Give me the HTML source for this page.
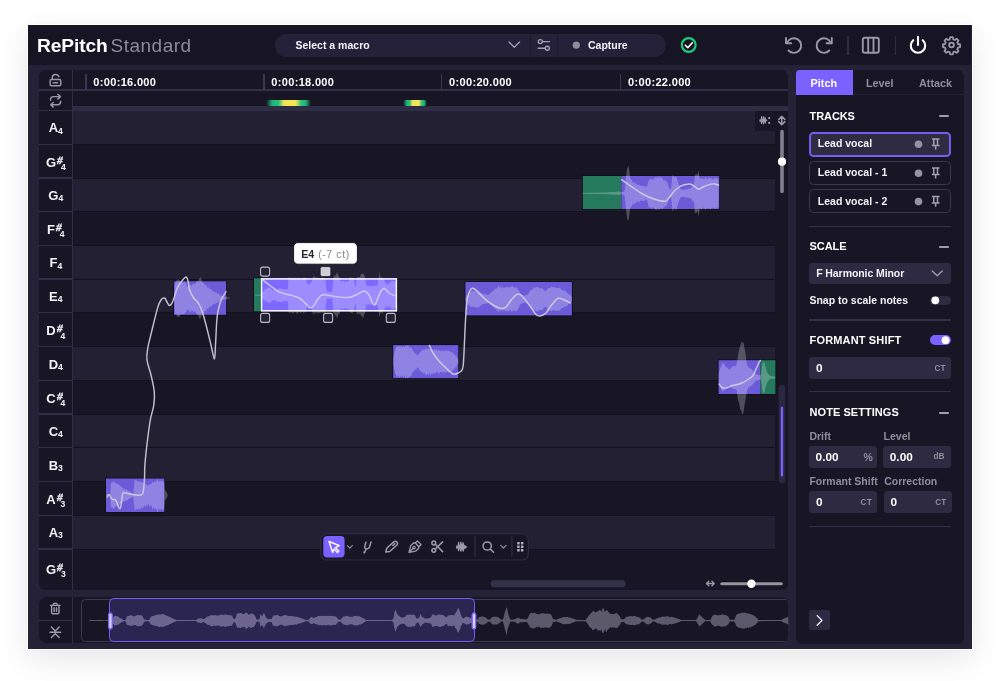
<!DOCTYPE html>
<html><head><meta charset="utf-8"><title>RePitch Standard</title>
<style>
*{box-sizing:border-box;margin:0;padding:0}
html,body{width:1000px;height:681px;background:#fff;overflow:hidden}
body{font-family:"Liberation Sans",sans-serif;color:#fff;position:relative}
#win{position:absolute;left:28.3px;top:25px;width:943.4px;height:623.8px;background:#252238;outline:1.3px solid #fff;box-shadow:0 10px 30px rgba(0,0,0,.10),0 0 6px rgba(0,0,0,.05)}
#hdr{position:absolute;left:28.3px;top:25px;width:943.1px;height:40px;background:#171524}
.panel{position:absolute;background:#181625;border-radius:8px;overflow:hidden}
.t{position:absolute;white-space:nowrap;font-weight:700;line-height:1;font-size:10.5px;color:#f3f2f7}
.g{color:#908e9c}
.ln{position:absolute;background:#312e47}
.box{position:absolute;background:#2d2a41;border-radius:3px}
svg{position:absolute;left:0;top:0;overflow:visible}
.kl{position:absolute;left:39px;width:33.6px;text-align:center;font-weight:700;font-size:13px;color:#f3f2f7;line-height:13px;height:13px;white-space:nowrap}
.kl span{display:inline-block;line-height:1}
.o1{font-size:8.6px;position:relative;top:1.2px;margin-left:0px}
.sh{font-size:10.5px;position:relative;top:-3.0px;margin-left:1.0px;width:3.9px;-webkit-text-stroke:0.35px #f3f2f7;transform:skewX(-8deg)}
.o2{font-size:8.6px;position:relative;top:3.1px}
</style></head>
<body>
<div id="root" style="position:absolute;left:0;top:0;width:1000px;height:681px;will-change:transform">
<div id="win"></div>
<div id="hdr"></div>

<div class="t" style="left:37px;top:36.1px;font-size:19.2px;letter-spacing:-0.1px;color:#fff">RePitch</div>
<div class="t" style="left:110.5px;top:36.1px;font-size:19px;font-weight:400;letter-spacing:0.5px;color:#8d8b99">Standard</div>
<div style="position:absolute;left:275px;top:33.5px;width:390.5px;height:23.5px;border-radius:12px;background:#242138"></div>
<div class="ln" style="left:530px;top:33.5px;width:1px;height:23.5px;background:#1b192b"></div>
<div class="ln" style="left:557px;top:33.5px;width:1px;height:23.5px;background:#1b192b"></div>
<div class="t" style="left:295.5px;top:40px">Select a macro</div>
<div class="t" style="left:588px;top:40px">Capture</div>
<div class="ln" style="left:847px;top:35.5px;width:1.5px;height:19.5px;background:#2f2c44"></div>
<div class="ln" style="left:894.5px;top:35.5px;width:1.5px;height:19.5px;background:#2f2c44"></div>
<svg width="1000" height="681" viewBox="0 0 1000 681" fill="none" stroke-linecap="round" stroke-linejoin="round">
 <!-- chevron -->
 <path d="M509 42 L514.3 47.3 L519.6 42" stroke="#a3a1b0" stroke-width="1.3"/>
 <!-- sliders icon -->
 <g stroke="#a3a1b0" stroke-width="1.4">
  <circle cx="540.3" cy="41.6" r="2"/><path d="M542.6 41.6 H549.5"/>
  <circle cx="547.3" cy="48.2" r="2"/><path d="M538.3 48.2 H545"/>
 </g>
 <circle cx="576.3" cy="45.2" r="3.6" fill="#8f8d9b"/>
 <!-- check circle -->
 <circle cx="688.7" cy="45" r="6.9" stroke="#1fc97c" stroke-width="2.2"/>
 <path d="M685.3 45.2 L687.8 47.7 L692.3 42.8" stroke="#fff" stroke-width="1.6"/>
 <!-- undo -->
 <g stroke="#9a98a6" stroke-width="1.9">
  <path d="M786 38 V43.2 H791.2"/>
  <path d="M787 43 A7.3 7.3 0 1 1 788.5 50.5"/>
  <path d="M831.8 38 V43.2 H826.6"/>
  <path d="M830.8 43 A7.3 7.3 0 1 0 829.3 50.5"/>
 </g>
 <!-- columns -->
 <g stroke="#9a98a6" stroke-width="1.9">
  <rect x="862.8" y="37.8" width="16" height="15" rx="2"/>
  <path d="M868.2 38 V52.6 M873.5 38 V52.6"/>
 </g>
 <!-- power -->
 <g stroke="#fff" stroke-width="2.1">
  <path d="M918 37 V45"/>
  <path d="M913.2 40.2 A7.2 7.2 0 1 0 922.8 40.2"/>
 </g>
 <!-- gear -->
 <g stroke="#9a98a6" stroke-width="1.8">
  <circle cx="951.5" cy="45" r="2.4"/>
  <path id="gear" d="M950.2 37.2 h2.6 l0.5 2.2 l1.5 0.6 l1.9 -1.2 l1.8 1.8 l-1.2 1.9 l0.6 1.5 l2.2 0.5 v2.6 l-2.2 0.5 l-0.6 1.5 l1.2 1.9 l-1.8 1.8 l-1.9 -1.2 l-1.5 0.6 l-0.5 2.2 h-2.6 l-0.5 -2.2 l-1.5 -0.6 l-1.9 1.2 l-1.8 -1.8 l1.2 -1.9 l-0.6 -1.5 l-2.2 -0.5 v-2.6 l2.2 -0.5 l0.6 -1.5 l-1.2 -1.9 l1.8 -1.8 l1.9 1.2 l1.5 -0.6 z"/>
 </g>
</svg>
<div class="panel" style="left:39px;top:70px;width:749.3px;height:519.8px;border-radius:6px"></div>
<div style="position:absolute;left:73px;top:111.05px;width:702.3px;height:32.73px;background:#222032"></div>
<div style="position:absolute;left:73px;top:178.51px;width:702.3px;height:32.73px;background:#222032"></div>
<div style="position:absolute;left:73px;top:245.97px;width:702.3px;height:32.73px;background:#222032"></div>
<div style="position:absolute;left:73px;top:279.70px;width:702.3px;height:32.73px;background:#222032"></div>
<div style="position:absolute;left:73px;top:347.16px;width:702.3px;height:32.73px;background:#222032"></div>
<div style="position:absolute;left:73px;top:414.62px;width:702.3px;height:32.73px;background:#222032"></div>
<div style="position:absolute;left:73px;top:448.35px;width:702.3px;height:32.73px;background:#222032"></div>
<div style="position:absolute;left:73px;top:515.81px;width:702.3px;height:32.73px;background:#222032"></div>
<div style="position:absolute;left:73px;top:143.78px;width:702.3px;height:1px;background:#13111e"></div>
<div style="position:absolute;left:73px;top:177.51px;width:702.3px;height:1px;background:#13111e"></div>
<div style="position:absolute;left:73px;top:211.24px;width:702.3px;height:1px;background:#13111e"></div>
<div style="position:absolute;left:73px;top:244.97px;width:702.3px;height:1px;background:#13111e"></div>
<div style="position:absolute;left:73px;top:278.70px;width:702.3px;height:1px;background:#13111e"></div>
<div style="position:absolute;left:73px;top:312.43px;width:702.3px;height:1px;background:#13111e"></div>
<div style="position:absolute;left:73px;top:346.16px;width:702.3px;height:1px;background:#13111e"></div>
<div style="position:absolute;left:73px;top:379.89px;width:702.3px;height:1px;background:#13111e"></div>
<div style="position:absolute;left:73px;top:413.62px;width:702.3px;height:1px;background:#13111e"></div>
<div style="position:absolute;left:73px;top:447.35px;width:702.3px;height:1px;background:#13111e"></div>
<div style="position:absolute;left:73px;top:481.08px;width:702.3px;height:1px;background:#13111e"></div>
<div style="position:absolute;left:73px;top:514.81px;width:702.3px;height:1px;background:#13111e"></div>
<div style="position:absolute;left:73px;top:548.54px;width:702.3px;height:1px;background:#13111e"></div>
<div style="position:absolute;left:755.4px;top:110.5px;width:20px;height:20px;background:#181625"></div>
<div style="position:absolute;left:73px;top:105.9px;width:715.3px;height:4.8px;background:#2f2c45"></div>
<div class="ln" style="left:39px;top:89.4px;width:749.3px;height:1.25px;background:#322f46"></div>
<div class="ln" style="left:72px;top:70px;width:1.3px;height:520px"></div>
<div class="ln" style="left:39px;top:109.6px;width:33px;height:1.2px"></div>
<div class="ln" style="left:39px;top:143.53px;width:33px;height:1.3px"></div>
<div class="ln" style="left:39px;top:177.26px;width:33px;height:1.3px"></div>
<div class="ln" style="left:39px;top:210.99px;width:33px;height:1.3px"></div>
<div class="ln" style="left:39px;top:244.72px;width:33px;height:1.3px"></div>
<div class="ln" style="left:39px;top:278.45px;width:33px;height:1.3px"></div>
<div class="ln" style="left:39px;top:312.18px;width:33px;height:1.3px"></div>
<div class="ln" style="left:39px;top:345.91px;width:33px;height:1.3px"></div>
<div class="ln" style="left:39px;top:379.64px;width:33px;height:1.3px"></div>
<div class="ln" style="left:39px;top:413.37px;width:33px;height:1.3px"></div>
<div class="ln" style="left:39px;top:447.10px;width:33px;height:1.3px"></div>
<div class="ln" style="left:39px;top:480.83px;width:33px;height:1.3px"></div>
<div class="ln" style="left:39px;top:514.56px;width:33px;height:1.3px"></div>
<div class="ln" style="left:39px;top:548.29px;width:33px;height:1.3px"></div>
<div class="kl" style="top:121.47px">A<span class="o1">4</span></div>
<div class="kl" style="top:155.80px">G<span class="sh">#</span><span class="o2">4</span></div>
<div class="kl" style="top:188.92px">G<span class="o1">4</span></div>
<div class="kl" style="top:223.25px">F<span class="sh">#</span><span class="o2">4</span></div>
<div class="kl" style="top:256.38px">F<span class="o1">4</span></div>
<div class="kl" style="top:290.11px">E<span class="o1">4</span></div>
<div class="kl" style="top:324.44px">D<span class="sh">#</span><span class="o2">4</span></div>
<div class="kl" style="top:357.57px">D<span class="o1">4</span></div>
<div class="kl" style="top:391.90px">C<span class="sh">#</span><span class="o2">4</span></div>
<div class="kl" style="top:425.03px">C<span class="o1">4</span></div>
<div class="kl" style="top:458.76px">B<span class="o1">3</span></div>
<div class="kl" style="top:493.10px">A<span class="sh">#</span><span class="o2">3</span></div>
<div class="kl" style="top:526.23px">A<span class="o1">3</span></div>
<div class="kl" style="top:563.22px">G<span class="sh">#</span><span class="o2">3</span></div>
<div class="ln" style="left:85.3px;top:74px;width:1.3px;height:15.5px;background:#3a3750"></div>
<div class="t" style="left:93.3px;top:76.5px;font-size:11px;letter-spacing:0.33px;color:#fff">0:00:16.000</div>
<div class="ln" style="left:263.4px;top:74px;width:1.3px;height:15.5px;background:#3a3750"></div>
<div class="t" style="left:271.3px;top:76.5px;font-size:11px;letter-spacing:0.33px;color:#fff">0:00:18.000</div>
<div class="ln" style="left:441.1px;top:74px;width:1.3px;height:15.5px;background:#3a3750"></div>
<div class="t" style="left:449.1px;top:76.5px;font-size:11px;letter-spacing:0.33px;color:#fff">0:00:20.000</div>
<div class="ln" style="left:620.1px;top:74px;width:1.3px;height:15.5px;background:#3a3750"></div>
<div class="t" style="left:628.1px;top:76.5px;font-size:11px;letter-spacing:0.33px;color:#fff">0:00:22.000</div>
<div style="position:absolute;left:266px;top:100px;width:45px;height:6px;border-radius:3px;filter:blur(0.7px);background:linear-gradient(90deg,rgba(31,201,124,0) 0%,#1fb577 14%,#24c27b 28%,#f3e255 40%,#f6e552 66%,#2cc47c 78%,#1fb577 88%,rgba(31,201,124,0) 100%)"></div>
<div style="position:absolute;left:402.5px;top:100px;width:24.5px;height:6px;border-radius:3px;filter:blur(0.7px);background:linear-gradient(90deg,rgba(31,201,124,0) 0%,#1fb577 16%,#2cc47c 28%,#f3e255 40%,#f6e552 66%,#2cc47c 78%,#1fb577 88%,rgba(31,201,124,0) 100%)"></div>
<svg width="1000" height="681" viewBox="0 0 1000 681" fill="none">
<rect x="105.3" y="477.8" width="59.7" height="34.9" fill="#0d0c16"/>
<rect x="173.3" y="280.6" width="53.5" height="34.9" fill="#0d0c16"/>
<rect x="253.3" y="277.5" width="8.9" height="34.6" fill="#0d0c16"/>
<rect x="392.5" y="344.4" width="66.5" height="34.4" fill="#0d0c16"/>
<rect x="464.7" y="281.3" width="107.9" height="34.8" fill="#0d0c16"/>
<rect x="582.1" y="175.3" width="39.9" height="34.4" fill="#0d0c16"/>
<rect x="620.6" y="175.3" width="99.3" height="34.4" fill="#0d0c16"/>
<rect x="717.9" y="359.5" width="43.4" height="35.2" fill="#0d0c16"/>
<rect x="759.9" y="359.5" width="16.2" height="35.2" fill="#0d0c16"/>
<rect x="106.0" y="478.5" width="58.3" height="33.5" fill="#6b5bd9"/>
<rect x="174.0" y="281.3" width="52.1" height="33.5" fill="#6b5bd9"/>
<rect x="254.0" y="278.2" width="7.5" height="33.2" fill="#257a5d"/>
<rect x="261.0" y="278.2" width="136.0" height="33.2" fill="#7d69ff"/>
<rect x="393.2" y="345.1" width="65.1" height="33.0" fill="#6b5bd9"/>
<rect x="465.4" y="282.0" width="106.5" height="33.4" fill="#6b5bd9"/>
<rect x="582.8" y="176.0" width="38.5" height="33.0" fill="#257a5d"/>
<rect x="621.3" y="176.0" width="97.9" height="33.0" fill="#6b5bd9"/>
<rect x="718.6" y="360.2" width="42.0" height="33.8" fill="#6b5bd9"/>
<rect x="760.6" y="360.2" width="14.8" height="33.8" fill="#257a5d"/>
<polygon points="106.0,494.7 106.7,494.6 107.4,494.6 108.1,494.5 108.8,494.4 109.5,494.4 110.2,494.3 110.9,483.5 111.6,482.5 112.3,482.8 113.0,481.0 113.7,482.6 114.4,481.9 115.1,483.0 115.8,482.8 116.5,484.4 117.2,483.7 117.9,483.7 118.6,484.9 119.3,485.0 120.0,485.6 120.7,487.2 121.4,486.5 122.1,487.3 122.8,488.2 123.5,489.0 124.2,488.4 124.9,489.3 125.6,489.4 126.3,489.6 127.0,490.1 127.7,490.3 128.4,491.1 129.1,491.1 129.8,491.8 130.5,491.8 131.2,492.2 131.9,493.0 132.6,493.3 133.3,493.3 134.0,485.4 134.7,479.7 135.4,479.4 136.1,480.8 136.8,480.5 137.5,481.2 138.2,481.7 138.9,481.4 139.6,481.8 140.3,481.3 141.0,482.2 141.7,482.0 142.4,482.5 143.1,482.6 143.8,483.7 144.5,485.1 145.2,484.0 145.9,484.1 146.6,484.6 147.3,485.5 148.0,484.9 148.7,485.5 149.4,483.8 150.1,484.0 150.8,484.3 151.5,484.5 152.2,482.2 152.9,481.4 153.6,483.3 154.3,481.0 155.0,481.7 155.7,482.0 156.4,481.2 157.1,479.4 157.8,479.3 158.5,481.9 159.2,480.4 159.9,482.2 160.6,480.5 161.3,481.8 162.0,480.5 162.7,480.4 163.4,481.9 164.1,480.8 164.8,489.2 165.5,490.7 166.2,491.5 166.9,493.1 167.6,494.2 167.6,496.2 166.9,497.4 166.2,498.7 165.5,499.4 164.8,501.6 164.1,509.1 163.4,509.5 162.7,510.9 162.0,509.7 161.3,508.6 160.6,510.0 159.9,508.5 159.2,510.2 158.5,508.6 157.8,511.4 157.1,512.1 156.4,509.2 155.7,508.2 155.0,509.2 154.3,508.8 153.6,506.7 152.9,510.0 152.2,508.2 151.5,506.0 150.8,505.2 150.1,506.2 149.4,506.7 148.7,504.1 148.0,505.7 147.3,505.1 146.6,505.0 145.9,506.5 145.2,506.4 144.5,505.6 143.8,506.5 143.1,508.2 142.4,508.4 141.7,507.4 141.0,507.3 140.3,509.5 139.6,509.6 138.9,508.5 138.2,508.6 137.5,509.4 136.8,509.5 136.1,509.3 135.4,510.5 134.7,510.4 134.0,505.2 133.3,497.0 132.6,497.1 131.9,497.5 131.2,498.0 130.5,498.6 129.8,498.8 129.1,499.1 128.4,499.1 127.7,500.3 127.0,500.1 126.3,500.5 125.6,500.9 124.9,501.3 124.2,501.6 123.5,501.2 122.8,502.0 122.1,503.6 121.4,503.8 120.7,503.6 120.0,504.3 119.3,505.1 118.6,505.7 117.9,507.4 117.2,506.6 116.5,505.6 115.8,506.8 115.1,507.5 114.4,507.9 113.7,508.4 113.0,510.1 112.3,507.0 111.6,507.4 110.9,507.5 110.2,496.1 109.5,496.1 108.8,496.0 108.1,495.9 107.4,495.8 106.7,495.8 106.0,495.7" fill="#fff" fill-opacity="0.24"/>
<polygon points="174.0,296.1 174.7,287.8 175.4,282.4 176.1,281.7 176.8,280.6 177.5,279.7 178.2,279.0 178.9,280.0 179.6,280.2 180.3,282.1 181.0,281.1 181.7,282.0 182.4,282.4 183.1,282.7 183.8,282.4 184.5,281.0 185.2,282.5 185.9,283.8 186.6,285.1 187.3,287.1 188.0,286.6 188.7,285.7 189.4,285.2 190.1,284.7 190.8,284.4 191.5,286.2 192.2,284.6 192.9,284.0 193.6,284.0 194.3,284.5 195.0,283.3 195.7,284.0 196.4,281.0 197.1,280.7 197.8,280.9 198.5,281.0 199.2,278.0 199.9,278.4 200.6,276.7 201.3,278.6 202.0,281.5 202.7,282.4 203.4,282.5 204.1,283.7 204.8,285.1 205.5,285.3 206.2,284.7 206.9,287.2 207.6,287.8 208.3,287.2 209.0,288.6 209.7,288.6 210.4,289.2 211.1,289.8 211.8,289.2 212.5,290.9 213.2,291.0 213.9,291.7 214.6,291.6 215.3,292.4 216.0,292.7 216.7,292.7 217.4,293.5 218.1,293.7 218.8,293.9 219.5,294.8 220.2,295.2 220.9,295.5 221.6,295.6 222.3,295.9 223.0,296.3 223.7,296.5 224.4,296.8 225.1,296.9 225.8,297.2 226.5,295.6 227.2,297.5 227.9,297.5 228.6,297.5 229.3,297.5 230.0,297.6 230.0,298.3 229.3,298.5 228.6,298.5 227.9,298.5 227.2,298.6 226.5,300.4 225.8,298.8 225.1,299.1 224.4,299.2 223.7,299.5 223.0,299.6 222.3,300.0 221.6,300.6 220.9,300.4 220.2,300.6 219.5,300.9 218.8,301.9 218.1,302.5 217.4,302.4 216.7,303.1 216.0,302.9 215.3,304.0 214.6,304.3 213.9,304.0 213.2,304.5 212.5,304.6 211.8,306.3 211.1,306.4 210.4,306.3 209.7,306.7 209.0,307.4 208.3,308.4 207.6,309.0 206.9,308.1 206.2,311.4 205.5,311.2 204.8,310.7 204.1,313.4 203.4,313.4 202.7,312.9 202.0,314.3 201.3,316.0 200.6,319.0 199.9,316.8 199.2,319.3 198.5,315.9 197.8,315.1 197.1,314.0 196.4,314.3 195.7,311.4 195.0,312.0 194.3,310.9 193.6,312.8 192.9,311.2 192.2,310.4 191.5,310.6 190.8,311.7 190.1,312.4 189.4,310.6 188.7,311.1 188.0,309.6 187.3,309.4 186.6,311.4 185.9,312.1 185.2,312.4 184.5,314.2 183.8,314.5 183.1,314.3 182.4,314.6 181.7,313.5 181.0,315.3 180.3,314.7 179.6,316.2 178.9,316.9 178.2,317.0 177.5,316.8 176.8,315.9 176.1,313.7 175.4,314.6 174.7,309.0 174.0,299.8" fill="#fff" fill-opacity="0.24"/>
<polygon points="255.0,294.8 255.7,294.8 256.4,294.7 257.1,294.7 257.8,294.7 258.5,294.7 259.2,294.7 259.9,294.6 260.6,294.6 261.3,294.2 262.0,293.2 262.7,292.0 263.4,290.8 264.1,290.1 264.8,289.5 265.5,289.0 266.2,288.8 266.9,288.4 267.6,288.0 268.3,287.4 269.0,287.2 269.7,287.8 270.4,288.1 271.1,289.0 271.8,289.3 272.5,289.8 273.2,290.2 273.9,290.2 274.6,290.2 275.3,290.0 276.0,289.4 276.7,289.2 277.4,289.2 278.1,288.7 278.8,288.6 279.5,288.6 280.2,288.8 280.9,288.6 281.6,288.8 282.3,288.8 283.0,288.9 283.7,289.1 284.4,289.1 285.1,289.2 285.8,289.3 286.5,289.3 287.2,289.2 287.9,289.0 288.6,277.4 289.3,277.1 290.0,277.9 290.7,277.9 291.4,277.4 292.1,277.8 292.8,278.0 293.5,277.9 294.2,277.6 294.9,278.3 295.6,277.4 296.3,278.4 297.0,277.7 297.7,277.6 298.4,278.5 299.1,277.7 299.8,278.1 300.5,277.8 301.2,278.4 301.9,278.3 302.6,278.2 303.3,277.3 304.0,278.1 304.7,277.5 305.4,277.3 306.1,277.9 306.8,283.3 307.5,283.6 308.2,283.8 308.9,284.0 309.6,284.1 310.3,283.3 311.0,282.8 311.7,281.8 312.4,278.2 313.1,276.9 313.8,275.7 314.5,276.9 315.2,277.4 315.9,277.3 316.6,277.9 317.3,277.3 318.0,277.7 318.7,277.9 319.4,277.9 320.1,278.0 320.8,278.1 321.5,278.1 322.2,277.5 322.9,277.2 323.6,278.1 324.3,278.2 325.0,277.2 325.7,283.0 326.4,288.5 327.1,291.9 327.8,291.8 328.5,291.8 329.2,291.9 329.9,291.9 330.6,292.0 331.3,291.9 332.0,292.1 332.7,286.9 333.4,276.8 334.1,276.7 334.8,275.2 335.5,275.2 336.2,275.2 336.9,272.1 337.6,273.5 338.3,275.9 339.0,276.9 339.7,277.3 340.4,281.4 341.1,281.4 341.8,281.0 342.5,281.3 343.2,281.3 343.9,281.8 344.6,281.9 345.3,281.8 346.0,281.8 346.7,281.8 347.4,281.6 348.1,281.7 348.8,281.3 349.5,277.8 350.2,277.2 350.9,277.6 351.6,277.7 352.3,277.9 353.0,278.1 353.7,277.9 354.4,281.7 355.1,286.1 355.8,286.7 356.5,278.9 357.2,277.3 357.9,277.3 358.6,277.2 359.3,277.0 360.0,277.3 360.7,274.3 361.4,274.3 362.1,273.7 362.8,273.4 363.5,273.8 364.2,275.2 364.9,276.9 365.6,282.1 366.3,285.2 367.0,285.8 367.7,285.7 368.4,286.1 369.1,286.0 369.8,286.4 370.5,286.2 371.2,286.2 371.9,286.1 372.6,286.3 373.3,286.1 374.0,286.0 374.7,285.8 375.4,286.1 376.1,285.7 376.8,285.7 377.5,285.7 378.2,279.7 378.9,277.1 379.6,271.6 380.3,277.2 381.0,277.7 381.7,277.1 382.4,277.2 383.1,278.5 383.8,280.0 384.5,281.0 385.2,282.0 385.9,283.4 386.6,284.0 387.3,284.5 388.0,283.9 388.7,283.6 389.4,283.0 390.1,282.5 390.8,282.1 391.5,281.1 392.2,280.9 392.9,280.7 393.6,280.8 394.3,281.0 395.0,281.8 395.7,282.0 396.4,282.6 396.4,306.9 395.7,308.3 395.0,308.0 394.3,308.4 393.6,308.7 392.9,309.2 392.2,308.8 391.5,308.6 390.8,307.3 390.1,307.9 389.4,307.1 388.7,307.0 388.0,306.6 387.3,305.5 386.6,307.2 385.9,306.1 385.2,308.2 384.5,308.9 383.8,310.2 383.1,310.9 382.4,314.2 381.7,312.9 381.0,311.4 380.3,313.6 379.6,317.3 378.9,313.4 378.2,310.3 377.5,304.8 376.8,305.4 376.1,305.2 375.4,304.2 374.7,305.0 374.0,304.7 373.3,304.1 372.6,303.6 371.9,304.4 371.2,304.3 370.5,304.9 369.8,304.7 369.1,304.5 368.4,304.1 367.7,305.3 367.0,303.9 366.3,304.5 365.6,308.5 364.9,313.9 364.2,314.1 363.5,317.1 362.8,318.4 362.1,316.2 361.4,315.9 360.7,315.2 360.0,312.5 359.3,314.7 358.6,312.8 357.9,314.4 357.2,314.3 356.5,311.7 355.8,303.4 355.1,305.0 354.4,308.7 353.7,312.2 353.0,311.8 352.3,313.9 351.6,312.7 350.9,312.2 350.2,313.1 349.5,311.6 348.8,309.3 348.1,308.6 347.4,308.4 346.7,309.2 346.0,309.3 345.3,307.6 344.6,308.5 343.9,308.1 343.2,310.1 342.5,309.8 341.8,308.8 341.1,308.5 340.4,308.3 339.7,314.5 339.0,312.8 338.3,314.9 337.6,316.8 336.9,318.9 336.2,315.5 335.5,316.0 334.8,314.0 334.1,314.4 333.4,313.0 332.7,303.5 332.0,298.2 331.3,298.4 330.6,298.4 329.9,298.4 329.2,298.4 328.5,298.7 327.8,298.6 327.1,298.3 326.4,301.7 325.7,307.3 325.0,314.4 324.3,313.3 323.6,312.5 322.9,311.8 322.2,313.7 321.5,312.1 320.8,312.5 320.1,312.9 319.4,312.9 318.7,312.5 318.0,313.9 317.3,312.8 316.6,312.2 315.9,314.1 315.2,312.2 314.5,312.9 313.8,315.7 313.1,312.3 312.4,313.1 311.7,309.0 311.0,307.4 310.3,306.7 309.6,306.8 308.9,307.2 308.2,305.9 307.5,306.7 306.8,307.2 306.1,312.5 305.4,312.6 304.7,311.9 304.0,312.5 303.3,314.0 302.6,311.1 301.9,311.3 301.2,312.9 300.5,313.4 299.8,312.8 299.1,311.4 298.4,312.5 297.7,314.1 297.0,314.1 296.3,312.5 295.6,311.7 294.9,313.0 294.2,312.0 293.5,313.0 292.8,313.6 292.1,313.2 291.4,311.9 290.7,311.9 290.0,313.7 289.3,312.3 288.6,313.3 287.9,301.3 287.2,300.9 286.5,301.2 285.8,300.7 285.1,300.8 284.4,301.2 283.7,300.9 283.0,301.1 282.3,301.7 281.6,301.9 280.9,302.2 280.2,301.2 279.5,301.7 278.8,301.6 278.1,301.8 277.4,301.2 276.7,301.6 276.0,300.8 275.3,300.1 274.6,300.3 273.9,299.9 273.2,300.3 272.5,300.6 271.8,301.5 271.1,301.5 270.4,302.4 269.7,302.3 269.0,303.3 268.3,302.7 267.6,302.6 266.9,302.0 266.2,301.2 265.5,301.1 264.8,300.7 264.1,300.5 263.4,299.4 262.7,298.5 262.0,297.3 261.3,296.2 260.6,295.8 259.9,295.7 259.2,295.7 258.5,295.7 257.8,295.7 257.1,295.7 256.4,295.7 255.7,295.6 255.0,295.6" fill="#fff" fill-opacity="0.24"/>
<polygon points="393.2,359.4 393.9,355.4 394.6,352.1 395.3,349.9 396.0,348.0 396.7,346.1 397.4,346.7 398.1,345.9 398.8,347.1 399.5,346.0 400.2,347.5 400.9,346.0 401.6,346.3 402.3,347.2 403.0,346.7 403.7,346.2 404.4,347.5 405.1,346.3 405.8,345.4 406.5,347.0 407.2,345.2 407.9,345.4 408.6,345.3 409.3,347.3 410.0,348.4 410.7,346.9 411.4,347.3 412.1,348.8 412.8,350.8 413.5,351.6 414.2,351.9 414.9,353.7 415.6,353.2 416.3,354.2 417.0,355.2 417.7,355.1 418.4,355.1 419.1,353.4 419.8,352.4 420.5,352.1 421.2,351.1 421.9,350.5 422.6,349.9 423.3,349.0 424.0,350.8 424.7,349.6 425.4,348.6 426.1,349.0 426.8,348.3 427.5,349.7 428.2,347.7 428.9,348.7 429.6,349.8 430.3,348.4 431.0,349.4 431.7,349.7 432.4,349.1 433.1,350.1 433.8,350.0 434.5,348.6 435.2,349.1 435.9,350.9 436.6,349.2 437.3,351.1 438.0,350.5 438.7,349.3 439.4,350.1 440.1,350.9 440.8,350.8 441.5,350.8 442.2,351.5 442.9,349.6 443.6,351.7 444.3,351.0 445.0,350.3 445.7,351.1 446.4,349.9 447.1,351.6 447.8,350.3 448.5,350.7 449.2,351.3 449.9,351.1 450.6,352.2 451.3,351.7 452.0,352.0 452.7,353.0 453.4,353.6 454.1,353.8 454.8,354.7 455.5,355.7 456.2,355.6 456.9,357.5 457.6,358.6 458.3,359.9 458.3,363.0 457.6,364.1 456.9,365.3 456.2,367.5 455.5,367.2 454.8,368.0 454.1,369.2 453.4,369.9 452.7,369.7 452.0,370.9 451.3,371.9 450.6,371.0 449.9,371.5 449.2,371.6 448.5,372.3 447.8,372.1 447.1,371.2 446.4,372.7 445.7,372.4 445.0,372.4 444.3,372.3 443.6,372.0 442.9,374.2 442.2,371.3 441.5,372.3 440.8,371.9 440.1,371.9 439.4,372.9 438.7,374.2 438.0,373.3 437.3,371.5 436.6,372.8 435.9,372.0 435.2,373.0 434.5,373.4 433.8,373.5 433.1,372.2 432.4,374.3 431.7,373.0 431.0,374.5 430.3,375.3 429.6,372.4 428.9,373.7 428.2,376.3 427.5,373.5 426.8,374.5 426.1,374.5 425.4,375.0 424.7,373.4 424.0,372.1 423.3,373.2 422.6,372.9 421.9,371.8 421.2,372.1 420.5,371.0 419.8,370.1 419.1,369.8 418.4,367.4 417.7,367.5 417.0,367.9 416.3,368.7 415.6,370.3 414.9,369.5 414.2,371.4 413.5,370.8 412.8,372.8 412.1,373.3 411.4,376.0 410.7,377.1 410.0,375.4 409.3,376.6 408.6,377.5 407.9,378.1 407.2,378.6 406.5,375.2 405.8,378.7 405.1,377.7 404.4,375.4 403.7,377.5 403.0,376.2 402.3,375.3 401.6,377.2 400.9,375.9 400.2,376.2 399.5,378.2 398.8,375.4 398.1,378.2 397.4,375.3 396.7,377.8 396.0,374.5 395.3,374.0 394.6,370.8 393.9,368.1 393.2,363.5" fill="#fff" fill-opacity="0.24"/>
<polygon points="465.4,298.0 466.1,297.1 466.8,295.8 467.5,295.1 468.2,293.8 468.9,293.3 469.6,293.0 470.3,291.7 471.0,291.7 471.7,290.4 472.4,290.8 473.1,290.9 473.8,290.4 474.5,289.9 475.2,291.2 475.9,291.1 476.6,290.6 477.3,290.2 478.0,290.9 478.7,291.5 479.4,291.0 480.1,292.7 480.8,291.9 481.5,293.0 482.2,293.5 482.9,293.9 483.6,294.0 484.3,293.8 485.0,294.6 485.7,294.4 486.4,294.5 487.1,294.9 487.8,294.9 488.5,295.0 489.2,294.5 489.9,293.8 490.6,292.7 491.3,292.5 492.0,292.1 492.7,291.1 493.4,290.8 494.1,290.5 494.8,289.0 495.5,288.6 496.2,289.0 496.9,287.7 497.6,287.3 498.3,286.1 499.0,286.5 499.7,287.6 500.4,286.0 501.1,288.1 501.8,287.4 502.5,286.7 503.2,288.1 503.9,287.4 504.6,288.5 505.3,287.1 506.0,286.9 506.7,287.3 507.4,286.5 508.1,287.8 508.8,286.9 509.5,287.1 510.2,287.0 510.9,287.3 511.6,286.3 512.3,286.0 513.0,287.1 513.7,286.6 514.4,288.2 515.1,287.1 515.8,287.6 516.5,287.2 517.2,287.9 517.9,289.4 518.6,290.4 519.3,291.4 520.0,293.6 520.7,293.5 521.4,294.2 522.1,294.7 522.8,295.1 523.5,295.0 524.2,295.7 524.9,295.5 525.6,295.2 526.3,294.6 527.0,295.1 527.7,294.6 528.4,293.8 529.1,292.4 529.8,291.3 530.5,290.1 531.2,290.3 531.9,289.5 532.6,289.2 533.3,287.6 534.0,286.9 534.7,288.2 535.4,287.7 536.1,287.2 536.8,287.4 537.5,287.0 538.2,286.9 538.9,287.9 539.6,288.7 540.3,288.0 541.0,288.3 541.7,288.4 542.4,288.1 543.1,289.2 543.8,290.1 544.5,290.4 545.2,290.6 545.9,291.2 546.6,289.2 547.3,288.9 548.0,288.3 548.7,287.8 549.4,288.2 550.1,287.7 550.8,287.9 551.5,286.0 552.2,287.2 552.9,287.3 553.6,287.0 554.3,287.2 555.0,286.9 555.7,287.7 556.4,288.0 557.1,287.7 557.8,287.9 558.5,287.6 559.2,288.8 559.9,287.3 560.6,288.3 561.3,289.7 562.0,289.9 562.7,290.1 563.4,290.5 564.1,291.3 564.8,290.5 565.5,290.8 566.2,292.0 566.9,292.4 567.6,293.3 568.3,293.7 569.0,294.1 569.7,294.7 570.4,294.9 571.1,296.0 571.8,296.7 571.8,301.5 571.1,302.0 570.4,302.9 569.7,303.3 569.0,303.6 568.3,304.3 567.6,305.2 566.9,306.0 566.2,306.3 565.5,306.9 564.8,307.3 564.1,306.3 563.4,307.9 562.7,307.9 562.0,308.5 561.3,308.1 560.6,309.2 559.9,311.3 559.2,310.0 558.5,311.0 557.8,310.6 557.1,310.9 556.4,310.5 555.7,309.8 555.0,311.1 554.3,310.5 553.6,310.1 552.9,309.9 552.2,310.4 551.5,311.5 550.8,310.5 550.1,311.2 549.4,309.7 548.7,310.9 548.0,310.6 547.3,309.8 546.6,308.6 545.9,306.5 545.2,307.1 544.5,307.2 543.8,307.5 543.1,309.0 542.4,310.5 541.7,310.2 541.0,309.7 540.3,310.3 539.6,309.8 538.9,309.3 538.2,311.4 537.5,311.8 536.8,311.1 536.1,311.3 535.4,310.3 534.7,309.2 534.0,311.7 533.3,310.1 532.6,309.3 531.9,309.2 531.2,307.6 530.5,307.7 529.8,307.2 529.1,305.9 528.4,303.9 527.7,303.1 527.0,302.7 526.3,303.7 525.6,303.0 524.9,302.3 524.2,302.5 523.5,303.3 522.8,303.0 522.1,303.2 521.4,303.8 520.7,304.2 520.0,304.0 519.3,307.2 518.6,307.8 517.9,308.7 517.2,310.8 516.5,310.7 515.8,311.1 515.1,311.5 514.4,309.3 513.7,310.9 513.0,310.5 512.3,311.4 511.6,311.8 510.9,310.3 510.2,310.8 509.5,310.2 508.8,311.9 508.1,309.9 507.4,311.4 506.7,310.9 506.0,311.9 505.3,310.8 504.6,310.2 503.9,310.6 503.2,309.9 502.5,311.4 501.8,309.7 501.1,309.8 500.4,311.3 499.7,309.5 499.0,312.1 498.3,311.2 497.6,310.7 496.9,310.7 496.2,309.1 495.5,309.1 494.8,309.0 494.1,307.6 493.4,307.6 492.7,306.4 492.0,306.0 491.3,305.3 490.6,305.1 489.9,304.4 489.2,303.5 488.5,303.1 487.8,303.3 487.1,303.4 486.4,303.5 485.7,303.7 485.0,303.5 484.3,304.2 483.6,304.2 482.9,304.1 482.2,304.5 481.5,305.0 480.8,306.6 480.1,305.5 479.4,307.5 478.7,307.0 478.0,306.8 477.3,307.9 476.6,308.0 475.9,307.3 475.2,306.4 474.5,307.6 473.8,307.5 473.1,306.5 472.4,306.8 471.7,307.0 471.0,306.5 470.3,306.6 469.6,305.4 468.9,304.4 468.2,304.4 467.5,303.0 466.8,302.1 466.1,301.1 465.4,300.0" fill="#fff" fill-opacity="0.24"/>
<polygon points="582.8,192.8 583.5,192.7 584.2,192.8 584.9,192.8 585.6,192.8 586.3,192.8 587.0,192.7 587.7,192.8 588.4,192.7 589.1,192.7 589.8,192.7 590.5,192.7 591.2,192.7 591.9,192.7 592.6,192.7 593.3,192.7 594.0,192.7 594.7,192.7 595.4,192.7 596.1,192.6 596.8,192.7 597.5,192.7 598.2,192.7 598.9,192.5 599.6,192.7 600.3,192.6 601.0,192.6 601.7,192.5 602.4,192.5 603.1,192.4 603.8,192.4 604.5,192.4 605.2,192.3 605.9,192.3 606.6,192.4 607.3,192.4 608.0,192.2 608.7,192.2 609.4,192.3 610.1,192.1 610.8,192.1 611.5,192.1 612.2,192.0 612.9,192.1 613.6,192.0 614.3,191.8 615.0,192.0 615.7,191.7 616.4,191.9 617.1,191.6 617.8,191.5 618.5,191.6 619.2,191.8 619.9,192.0 620.6,192.3 621.3,192.3 622.0,192.2 622.7,192.1 623.4,192.1 624.1,191.8 624.8,189.9 625.5,182.6 626.2,175.4 626.9,169.5 627.6,167.7 628.3,165.4 629.0,168.5 629.7,173.7 630.4,178.8 631.1,179.5 631.8,180.1 632.5,182.4 633.2,182.3 633.9,183.2 634.6,182.6 635.3,182.4 636.0,184.4 636.7,183.5 637.4,184.6 638.1,185.4 638.8,184.3 639.5,185.2 640.2,185.7 640.9,185.5 641.6,186.1 642.3,186.0 643.0,186.0 643.7,186.1 644.4,185.9 645.1,186.4 645.8,186.8 646.5,186.8 647.2,186.1 647.9,182.7 648.6,180.6 649.3,179.2 650.0,179.7 650.7,178.9 651.4,177.8 652.1,180.2 652.8,180.1 653.5,179.5 654.2,178.5 654.9,177.6 655.6,176.9 656.3,178.0 657.0,175.9 657.7,178.9 658.4,176.0 659.1,177.9 659.8,175.6 660.5,178.8 661.2,176.6 661.9,177.9 662.6,178.0 663.3,179.7 664.0,181.0 664.7,179.2 665.4,180.8 666.1,182.0 666.8,181.0 667.5,183.1 668.2,185.5 668.9,188.3 669.6,189.0 670.3,188.9 671.0,189.3 671.7,183.1 672.4,175.5 673.1,175.1 673.8,177.1 674.5,177.6 675.2,176.9 675.9,175.9 676.6,178.0 677.3,180.1 678.0,181.4 678.7,184.7 679.4,186.2 680.1,188.6 680.8,188.9 681.5,189.6 682.2,189.5 682.9,189.6 683.6,190.0 684.3,189.4 685.0,189.4 685.7,189.4 686.4,189.0 687.1,189.3 687.8,189.1 688.5,188.7 689.2,188.3 689.9,188.2 690.6,188.5 691.3,187.4 692.0,186.5 692.7,186.3 693.4,185.6 694.1,183.5 694.8,175.6 695.5,174.1 696.2,175.2 696.9,173.8 697.6,174.6 698.3,170.9 699.0,173.3 699.7,177.8 700.4,178.9 701.1,177.8 701.8,178.2 702.5,179.5 703.2,177.8 703.9,179.5 704.6,178.9 705.3,177.1 706.0,177.3 706.7,179.0 707.4,179.2 708.1,178.3 708.8,177.8 709.5,178.4 710.2,177.8 710.9,178.5 711.6,178.3 712.3,178.9 713.0,179.3 713.7,178.9 714.4,178.4 715.1,178.0 715.8,176.8 716.5,178.7 717.2,179.5 717.9,177.7 718.6,179.3 718.6,207.1 717.9,207.9 717.2,207.8 716.5,207.4 715.8,209.2 715.1,209.3 714.4,208.2 713.7,207.2 713.0,208.1 712.3,207.5 711.6,207.9 710.9,209.2 710.2,209.6 709.5,208.8 708.8,208.2 708.1,209.0 707.4,207.7 706.7,208.4 706.0,209.0 705.3,210.3 704.6,208.4 703.9,206.8 703.2,209.2 702.5,207.7 701.8,209.6 701.1,209.8 700.4,208.4 699.7,207.9 699.0,213.6 698.3,216.4 697.6,210.8 696.9,212.7 696.2,212.4 695.5,213.7 694.8,212.2 694.1,202.4 693.4,201.2 692.7,200.7 692.0,200.2 691.3,199.1 690.6,197.8 689.9,198.8 689.2,198.6 688.5,198.1 687.8,197.4 687.1,197.5 686.4,197.8 685.7,197.4 685.0,197.3 684.3,197.1 683.6,196.5 682.9,196.9 682.2,197.0 681.5,197.0 680.8,197.4 680.1,198.1 679.4,200.2 678.7,201.5 678.0,204.7 677.3,206.3 676.6,208.4 675.9,211.4 675.2,208.7 674.5,208.3 673.8,209.0 673.1,210.5 672.4,211.8 671.7,202.8 671.0,197.0 670.3,197.8 669.6,197.8 668.9,198.5 668.2,201.1 667.5,203.3 666.8,206.4 666.1,205.0 665.4,205.7 664.7,207.5 664.0,206.4 663.3,208.0 662.6,209.6 661.9,207.8 661.2,209.6 660.5,207.6 659.8,210.1 659.1,209.3 658.4,209.4 657.7,208.6 657.0,210.9 656.3,208.9 655.6,209.5 654.9,210.1 654.2,208.3 653.5,208.0 652.8,207.4 652.1,206.8 651.4,210.0 650.7,207.7 650.0,206.6 649.3,208.2 648.6,206.0 647.9,203.6 647.2,200.7 646.5,199.7 645.8,199.5 645.1,200.6 644.4,200.7 643.7,201.1 643.0,200.7 642.3,201.1 641.6,200.3 640.9,200.7 640.2,200.9 639.5,201.7 638.8,202.8 638.1,201.4 637.4,201.5 636.7,202.9 636.0,201.6 635.3,204.0 634.6,204.8 633.9,203.1 633.2,204.7 632.5,204.4 631.8,205.7 631.1,207.5 630.4,206.8 629.7,211.9 629.0,218.4 628.3,219.5 627.6,220.8 626.9,216.9 626.2,211.6 625.5,204.8 624.8,196.5 624.1,195.0 623.4,194.4 622.7,194.6 622.0,194.5 621.3,194.3 620.6,194.3 619.9,194.6 619.2,194.9 618.5,195.0 617.8,195.0 617.1,194.9 616.4,194.7 615.7,194.8 615.0,194.6 614.3,194.9 613.6,194.6 612.9,194.5 612.2,194.5 611.5,194.5 610.8,194.5 610.1,194.6 609.4,194.3 608.7,194.3 608.0,194.4 607.3,194.2 606.6,194.2 605.9,194.3 605.2,194.3 604.5,194.2 603.8,194.2 603.1,194.2 602.4,194.1 601.7,194.1 601.0,194.0 600.3,194.1 599.6,193.9 598.9,194.1 598.2,193.9 597.5,193.9 596.8,193.9 596.1,194.0 595.4,193.9 594.7,193.9 594.0,193.9 593.3,193.9 592.6,193.9 591.9,193.9 591.2,193.9 590.5,193.9 589.8,193.9 589.1,193.9 588.4,193.9 587.7,193.8 587.0,193.9 586.3,193.8 585.6,193.8 584.9,193.9 584.2,193.8 583.5,193.9 582.8,193.8" fill="#fff" fill-opacity="0.24"/>
<polygon points="718.6,374.5 719.3,371.6 720.0,368.8 720.7,366.7 721.4,366.3 722.1,364.3 722.8,362.3 723.5,363.8 724.2,364.0 724.9,364.9 725.6,366.5 726.3,366.9 727.0,367.3 727.7,368.2 728.4,368.7 729.1,369.7 729.8,369.1 730.5,368.7 731.2,367.8 731.9,366.9 732.6,366.7 733.3,366.1 734.0,366.3 734.7,365.7 735.4,366.3 736.1,365.8 736.8,363.3 737.5,359.3 738.2,354.3 738.9,351.1 739.6,347.2 740.3,345.4 741.0,343.6 741.7,341.3 742.4,343.3 743.1,341.8 743.8,343.6 744.5,348.5 745.2,351.4 745.9,356.1 746.6,362.5 747.3,366.0 748.0,366.5 748.7,367.7 749.4,367.7 750.1,368.6 750.8,368.6 751.5,368.8 752.2,370.0 752.9,371.0 753.6,371.7 754.3,372.4 755.0,373.5 755.7,374.3 756.4,374.6 757.1,374.6 757.8,374.8 758.5,374.9 759.2,375.0 759.9,375.3 760.6,375.4 761.3,373.2 762.0,367.4 762.7,362.5 763.4,362.7 764.1,361.3 764.8,363.8 765.5,366.9 766.2,369.5 766.9,371.8 767.6,373.0 768.3,374.1 769.0,374.8 769.7,375.6 770.4,376.1 771.1,376.1 771.8,376.3 772.5,376.3 773.2,376.4 773.9,376.5 774.6,376.6 775.3,376.7 775.3,378.3 774.6,378.5 773.9,378.5 773.2,378.6 772.5,378.6 771.8,378.8 771.1,378.9 770.4,378.8 769.7,379.5 769.0,380.1 768.3,380.8 767.6,381.8 766.9,383.1 766.2,385.3 765.5,387.4 764.8,391.5 764.1,392.7 763.4,393.0 762.7,391.4 762.0,388.1 761.3,382.0 760.6,379.6 759.9,379.8 759.2,379.9 758.5,380.2 757.8,380.1 757.1,380.3 756.4,380.7 755.7,380.7 755.0,381.5 754.3,382.9 753.6,383.1 752.9,384.2 752.2,384.6 751.5,386.6 750.8,386.0 750.1,385.7 749.4,388.0 748.7,386.7 748.0,389.3 747.3,389.9 746.6,392.8 745.9,397.2 745.2,401.7 744.5,405.1 743.8,410.8 743.1,413.8 742.4,414.2 741.7,412.9 741.0,409.4 740.3,409.9 739.6,406.0 738.9,402.1 738.2,400.9 737.5,396.3 736.8,390.8 736.1,389.1 735.4,389.1 734.7,389.8 734.0,388.5 733.3,389.6 732.6,387.7 731.9,388.5 731.2,387.6 730.5,386.8 729.8,385.9 729.1,384.8 728.4,385.7 727.7,386.8 727.0,387.2 726.3,388.3 725.6,387.8 724.9,390.7 724.2,390.4 723.5,390.2 722.8,391.9 722.1,390.6 721.4,388.8 720.7,388.1 720.0,385.7 719.3,383.4 718.6,380.7" fill="#fff" fill-opacity="0.24"/>
<path d="M107.2 497.0 C107.5 496.6 108.1 494.3 109.0 494.7 C109.9 495.1 110.9 498.2 112.1 499.2 C113.3 500.2 114.3 498.6 115.7 500.3 C117.1 502.0 118.7 508.6 119.8 508.7 C120.9 508.8 121.0 503.8 121.6 501.0 C122.2 498.2 122.1 494.4 122.9 493.0 C123.7 491.6 124.5 492.8 126.0 493.0 C127.5 493.2 128.5 493.9 131.0 494.3 C133.5 494.7 137.8 495.5 140.0 495.2 C142.2 494.9 142.2 495.5 143.0 492.5 C143.8 489.5 144.2 483.4 144.5 478.5 C144.8 473.6 144.4 471.9 144.9 465.0 C145.4 458.1 146.5 448.1 147.5 440.0 C148.5 431.9 149.2 426.3 150.3 420.0 C151.4 413.7 153.1 410.0 153.8 405.0 C154.5 400.0 154.8 397.4 154.3 392.0 C153.8 386.6 152.3 380.8 151.0 375.0 C149.7 369.2 147.6 364.9 147.0 360.0 C146.4 355.1 147.2 352.1 147.8 348.0 C148.4 343.9 149.4 341.0 150.3 337.0 C151.2 333.0 151.7 331.3 153.0 326.0 C154.3 320.7 156.3 312.3 157.7 307.6 C159.1 302.9 159.8 301.7 161.0 300.0 C162.2 298.3 163.4 297.6 164.5 298.0 C165.6 298.4 166.1 300.6 167.0 302.0 C167.9 303.4 168.6 305.5 169.6 305.5 C170.6 305.5 171.1 305.1 172.5 302.0 C173.9 298.9 175.7 291.8 177.4 288.0 C179.1 284.2 180.5 283.0 182.0 281.0 C183.5 279.0 184.9 277.0 186.0 277.0 C187.1 277.0 187.4 278.8 188.0 281.0 C188.6 283.2 188.6 286.6 189.5 289.5 C190.4 292.4 191.5 294.6 193.0 297.0 C194.5 299.4 196.4 300.2 198.0 302.7 C199.6 305.2 200.6 307.0 202.0 311.0 C203.4 315.0 204.4 318.6 206.0 324.7 C207.6 330.8 209.5 338.8 211.0 345.0 C212.5 351.2 213.6 358.9 214.4 358.9 C215.2 358.9 215.0 352.4 215.5 345.0 C216.0 337.6 216.3 325.2 217.0 318.0 C217.7 310.8 218.5 308.7 219.5 305.0 C220.5 301.3 221.3 299.9 222.5 297.5 C223.7 295.1 225.4 292.7 226.0 291.7" stroke="#d4d2e0" stroke-width="1.45" stroke-opacity="0.9" stroke-linecap="round" stroke-linejoin="round" fill="none"/>
<path d="M261.5 278.8 C263.0 280.0 266.7 283.1 270.0 285.5 C273.3 287.9 276.0 290.5 279.6 292.2 C283.2 293.9 286.4 294.0 290.0 295.0 C293.6 296.0 296.7 296.6 299.4 298.0 C302.1 299.4 303.1 301.2 305.0 303.0 C306.9 304.8 308.5 307.3 310.0 307.8 C311.5 308.3 312.1 307.6 313.5 306.0 C314.9 304.4 316.3 301.0 318.0 299.0 C319.7 297.0 319.7 295.2 322.8 294.8 C325.9 294.4 330.5 296.0 335.0 296.5 C339.5 297.0 344.2 297.8 348.0 297.5 C351.8 297.2 353.1 296.2 356.0 295.0 C358.9 293.8 361.7 291.0 364.0 291.0 C366.3 291.0 367.2 292.5 369.0 295.0 C370.8 297.5 372.5 304.3 374.0 305.0 C375.5 305.7 376.2 301.5 377.5 299.0 C378.8 296.5 379.7 292.9 381.0 291.0 C382.3 289.1 383.1 288.1 384.5 288.5 C385.9 288.9 387.1 291.7 389.0 293.0 C390.9 294.3 393.8 295.2 394.8 295.7" stroke="#d4d2e0" stroke-width="1.45" stroke-opacity="0.9" stroke-linecap="round" stroke-linejoin="round" fill="none"/>
<path d="M429.5 345.5 C430.1 346.9 431.2 350.1 433.0 353.0 C434.8 355.9 437.1 358.8 439.4 361.5 C441.7 364.2 444.0 366.1 446.0 368.0 C448.0 369.9 449.0 370.9 450.4 372.0 C451.8 373.1 452.3 374.0 453.7 374.2 C455.1 374.4 456.5 373.8 458.0 373.0 C459.5 372.2 461.3 371.8 462.3 369.5 C463.3 367.2 463.2 365.9 463.6 360.0 C464.0 354.1 464.3 345.6 464.7 337.0 C465.1 328.4 465.5 319.0 466.0 312.0 C466.5 305.0 466.8 301.9 467.5 298.0 C468.2 294.1 469.1 292.3 470.0 290.5 C470.9 288.7 471.3 288.3 472.4 288.2 C473.5 288.1 473.6 287.9 476.0 290.0 C478.4 292.1 482.4 296.8 485.6 299.6 C488.8 302.4 491.2 303.9 494.0 305.5 C496.8 307.1 498.8 308.1 501.0 308.4 C503.2 308.7 504.0 308.7 506.0 307.0 C508.0 305.3 509.9 301.3 512.0 299.0 C514.1 296.7 515.7 294.7 517.5 294.2 C519.3 293.7 519.8 293.9 522.0 296.0 C524.2 298.1 527.5 302.7 530.0 306.0 C532.5 309.3 534.2 312.7 536.0 314.5 C537.8 316.3 538.2 316.3 540.0 316.0 C541.8 315.7 543.8 315.1 546.0 313.0 C548.2 310.9 549.8 307.1 552.0 304.5 C554.2 301.9 556.0 299.1 558.2 298.3 C560.4 297.5 561.8 299.2 564.0 300.0 C566.2 300.8 569.2 302.4 570.3 302.9" stroke="#d4d2e0" stroke-width="1.45" stroke-opacity="0.9" stroke-linecap="round" stroke-linejoin="round" fill="none"/>
<path d="M621.6 179.7 C623.5 181.0 628.2 184.4 632.0 187.0 C635.8 189.6 638.6 191.8 642.6 194.0 C646.6 196.2 650.0 197.7 654.0 199.0 C658.0 200.3 662.1 201.3 664.6 201.3 C667.1 201.3 666.3 200.8 668.0 199.0 C669.7 197.2 671.8 193.8 674.0 191.5 C676.2 189.2 677.3 187.7 680.0 186.3 C682.7 185.0 686.3 184.1 688.8 184.0 C691.3 183.9 692.2 185.1 694.0 186.0 C695.8 186.9 696.9 189.1 698.7 189.2 C700.5 189.3 701.8 187.4 704.0 186.5 C706.2 185.6 708.8 184.5 710.8 184.1 C712.8 183.7 713.6 183.8 715.0 184.0 C716.4 184.2 717.9 185.0 718.5 185.2" stroke="#d4d2e0" stroke-width="1.45" stroke-opacity="0.9" stroke-linecap="round" stroke-linejoin="round" fill="none"/>
<path d="M719.0 384.0 C719.5 384.6 720.7 386.8 722.0 387.5 C723.3 388.2 724.4 388.3 726.0 388.0 C727.6 387.7 729.0 386.6 731.0 386.0 C733.0 385.4 735.0 385.0 737.0 384.5 C739.0 384.0 740.0 383.9 742.0 383.0 C744.0 382.1 746.0 380.9 748.0 379.5 C750.0 378.1 751.6 377.4 753.0 375.5 C754.4 373.6 754.9 371.3 756.0 369.0 C757.1 366.7 758.2 364.0 759.0 362.5 C759.8 361.0 760.2 360.9 760.5 360.5" stroke="#d4d2e0" stroke-width="1.45" stroke-opacity="0.9" stroke-linecap="round" stroke-linejoin="round" fill="none"/>
<rect x="261.6" y="278.9" width="134.8" height="31.9" stroke="#fff" stroke-width="1.4"/>
<rect x="260.6" y="267.1" width="9" height="9" rx="2" stroke="#bbbac4" stroke-width="1.1" fill="#242233"/>
<rect x="260.6" y="313.4" width="9" height="9" rx="2" stroke="#bbbac4" stroke-width="1.1" fill="#242233"/>
<rect x="323.6" y="313.4" width="9" height="9" rx="2" stroke="#bbbac4" stroke-width="1.1" fill="#242233"/>
<rect x="386.3" y="313.4" width="9" height="9" rx="2" stroke="#bbbac4" stroke-width="1.1" fill="#242233"/>
<rect x="320.2" y="266.6" width="10.6" height="10" rx="2" fill="#cfced5" stroke="#0d0c16" stroke-width="0.7"/>
<rect x="293.6" y="242.6" width="63.8" height="21.6" rx="4.5" fill="#fff" stroke="#0d0c16" stroke-width="0.9"/>
<path d="M759.3 120.4 L759.9 118.8 L760.5 120 L761 116.4 L761.8 115.8 L762.4 119.4 L762.9 116.2 L763.8 115.9 L764.3 118.8 L764.9 116.6 L765.6 117.2 L766.1 119.2 L767.5 120.3 L766.1 121.4 L765.7 123.6 L764.9 124 L764.3 121.8 L763.8 124.5 L762.9 124.3 L762.4 121.6 L761.8 124.4 L761 123.8 L760.5 121 L759.9 122.2 Z" fill="#9d9ba9"/><circle cx="769.2" cy="118.1" r="1.15" fill="#9d9ba9"/><circle cx="769.2" cy="122.9" r="1.15" fill="#9d9ba9"/>
<g stroke="#9d9ba9" stroke-width="1.5" stroke-linecap="round" stroke-linejoin="round"><path d="M778.7 119.5 L781.8 116.4 L784.9 119.5 M778.7 121.6 L781.8 124.7 L784.9 121.6 M781.8 117.2 V124"/></g>
<defs><linearGradient id="vs" x1="0" x2="1" y1="0" y2="0"><stop offset="0" stop-color="#5d5b6b"/><stop offset="0.5" stop-color="#908e9c"/><stop offset="1" stop-color="#5d5b6b"/></linearGradient></defs>
<rect x="780" y="129.8" width="4" height="63.5" rx="2" fill="url(#vs)"/>
<circle cx="782" cy="161.7" r="4.1" fill="#fff"/>
<rect x="778.6" y="384.8" width="6.7" height="98.6" rx="3.3" fill="#2a2740"/>
<rect x="780.8" y="406.7" width="2.3" height="70" rx="1.1" fill="#7b61ff"/>
<rect x="490.6" y="580.2" width="135" height="7" rx="3.5" fill="#33304a"/>
<rect x="719.6" y="581.6" width="63.9" height="4.2" rx="2.1" fill="#0e0d17"/><rect x="720.2" y="582.2" width="62.7" height="3" rx="1.5" fill="#9694a0"/>
<circle cx="751.4" cy="583.7" r="4.2" fill="#fff"/>
<g stroke="#9a98a6" stroke-width="1.4" stroke-linecap="round" stroke-linejoin="round"><path d="M708.8 581.3 L706.6 583.5 L708.8 585.7 M712 581.3 L714.2 583.5 L712 585.7 M707 583.5 H713.8"/></g>
<rect x="320.8" y="533.8" width="207.5" height="26.2" rx="6" fill="#181625" stroke="#2f2c45" stroke-width="1.1"/>
<rect x="323.3" y="536.1" width="21.3" height="21.3" rx="4" fill="#7b61ff"/>
<path d="M329 541.5 L339.3 545.7 L335.3 547.6 L338.8 551.3 L337.4 552.6 L334 548.9 L332.6 552.4 Z" stroke="#fff" stroke-width="1.4" stroke-linejoin="round" fill="none"/>
<path d="M347.3 545.6 L349.8 548.1 L352.3 545.6" stroke="#8f8d9b" stroke-width="1.2" stroke-linecap="round" stroke-linejoin="round"/>
<path d="M365.9 542.3 L364.8 546.5 Q364.3 549 366.7 548.9 Q368.9 548.8 369.6 546.7 L371 541.9 M366 549.2 L364.8 551.8" stroke="#9d9ba9" stroke-width="1.5" stroke-linecap="round" stroke-linejoin="round" fill="none"/><circle cx="364.3" cy="552.4" r="1.1" fill="#9d9ba9"/>
<g transform="translate(391.3 547.1) rotate(-42)"><path d="M-7.4 0 L-4.2 -2.2 H5.3 Q7.5 -2.2 7.5 0 Q7.5 2.2 5.3 2.2 H-4.2 Z M2.2 -0.1 H5" stroke="#9d9ba9" stroke-width="1.5" stroke-linecap="round" stroke-linejoin="round" fill="none"/></g>
<g transform="translate(414.4 547.3) rotate(-43)"><path d="M-7.4 0 L-1.6 -3.7 L2.6 -3.7 L3.6 -2.5 V2.5 L2.6 3.7 L-1.6 3.7 Z M3.6 -2.6 H6.6 V2.6 H3.6 M-7 0 H-1.8" stroke="#9d9ba9" stroke-width="1.35" stroke-linecap="round" stroke-linejoin="round" fill="none"/><circle cx="-0.5" cy="0" r="1.2" stroke="#9d9ba9" stroke-width="1.2" stroke-linecap="round" stroke-linejoin="round" fill="none"/></g>
<circle cx="433.8" cy="543" r="1.9" stroke="#9d9ba9" stroke-width="1.5" stroke-linecap="round" stroke-linejoin="round" fill="none"/><circle cx="433.8" cy="550.3" r="1.9" stroke="#9d9ba9" stroke-width="1.5" stroke-linecap="round" stroke-linejoin="round" fill="none"/><path d="M435.3 544.3 L442.6 551.6 M435.3 549 L442.6 541.9" stroke="#9d9ba9" stroke-width="1.5" stroke-linecap="round" stroke-linejoin="round" fill="none"/>
<path d="M455.8 547 L456.6 545 L457.3 546.6 L458 542.2 L459 541.5 L459.7 545.4 L460.3 541.8 L461.3 541.4 L461.9 544.8 L462.6 542 L463.6 542.6 L464.3 545 L466 545.7 L467.3 547 L466 548.3 L464.3 549 L463.8 551.4 L462.8 551.8 L462 549.2 L461.4 551.8 L460.3 551.6 L459.7 548.6 L459 551.6 L458 551 L457.3 547.8 L456.6 549.2 Z" fill="#9d9ba9"/>
<rect x="474.5" y="536.4" width="1.2" height="20.4" fill="#2f2c45"/>
<circle cx="487.2" cy="546" r="4.1" stroke="#9d9ba9" stroke-width="1.5" stroke-linecap="round" stroke-linejoin="round" fill="none"/><path d="M490.3 549.1 L493.6 552.3" stroke="#9d9ba9" stroke-width="1.5" stroke-linecap="round" stroke-linejoin="round" fill="none"/>
<path d="M500.7 545.4 L503.4 548 L506.1 545.4" stroke="#8f8d9b" stroke-width="1.2" stroke-linecap="round" stroke-linejoin="round"/>
<rect x="511.3" y="536.4" width="1.2" height="20.4" fill="#2f2c45"/>
<g fill="#b3b1be"><rect x="517.2" y="542.0" width="2.5" height="2.5" rx="0.5"/><rect x="517.2" y="545.5" width="2.5" height="2.5" rx="0.5"/><rect x="517.2" y="549.0" width="2.5" height="2.5" rx="0.5"/><rect x="520.9" y="542.0" width="2.5" height="2.5" rx="0.5"/><rect x="520.9" y="545.5" width="2.5" height="2.5" rx="0.5"/><rect x="520.9" y="549.0" width="2.5" height="2.5" rx="0.5"/></g>
<rect x="50.1" y="79.5" width="10.7" height="6.3" rx="1.5" stroke="#9a98a6" stroke-width="1.45" stroke-linecap="round" stroke-linejoin="round" fill="none"/><path d="M52.3 79.3 V77.7 Q52.3 74.4 55.6 74.4 Q58.3 74.4 58.9 76.8" stroke="#9a98a6" stroke-width="1.45" stroke-linecap="round" stroke-linejoin="round" fill="none"/><path d="M53.2 82.7 H57.4" stroke="#9a98a6" stroke-width="1.45" stroke-linecap="round" stroke-linejoin="round" fill="none"/>
<path d="M50.5 100.2 V99.6 Q50.5 96.6 53.5 96.6 H60.2 M57.9 94.3 L60.4 96.6 L57.9 98.9 M60.6 101.2 V101.8 Q60.6 104.8 57.6 104.8 H50.9 M53.2 102.5 L50.7 104.8 L53.2 107.1" stroke="#9a98a6" stroke-width="1.45" stroke-linecap="round" stroke-linejoin="round" fill="none"/>
</svg>
<div class="t" style="left:301.3px;top:248.5px;font-size:10.6px;color:#26242f">E4 <span style="font-weight:400;color:#8a8893;letter-spacing:0.55px;margin-left:1px">(-7 ct)</span></div><div class="panel" style="left:39px;top:597.2px;width:749.3px;height:46.3px;border-radius:7px"></div>
<div class="ln" style="left:72px;top:597px;width:1.3px;height:46.5px"></div>
<div class="ln" style="left:39px;top:619.5px;width:33px;height:1.2px"></div>
<div style="position:absolute;left:39px;top:597.2px;width:749.3px;height:46.3px;overflow:hidden;border-radius:7px"><div style="position:absolute;left:41.6px;top:2px;width:730px;height:43px;border:1.3px solid #3b3850;border-radius:4.5px"></div></div>
<div style="position:absolute;left:109.4px;top:598.2px;width:365.2px;height:44.3px;border:1.9px solid #7560f2;border-radius:4.5px;background:#2b2551"></div>
<svg width="1000" height="681" viewBox="0 0 1000 681">
<defs><clipPath id="cin"><rect x="110" y="598" width="364.2" height="45"/></clipPath><clipPath id="cl"><rect x="80" y="598" width="30" height="45"/></clipPath><clipPath id="cr"><rect x="474.2" y="598" width="314.8" height="45"/></clipPath></defs>
<polygon points="89.3,620.2 89.9,620.1 90.5,620.1 91.1,620.2 91.7,620.1 92.3,620.1 92.9,620.2 93.5,620.1 94.1,620.1 94.7,620.1 95.3,620.2 95.9,620.2 96.5,620.2 97.1,620.1 97.7,620.1 98.3,620.2 98.9,620.1 99.5,620.1 100.1,620.1 100.7,620.1 101.3,620.2 101.9,620.2 102.5,620.1 103.1,620.2 103.7,620.2 104.3,620.2 104.9,620.2 105.5,620.2 106.1,620.2 106.7,620.1 107.3,620.1 107.9,620.1 108.5,620.2 109.1,620.1 109.7,620.2 110.3,620.2 110.9,620.1 111.5,620.1 112.1,619.9 112.7,618.3 113.3,617.1 113.9,616.4 114.5,615.7 115.1,616.0 115.7,615.8 116.3,616.2 116.9,616.1 117.5,616.5 118.1,616.4 118.7,616.9 119.3,617.6 119.9,617.9 120.5,618.0 121.1,618.5 121.7,618.8 122.3,619.3 122.9,619.7 123.5,620.0 124.1,620.0 124.7,620.0 125.3,619.9 125.9,619.3 126.5,617.4 127.1,615.9 127.7,616.1 128.3,615.9 128.9,615.9 129.5,615.7 130.1,615.1 130.7,615.4 131.3,615.2 131.9,615.5 132.5,615.9 133.1,615.9 133.7,616.5 134.3,616.2 134.9,616.2 135.5,615.8 136.1,615.7 136.7,615.4 137.3,614.8 137.9,615.0 138.5,615.3 139.1,615.0 139.7,615.4 140.3,615.4 140.9,615.1 141.5,615.3 142.1,615.8 142.7,616.4 143.3,617.8 143.9,618.8 144.5,619.6 145.1,619.7 145.7,619.7 146.3,619.8 146.9,619.9 147.5,619.9 148.1,619.9 148.7,620.0 149.3,619.5 149.9,618.5 150.5,617.3 151.1,616.6 151.7,616.4 152.3,616.0 152.9,616.2 153.5,616.0 154.1,615.4 154.7,615.3 155.3,615.5 155.9,615.3 156.5,614.9 157.1,614.6 157.7,615.0 158.3,614.4 158.9,614.3 159.5,614.4 160.1,614.5 160.7,614.6 161.3,614.6 161.9,613.8 162.5,614.2 163.1,614.0 163.7,614.6 164.3,614.4 164.9,614.8 165.5,615.3 166.1,615.6 166.7,615.5 167.3,616.1 167.9,616.2 168.5,616.3 169.1,616.5 169.7,616.9 170.3,617.3 170.9,617.3 171.5,617.9 172.1,618.2 172.7,618.4 173.3,618.7 173.9,619.0 174.5,619.2 175.1,619.4 175.7,619.6 176.3,619.9 176.9,620.1 177.5,620.1 178.1,620.1 178.7,620.1 179.3,620.1 179.9,620.1 180.5,620.1 181.1,620.1 181.7,620.1 182.3,620.1 182.9,620.1 183.5,620.1 184.1,620.1 184.7,620.1 185.3,620.1 185.9,620.1 186.5,620.1 187.1,620.1 187.7,620.2 188.3,620.1 188.9,620.1 189.5,620.1 190.1,620.1 190.7,620.1 191.3,620.1 191.9,620.1 192.5,620.1 193.1,620.1 193.7,620.1 194.3,620.1 194.9,620.2 195.5,620.1 196.1,620.1 196.7,619.9 197.3,619.3 197.9,618.7 198.5,618.5 199.1,618.5 199.7,618.5 200.3,618.3 200.9,618.2 201.5,618.4 202.1,618.6 202.7,618.8 203.3,618.9 203.9,619.2 204.5,618.8 205.1,618.2 205.7,617.9 206.3,617.1 206.9,616.9 207.5,616.4 208.1,616.3 208.7,616.2 209.3,615.8 209.9,615.7 210.5,615.5 211.1,615.1 211.7,615.3 212.3,615.4 212.9,615.3 213.5,615.1 214.1,615.5 214.7,615.5 215.3,615.1 215.9,615.3 216.5,615.5 217.1,615.3 217.7,615.7 218.3,615.4 218.9,615.6 219.5,615.3 220.1,614.9 220.7,614.6 221.3,614.5 221.9,614.7 222.5,614.6 223.1,614.8 223.7,614.9 224.3,614.7 224.9,614.5 225.5,614.5 226.1,614.6 226.7,614.4 227.3,614.9 227.9,615.0 228.5,614.9 229.1,615.2 229.7,615.3 230.3,615.3 230.9,615.3 231.5,615.5 232.1,615.9 232.7,617.1 233.3,618.5 233.9,619.0 234.5,618.9 235.1,618.8 235.7,617.5 236.3,616.1 236.9,613.7 237.5,613.4 238.1,613.5 238.7,612.9 239.3,613.4 239.9,613.2 240.5,613.0 241.1,613.6 241.7,613.1 242.3,613.8 242.9,614.0 243.5,614.3 244.1,613.9 244.7,613.6 245.3,613.0 245.9,612.5 246.5,612.7 247.1,612.9 247.7,613.6 248.3,614.4 248.9,614.6 249.5,614.6 250.1,614.4 250.7,613.8 251.3,613.3 251.9,613.4 252.5,613.7 253.1,614.1 253.7,614.4 254.3,615.0 254.9,615.4 255.5,616.8 256.1,618.6 256.7,619.6 257.3,619.6 257.9,619.6 258.5,619.5 259.1,619.6 259.7,618.5 260.3,614.8 260.9,614.3 261.5,615.4 262.1,616.5 262.7,615.3 263.3,614.0 263.9,613.0 264.5,613.9 265.1,615.6 265.7,616.9 266.3,617.9 266.9,618.2 267.5,618.7 268.1,619.1 268.7,619.1 269.3,619.2 269.9,619.0 270.5,619.0 271.1,619.0 271.7,619.1 272.3,617.5 272.9,616.0 273.5,615.2 274.1,615.2 274.7,615.4 275.3,615.4 275.9,615.1 276.5,614.9 277.1,614.7 277.7,615.1 278.3,615.7 278.9,615.5 279.5,616.2 280.1,616.0 280.7,616.6 281.3,616.5 281.9,616.0 282.5,616.1 283.1,615.8 283.7,615.2 284.3,615.0 284.9,615.0 285.5,615.2 286.1,615.2 286.7,615.6 287.3,615.4 287.9,616.0 288.5,616.0 289.1,615.9 289.7,616.1 290.3,615.9 290.9,616.0 291.5,616.1 292.1,616.0 292.7,616.3 293.3,616.5 293.9,616.6 294.5,616.5 295.1,616.5 295.7,616.9 296.3,616.8 296.9,616.8 297.5,617.1 298.1,617.2 298.7,617.5 299.3,617.6 299.9,617.8 300.5,618.0 301.1,618.3 301.7,618.3 302.3,618.6 302.9,618.8 303.5,618.9 304.1,619.2 304.7,619.5 305.3,619.7 305.9,620.0 306.5,620.0 307.1,619.9 307.7,619.8 308.3,619.8 308.9,619.5 309.5,618.8 310.1,618.2 310.7,617.4 311.3,617.0 311.9,617.1 312.5,617.5 313.1,617.8 313.7,618.0 314.3,617.8 314.9,617.4 315.5,617.4 316.1,616.9 316.7,616.9 317.3,616.6 317.9,616.3 318.5,616.0 319.1,616.1 319.7,616.1 320.3,615.9 320.9,616.2 321.5,615.8 322.1,616.1 322.7,615.9 323.3,616.0 323.9,616.0 324.5,615.8 325.1,615.8 325.7,615.9 326.3,615.9 326.9,615.8 327.5,616.1 328.1,616.1 328.7,615.8 329.3,615.9 329.9,615.9 330.5,615.8 331.1,616.0 331.7,615.9 332.3,616.3 332.9,616.1 333.5,616.1 334.1,616.2 334.7,616.5 335.3,616.6 335.9,616.4 336.5,617.3 337.1,617.8 337.7,618.5 338.3,619.4 338.9,619.6 339.5,619.5 340.1,619.5 340.7,619.5 341.3,618.9 341.9,618.2 342.5,617.2 343.1,616.8 343.7,616.5 344.3,616.3 344.9,616.6 345.5,616.4 346.1,616.0 346.7,615.8 347.3,615.8 347.9,616.4 348.5,616.4 349.1,616.4 349.7,616.7 350.3,616.7 350.9,617.1 351.5,617.0 352.1,616.9 352.7,616.7 353.3,616.3 353.9,616.1 354.5,615.9 355.1,616.0 355.7,616.1 356.3,616.1 356.9,615.8 357.5,615.8 358.1,615.9 358.7,616.5 359.3,616.5 359.9,616.2 360.5,616.7 361.1,616.9 361.7,617.4 362.3,617.7 362.9,618.0 363.5,618.3 364.1,618.7 364.7,619.2 365.3,619.6 365.9,620.0 366.5,620.1 367.1,620.1 367.7,620.1 368.3,620.1 368.9,620.1 369.5,620.1 370.1,620.1 370.7,620.1 371.3,620.1 371.9,620.1 372.5,620.1 373.1,620.1 373.7,620.1 374.3,620.1 374.9,620.1 375.5,620.1 376.1,620.1 376.7,620.1 377.3,620.1 377.9,620.1 378.5,620.1 379.1,620.1 379.7,620.1 380.3,620.1 380.9,620.1 381.5,620.1 382.1,620.1 382.7,620.1 383.3,620.1 383.9,620.1 384.5,620.1 385.1,620.2 385.7,620.1 386.3,620.1 386.9,620.2 387.5,620.1 388.1,620.1 388.7,620.1 389.3,620.2 389.9,620.1 390.5,620.1 391.1,620.2 391.7,620.1 392.3,619.7 392.9,619.1 393.5,618.6 394.1,614.4 394.7,611.3 395.3,610.0 395.9,610.9 396.5,612.1 397.1,613.9 397.7,614.3 398.3,615.1 398.9,616.0 399.5,616.2 400.1,616.7 400.7,617.0 401.3,617.3 401.9,617.7 402.5,617.6 403.1,617.3 403.7,617.3 404.3,617.3 404.9,616.9 405.5,616.4 406.1,615.5 406.7,615.0 407.3,614.6 407.9,615.0 408.5,614.6 409.1,614.4 409.7,614.9 410.3,614.2 410.9,614.7 411.5,614.5 412.1,614.8 412.7,614.7 413.3,614.7 413.9,615.2 414.5,614.7 415.1,615.4 415.7,616.7 416.3,618.1 416.9,618.6 417.5,618.5 418.1,618.3 418.7,618.2 419.3,617.3 419.9,615.1 420.5,614.0 421.1,615.2 421.7,616.2 422.3,617.0 422.9,617.3 423.5,617.5 424.1,618.0 424.7,618.3 425.3,618.5 425.9,618.7 426.5,618.4 427.1,618.3 427.7,618.5 428.3,618.2 428.9,618.2 429.5,618.0 430.1,617.6 430.7,617.7 431.3,616.6 431.9,615.3 432.5,614.2 433.1,614.6 433.7,614.5 434.3,614.8 434.9,615.2 435.5,615.7 436.1,615.5 436.7,615.3 437.3,615.2 437.9,615.0 438.5,614.4 439.1,614.5 439.7,614.4 440.3,614.4 440.9,614.7 441.5,614.9 442.1,614.8 442.7,615.1 443.3,615.1 443.9,615.7 444.5,615.9 445.1,616.4 445.7,617.0 446.3,617.6 446.9,617.1 447.5,616.0 448.1,615.4 448.7,615.4 449.3,615.5 449.9,615.5 450.5,615.1 451.1,615.1 451.7,615.0 452.3,615.0 452.9,615.1 453.5,615.6 454.1,615.6 454.7,614.2 455.3,613.3 455.9,612.4 456.5,611.8 457.1,610.2 457.7,608.7 458.3,607.8 458.9,608.8 459.5,611.1 460.1,612.2 460.7,614.1 461.3,615.7 461.9,616.9 462.5,618.6 463.1,618.3 463.7,618.0 464.3,617.7 464.9,617.5 465.5,617.2 466.1,616.7 466.7,616.4 467.3,616.7 467.9,616.9 468.5,616.9 469.1,617.2 469.7,617.4 470.3,617.9 470.9,618.3 471.5,618.2 472.1,614.9 472.7,617.2 473.3,618.8 473.9,619.1 474.5,619.6 475.1,619.6 475.7,619.6 476.3,619.5 476.9,619.6 477.5,619.6 478.1,618.8 478.7,617.4 479.3,617.1 479.9,617.1 480.5,616.7 481.1,616.7 481.7,616.5 482.3,616.6 482.9,616.3 483.5,616.8 484.1,617.0 484.7,617.0 485.3,617.5 485.9,617.6 486.5,618.0 487.1,618.7 487.7,619.3 488.3,619.6 488.9,619.5 489.5,619.4 490.1,619.3 490.7,618.7 491.3,617.9 491.9,617.3 492.5,617.0 493.1,616.8 493.7,616.8 494.3,616.9 494.9,616.6 495.5,616.8 496.1,616.7 496.7,616.9 497.3,616.8 497.9,617.1 498.5,617.5 499.1,617.8 499.7,618.4 500.3,619.1 500.9,619.7 501.5,619.8 502.1,619.7 502.7,619.6 503.3,618.4 503.9,616.2 504.5,613.7 505.1,611.6 505.7,609.7 506.3,607.4 506.9,607.0 507.5,610.6 508.1,613.3 508.7,615.3 509.3,617.2 509.9,618.4 510.5,619.5 511.1,619.6 511.7,619.6 512.3,619.7 512.9,619.6 513.5,619.6 514.1,619.6 514.7,619.3 515.3,618.9 515.9,618.6 516.5,618.5 517.1,618.0 517.7,617.9 518.3,617.4 518.9,617.8 519.5,618.4 520.1,618.9 520.7,618.8 521.3,618.9 521.9,618.9 522.5,619.1 523.1,619.1 523.7,619.1 524.3,619.2 524.9,619.3 525.5,619.3 526.1,619.3 526.7,619.3 527.3,618.8 527.9,617.8 528.5,616.4 529.1,615.3 529.7,613.9 530.3,613.3 530.9,613.1 531.5,613.0 532.1,612.8 532.7,612.9 533.3,612.9 533.9,612.6 534.5,612.7 535.1,613.3 535.7,613.5 536.3,614.0 536.9,613.8 537.5,613.8 538.1,614.5 538.7,614.4 539.3,614.2 539.9,613.8 540.5,613.7 541.1,612.9 541.7,613.5 542.3,613.2 542.9,613.5 543.5,613.2 544.1,613.2 544.7,613.8 545.3,614.0 545.9,613.8 546.5,613.6 547.1,613.2 547.7,613.9 548.3,613.7 548.9,613.5 549.5,613.8 550.1,614.2 550.7,614.3 551.3,614.9 551.9,616.3 552.5,617.8 553.1,619.1 553.7,619.2 554.3,619.2 554.9,619.4 555.5,619.5 556.1,619.6 556.7,619.8 557.3,619.6 557.9,619.1 558.5,618.8 559.1,618.6 559.7,618.3 560.3,618.0 560.9,617.9 561.5,617.8 562.1,617.7 562.7,617.1 563.3,617.1 563.9,617.2 564.5,617.1 565.1,617.1 565.7,617.2 566.3,616.9 566.9,617.0 567.5,617.1 568.1,617.2 568.7,617.2 569.3,617.4 569.9,617.5 570.5,617.7 571.1,617.9 571.7,618.2 572.3,618.4 572.9,618.6 573.5,618.9 574.1,619.0 574.7,619.3 575.3,619.5 575.9,619.7 576.5,619.8 577.1,619.8 577.7,619.9 578.3,619.8 578.9,619.9 579.5,619.8 580.1,619.9 580.7,619.9 581.3,619.9 581.9,619.9 582.5,619.9 583.1,620.0 583.7,620.0 584.3,620.0 584.9,620.0 585.5,620.0 586.1,619.3 586.7,618.7 587.3,617.8 587.9,617.1 588.5,616.0 589.1,615.6 589.7,614.3 590.3,614.0 590.9,613.2 591.5,612.6 592.1,612.4 592.7,611.1 593.3,611.1 593.9,611.1 594.5,611.8 595.1,612.1 595.7,612.4 596.3,612.1 596.9,612.0 597.5,611.1 598.1,611.3 598.7,610.5 599.3,610.3 599.9,610.1 600.5,610.6 601.1,611.2 601.7,611.6 602.3,609.6 602.9,607.5 603.5,608.5 604.1,610.1 604.7,611.5 605.3,611.7 605.9,610.2 606.5,610.0 607.1,610.6 607.7,610.8 608.3,611.8 608.9,612.4 609.5,613.0 610.1,613.8 610.7,613.8 611.3,613.9 611.9,613.7 612.5,614.1 613.1,614.2 613.7,613.9 614.3,614.1 614.9,613.4 615.5,613.5 616.1,613.2 616.7,613.3 617.3,613.1 617.9,614.3 618.5,614.9 619.1,615.5 619.7,616.0 620.3,617.4 620.9,619.0 621.5,619.2 622.1,619.1 622.7,619.2 623.3,619.3 623.9,619.2 624.5,618.7 625.1,618.1 625.7,617.4 626.3,617.1 626.9,616.6 627.5,616.7 628.1,616.6 628.7,616.4 629.3,616.2 629.9,616.1 630.5,616.2 631.1,616.1 631.7,616.1 632.3,616.4 632.9,616.2 633.5,616.1 634.1,616.0 634.7,616.1 635.3,616.3 635.9,616.3 636.5,616.8 637.1,616.8 637.7,617.0 638.3,617.0 638.9,617.4 639.5,617.5 640.1,617.7 640.7,618.4 641.3,619.2 641.9,619.6 642.5,619.6 643.1,619.6 643.7,619.6 644.3,619.0 644.9,618.3 645.5,617.6 646.1,617.5 646.7,617.1 647.3,616.8 647.9,616.8 648.5,616.9 649.1,617.0 649.7,617.5 650.3,617.4 650.9,617.7 651.5,618.4 652.1,619.1 652.7,619.7 653.3,619.7 653.9,619.6 654.5,619.6 655.1,619.2 655.7,618.9 656.3,618.6 656.9,618.4 657.5,617.9 658.1,618.0 658.7,617.6 659.3,617.5 659.9,617.4 660.5,617.2 661.1,617.2 661.7,616.7 662.3,616.6 662.9,616.6 663.5,616.7 664.1,616.8 664.7,616.5 665.3,616.7 665.9,616.3 666.5,616.6 667.1,616.4 667.7,616.3 668.3,616.6 668.9,616.5 669.5,616.9 670.1,617.0 670.7,617.0 671.3,616.7 671.9,616.9 672.5,617.1 673.1,617.3 673.7,617.3 674.3,617.4 674.9,617.7 675.5,617.9 676.1,618.0 676.7,618.4 677.3,618.5 677.9,618.7 678.5,618.9 679.1,619.1 679.7,619.3 680.3,619.6 680.9,619.8 681.5,620.1 682.1,620.1 682.7,620.1 683.3,620.1 683.9,620.1 684.5,620.1 685.1,620.1 685.7,620.1 686.3,620.1 686.9,620.1 687.5,620.1 688.1,620.1 688.7,620.1 689.3,620.1 689.9,620.1 690.5,620.1 691.1,620.1 691.7,620.1 692.3,620.1 692.9,620.1 693.5,620.1 694.1,620.1 694.7,620.1 695.3,620.1 695.9,620.1 696.5,619.4 697.1,618.3 697.7,617.4 698.3,616.4 698.9,614.8 699.5,614.4 700.1,615.1 700.7,615.8 701.3,616.3 701.9,617.0 702.5,617.4 703.1,618.1 703.7,618.6 704.3,619.1 704.9,619.5 705.5,620.0 706.1,620.1 706.7,620.0 707.3,620.0 707.9,620.0 708.5,620.0 709.1,620.0 709.7,620.0 710.3,619.9 710.9,618.8 711.5,617.5 712.1,616.4 712.7,615.7 713.3,615.3 713.9,614.5 714.5,614.9 715.1,614.6 715.7,614.9 716.3,614.8 716.9,615.4 717.5,615.1 718.1,615.6 718.7,615.2 719.3,614.8 719.9,615.3 720.5,615.0 721.1,614.8 721.7,614.6 722.3,614.8 722.9,614.2 723.5,614.4 724.1,614.8 724.7,614.9 725.3,614.8 725.9,615.3 726.5,615.6 727.1,615.5 727.7,616.2 728.3,616.5 728.9,617.8 729.5,619.5 730.1,619.8 730.7,619.8 731.3,619.8 731.9,619.8 732.5,619.8 733.1,619.8 733.7,619.8 734.3,619.8 734.9,618.5 735.5,617.1 736.1,615.3 736.7,614.6 737.3,614.5 737.9,613.6 738.5,613.8 739.1,613.1 739.7,613.7 740.3,613.6 740.9,613.0 741.5,613.2 742.1,612.6 742.7,612.6 743.3,612.7 743.9,613.2 744.5,612.7 745.1,612.4 745.7,612.9 746.3,613.3 746.9,613.3 747.5,613.3 748.1,613.1 748.7,613.7 749.3,613.9 749.9,614.0 750.5,613.9 751.1,614.1 751.7,614.7 752.3,614.7 752.9,614.9 753.5,615.3 754.1,615.8 754.7,616.3 755.3,616.5 755.9,617.2 756.5,617.8 757.1,618.3 757.7,619.2 758.3,619.8 758.9,620.0 759.5,620.0 760.1,620.0 760.7,620.0 761.3,620.0 761.9,620.0 762.5,620.0 763.1,620.0 763.7,620.1 764.3,620.1 764.9,620.0 765.5,620.1 766.1,620.1 766.7,620.1 767.3,620.1 767.9,620.0 768.5,620.0 769.1,620.1 769.7,620.1 770.3,620.1 770.9,620.1 771.5,620.1 772.1,620.1 772.7,620.1 773.3,620.1 773.9,620.1 774.5,620.1 775.1,620.1 775.7,620.1 776.3,620.1 776.9,620.1 777.5,620.1 778.1,620.1 778.7,620.1 779.3,620.1 779.9,620.2 780.5,620.1 781.1,620.0 781.7,619.7 782.3,619.5 782.9,619.1 783.5,618.8 784.1,618.5 784.7,618.2 785.3,618.1 785.9,617.7 786.5,617.6 787.1,617.1 787.7,616.9 788.3,616.9 788.3,624.4 787.7,624.4 787.1,624.1 786.5,623.8 785.9,623.3 785.3,623.0 784.7,622.8 784.1,622.7 783.5,622.4 782.9,622.0 782.3,621.7 781.7,621.5 781.1,621.1 780.5,621.1 779.9,621.0 779.3,621.1 778.7,621.1 778.1,621.1 777.5,621.1 776.9,621.1 776.3,621.0 775.7,621.1 775.1,621.1 774.5,621.1 773.9,621.1 773.3,621.1 772.7,621.1 772.1,621.1 771.5,621.1 770.9,621.1 770.3,621.1 769.7,621.1 769.1,621.1 768.5,621.2 767.9,621.1 767.3,621.1 766.7,621.1 766.1,621.1 765.5,621.2 764.9,621.1 764.3,621.1 763.7,621.2 763.1,621.2 762.5,621.1 761.9,621.2 761.3,621.2 760.7,621.1 760.1,621.2 759.5,621.2 758.9,621.2 758.3,621.4 757.7,622.0 757.1,622.9 756.5,623.2 755.9,623.8 755.3,625.0 754.7,625.1 754.1,625.5 753.5,625.7 752.9,626.1 752.3,626.5 751.7,626.3 751.1,627.1 750.5,627.8 749.9,627.1 749.3,627.1 748.7,628.0 748.1,628.2 747.5,627.3 746.9,627.8 746.3,628.1 745.7,627.8 745.1,628.6 744.5,628.8 743.9,628.4 743.3,628.6 742.7,629.1 742.1,628.5 741.5,627.8 740.9,628.7 740.3,627.5 739.7,627.8 739.1,627.8 738.5,627.2 737.9,627.3 737.3,626.7 736.7,626.3 736.1,625.7 735.5,624.0 734.9,622.7 734.3,621.4 733.7,621.4 733.1,621.4 732.5,621.5 731.9,621.5 731.3,621.3 730.7,621.4 730.1,621.3 729.5,621.8 728.9,623.3 728.3,624.5 727.7,624.6 727.1,625.4 726.5,625.4 725.9,625.8 725.3,626.8 724.7,626.5 724.1,626.2 723.5,626.7 722.9,626.6 722.3,626.8 721.7,626.5 721.1,626.7 720.5,626.4 719.9,626.3 719.3,626.0 718.7,625.8 718.1,625.5 717.5,625.7 716.9,626.1 716.3,626.2 715.7,626.6 715.1,626.6 714.5,625.9 713.9,626.6 713.3,625.6 712.7,625.1 712.1,624.5 711.5,623.8 710.9,622.3 710.3,621.2 709.7,621.2 709.1,621.2 708.5,621.2 707.9,621.2 707.3,621.2 706.7,621.2 706.1,621.1 705.5,621.1 704.9,621.6 704.3,622.1 703.7,622.6 703.1,623.0 702.5,623.7 701.9,624.4 701.3,624.7 700.7,625.3 700.1,626.0 699.5,626.5 698.9,625.9 698.3,624.5 697.7,623.9 697.1,622.9 696.5,621.9 695.9,621.1 695.3,621.0 694.7,621.1 694.1,621.1 693.5,621.0 692.9,621.1 692.3,621.1 691.7,621.1 691.1,621.1 690.5,621.0 689.9,621.1 689.3,621.1 688.7,621.1 688.1,621.1 687.5,621.0 686.9,621.1 686.3,621.1 685.7,621.1 685.1,621.1 684.5,621.1 683.9,621.1 683.3,621.1 682.7,621.1 682.1,621.1 681.5,621.1 680.9,621.3 680.3,621.6 679.7,621.9 679.1,622.1 678.5,622.3 677.9,622.6 677.3,622.7 676.7,622.9 676.1,623.0 675.5,623.3 674.9,623.4 674.3,623.6 673.7,623.9 673.1,623.6 672.5,624.1 671.9,624.4 671.3,624.4 670.7,624.1 670.1,624.1 669.5,624.1 668.9,624.6 668.3,624.8 667.7,625.0 667.1,624.6 666.5,624.7 665.9,624.6 665.3,624.5 664.7,624.8 664.1,624.6 663.5,624.5 662.9,624.7 662.3,624.9 661.7,624.7 661.1,624.1 660.5,624.1 659.9,623.8 659.3,623.6 658.7,623.5 658.1,623.3 657.5,623.4 656.9,622.8 656.3,622.7 655.7,622.1 655.1,622.0 654.5,621.6 653.9,621.5 653.3,621.5 652.7,621.6 652.1,622.0 651.5,622.7 650.9,623.4 650.3,623.9 649.7,623.6 649.1,623.9 648.5,624.4 647.9,624.3 647.3,624.2 646.7,624.1 646.1,623.7 645.5,623.6 644.9,622.9 644.3,622.2 643.7,621.7 643.1,621.7 642.5,621.5 641.9,621.6 641.3,622.1 640.7,622.7 640.1,623.6 639.5,623.8 638.9,623.9 638.3,624.4 637.7,624.4 637.1,624.2 636.5,624.5 635.9,624.9 635.3,625.0 634.7,625.0 634.1,625.0 633.5,625.3 632.9,625.0 632.3,624.7 631.7,624.9 631.1,625.0 630.5,624.8 629.9,625.2 629.3,624.7 628.7,624.5 628.1,624.3 627.5,624.2 626.9,624.7 626.3,623.9 625.7,623.8 625.1,623.2 624.5,622.5 623.9,621.9 623.3,622.0 622.7,622.1 622.1,622.0 621.5,621.9 620.9,622.2 620.3,623.9 619.7,625.1 619.1,625.9 618.5,626.1 617.9,627.1 617.3,627.9 616.7,627.7 616.1,628.3 615.5,628.0 614.9,628.1 614.3,627.1 613.7,627.2 613.1,627.2 612.5,627.2 611.9,627.9 611.3,627.7 610.7,627.0 610.1,627.3 609.5,628.4 608.9,628.4 608.3,628.9 607.7,629.7 607.1,630.8 606.5,631.9 605.9,631.8 605.3,629.0 604.7,629.9 604.1,631.0 603.5,633.0 602.9,633.5 602.3,632.4 601.7,630.3 601.1,629.3 600.5,630.9 599.9,630.5 599.3,630.1 598.7,630.4 598.1,630.2 597.5,630.8 596.9,628.7 596.3,628.8 595.7,628.2 595.1,629.2 594.5,629.4 593.9,629.9 593.3,629.8 592.7,630.5 592.1,629.2 591.5,628.3 590.9,627.9 590.3,627.3 589.7,627.2 589.1,626.0 588.5,625.1 587.9,624.2 587.3,623.5 586.7,622.6 586.1,621.8 585.5,621.2 584.9,621.2 584.3,621.3 583.7,621.2 583.1,621.2 582.5,621.2 581.9,621.2 581.3,621.2 580.7,621.3 580.1,621.3 579.5,621.4 578.9,621.3 578.3,621.3 577.7,621.3 577.1,621.4 576.5,621.3 575.9,621.4 575.3,621.6 574.7,622.0 574.1,622.2 573.5,622.2 572.9,622.5 572.3,622.8 571.7,623.2 571.1,623.2 570.5,623.7 569.9,623.7 569.3,623.7 568.7,624.1 568.1,623.9 567.5,623.8 566.9,624.3 566.3,624.4 565.7,624.1 565.1,624.0 564.5,624.3 563.9,624.2 563.3,624.4 562.7,624.0 562.1,623.7 561.5,623.5 560.9,623.1 560.3,623.0 559.7,622.7 559.1,622.5 558.5,622.3 557.9,622.0 557.3,621.7 556.7,621.4 556.1,621.6 555.5,621.6 554.9,621.7 554.3,622.1 553.7,621.9 553.1,622.1 552.5,623.5 551.9,625.1 551.3,626.5 550.7,626.8 550.1,627.3 549.5,627.7 548.9,628.0 548.3,628.1 547.7,626.9 547.1,628.5 546.5,627.5 545.9,627.6 545.3,626.9 544.7,627.8 544.1,627.5 543.5,628.1 542.9,627.4 542.3,627.8 541.7,627.6 541.1,628.5 540.5,627.8 539.9,627.3 539.3,627.2 538.7,626.6 538.1,626.5 537.5,627.8 536.9,627.2 536.3,626.8 535.7,627.5 535.1,628.2 534.5,628.1 533.9,628.9 533.3,628.3 532.7,628.5 532.1,628.0 531.5,627.8 530.9,627.6 530.3,627.7 529.7,627.2 529.1,625.5 528.5,624.8 527.9,623.4 527.3,622.4 526.7,621.9 526.1,622.0 525.5,621.8 524.9,622.0 524.3,622.0 523.7,622.2 523.1,622.0 522.5,622.2 521.9,622.2 521.3,622.4 520.7,622.3 520.1,622.3 519.5,622.8 518.9,623.3 518.3,623.7 517.7,623.4 517.1,623.4 516.5,622.7 515.9,622.5 515.3,622.3 514.7,622.0 514.1,621.5 513.5,621.7 512.9,621.6 512.3,621.6 511.7,621.6 511.1,621.6 510.5,621.7 509.9,622.9 509.3,624.1 508.7,625.9 508.1,628.0 507.5,630.0 506.9,634.9 506.3,634.2 505.7,631.4 505.1,629.9 504.5,627.4 503.9,624.9 503.3,622.7 502.7,621.6 502.1,621.5 501.5,621.4 500.9,621.4 500.3,622.2 499.7,622.8 499.1,623.5 498.5,623.7 497.9,624.4 497.3,624.1 496.7,624.3 496.1,624.8 495.5,624.6 494.9,624.5 494.3,624.5 493.7,624.7 493.1,624.3 492.5,624.5 491.9,623.7 491.3,623.5 490.7,622.5 490.1,621.8 489.5,621.8 488.9,621.7 488.3,621.7 487.7,621.9 487.1,622.6 486.5,623.2 485.9,623.8 485.3,623.5 484.7,624.4 484.1,624.4 483.5,624.2 482.9,625.1 482.3,624.6 481.7,624.7 481.1,624.7 480.5,624.3 479.9,624.0 479.3,624.1 478.7,623.6 478.1,622.5 477.5,621.6 476.9,621.6 476.3,621.6 475.7,621.7 475.1,621.7 474.5,621.6 473.9,622.1 473.3,622.6 472.7,624.2 472.1,626.0 471.5,623.0 470.9,622.8 470.3,623.1 469.7,623.7 469.1,624.2 468.5,624.5 467.9,624.0 467.3,624.3 466.7,624.7 466.1,624.7 465.5,624.1 464.9,623.9 464.3,623.3 463.7,623.4 463.1,622.8 462.5,622.7 461.9,624.5 461.3,625.7 460.7,626.7 460.1,629.3 459.5,630.0 458.9,631.5 458.3,633.0 457.7,632.1 457.1,631.2 456.5,629.1 455.9,628.9 455.3,628.1 454.7,626.7 454.1,625.3 453.5,625.7 452.9,626.1 452.3,625.9 451.7,625.9 451.1,626.5 450.5,626.2 449.9,625.6 449.3,625.5 448.7,626.2 448.1,625.9 447.5,625.4 446.9,624.0 446.3,623.5 445.7,624.2 445.1,624.5 444.5,625.4 443.9,625.4 443.3,626.3 442.7,626.0 442.1,626.3 441.5,626.3 440.9,627.0 440.3,626.7 439.7,627.0 439.1,626.4 438.5,626.9 437.9,626.0 437.3,626.3 436.7,625.7 436.1,626.0 435.5,625.7 434.9,626.0 434.3,626.8 433.7,626.6 433.1,626.8 432.5,627.1 431.9,625.9 431.3,624.3 430.7,623.4 430.1,623.5 429.5,623.2 428.9,623.2 428.3,622.9 427.7,622.7 427.1,622.9 426.5,622.7 425.9,622.5 425.3,622.6 424.7,623.1 424.1,623.1 423.5,623.7 422.9,623.8 422.3,624.4 421.7,625.3 421.1,626.0 420.5,627.3 419.9,625.7 419.3,624.1 418.7,622.8 418.1,622.8 417.5,622.7 416.9,622.7 416.3,623.2 415.7,624.4 415.1,626.1 414.5,626.9 413.9,625.6 413.3,626.6 412.7,626.5 412.1,626.2 411.5,626.7 410.9,626.4 410.3,627.2 409.7,626.4 409.1,627.3 408.5,627.1 407.9,626.6 407.3,626.5 406.7,626.5 406.1,625.8 405.5,624.9 404.9,624.6 404.3,623.7 403.7,623.8 403.1,623.9 402.5,623.7 401.9,623.4 401.3,624.2 400.7,624.0 400.1,624.4 399.5,624.7 398.9,625.2 398.3,626.3 397.7,626.5 397.1,626.9 396.5,629.3 395.9,630.4 395.3,631.6 394.7,629.6 394.1,627.1 393.5,622.6 392.9,622.1 392.3,621.5 391.7,621.1 391.1,621.0 390.5,621.1 389.9,621.1 389.3,621.1 388.7,621.0 388.1,621.1 387.5,621.1 386.9,621.0 386.3,621.0 385.7,621.1 385.1,621.0 384.5,621.1 383.9,621.0 383.3,621.1 382.7,621.1 382.1,621.0 381.5,621.1 380.9,621.1 380.3,621.1 379.7,621.1 379.1,621.1 378.5,621.1 377.9,621.1 377.3,621.1 376.7,621.1 376.1,621.1 375.5,621.1 374.9,621.1 374.3,621.1 373.7,621.1 373.1,621.1 372.5,621.1 371.9,621.1 371.3,621.1 370.7,621.1 370.1,621.1 369.5,621.1 368.9,621.0 368.3,621.1 367.7,621.1 367.1,621.1 366.5,621.1 365.9,621.2 365.3,621.7 364.7,621.9 364.1,622.4 363.5,622.8 362.9,623.4 362.3,623.6 361.7,624.0 361.1,624.0 360.5,624.5 359.9,624.7 359.3,624.5 358.7,624.5 358.1,625.6 357.5,625.2 356.9,625.4 356.3,625.2 355.7,625.4 355.1,625.5 354.5,625.3 353.9,625.1 353.3,625.2 352.7,624.4 352.1,624.2 351.5,624.3 350.9,624.0 350.3,624.4 349.7,624.5 349.1,624.8 348.5,624.7 347.9,624.7 347.3,625.3 346.7,625.0 346.1,625.4 345.5,624.5 344.9,624.7 344.3,624.9 343.7,624.6 343.1,624.3 342.5,623.8 341.9,623.0 341.3,622.2 340.7,621.7 340.1,621.6 339.5,621.8 338.9,621.6 338.3,621.7 337.7,622.6 337.1,623.7 336.5,623.6 335.9,624.9 335.3,624.9 334.7,624.6 334.1,625.1 333.5,625.0 332.9,625.0 332.3,625.0 331.7,625.4 331.1,625.1 330.5,625.4 329.9,625.3 329.3,625.5 328.7,625.0 328.1,624.8 327.5,624.9 326.9,625.2 326.3,625.5 325.7,625.2 325.1,625.6 324.5,625.3 323.9,625.0 323.3,625.3 322.7,625.0 322.1,625.4 321.5,625.6 320.9,624.9 320.3,625.1 319.7,625.3 319.1,625.3 318.5,625.3 317.9,624.6 317.3,624.8 316.7,624.0 316.1,624.4 315.5,623.8 314.9,624.0 314.3,623.4 313.7,623.0 313.1,623.6 312.5,623.8 311.9,624.1 311.3,623.9 310.7,623.9 310.1,623.0 309.5,622.5 308.9,621.8 308.3,621.5 307.7,621.3 307.1,621.3 306.5,621.2 305.9,621.2 305.3,621.5 304.7,621.7 304.1,622.0 303.5,622.2 302.9,622.4 302.3,622.7 301.7,622.8 301.1,622.7 300.5,623.4 299.9,623.5 299.3,623.6 298.7,623.5 298.1,623.8 297.5,624.0 296.9,624.7 296.3,624.5 295.7,624.5 295.1,624.5 294.5,624.7 293.9,624.6 293.3,624.9 292.7,624.7 292.1,625.4 291.5,625.0 290.9,624.8 290.3,625.2 289.7,625.0 289.1,625.4 288.5,625.5 287.9,625.2 287.3,625.9 286.7,625.5 286.1,626.2 285.5,625.6 284.9,626.4 284.3,625.9 283.7,626.0 283.1,625.2 282.5,625.0 281.9,625.0 281.3,624.6 280.7,624.6 280.1,625.2 279.5,625.0 278.9,625.8 278.3,625.8 277.7,626.0 277.1,626.6 276.5,626.3 275.9,626.6 275.3,625.6 274.7,626.0 274.1,625.8 273.5,625.7 272.9,625.4 272.3,623.7 271.7,622.0 271.1,622.1 270.5,622.3 269.9,622.1 269.3,622.1 268.7,622.1 268.1,622.2 267.5,622.6 266.9,623.2 266.3,623.5 265.7,624.3 265.1,625.6 264.5,627.0 263.9,628.5 263.3,626.7 262.7,625.7 262.1,624.9 261.5,625.5 260.9,627.1 260.3,626.4 259.7,622.7 259.1,621.6 258.5,621.6 257.9,621.6 257.3,621.7 256.7,621.7 256.1,622.5 255.5,624.6 254.9,625.5 254.3,625.9 253.7,626.9 253.1,627.2 252.5,627.1 251.9,628.1 251.3,628.0 250.7,627.9 250.1,627.2 249.5,626.8 248.9,626.5 248.3,627.3 247.7,627.9 247.1,628.0 246.5,629.0 245.9,629.0 245.3,627.9 244.7,627.3 244.1,626.8 243.5,626.9 242.9,626.9 242.3,627.2 241.7,627.8 241.1,627.2 240.5,628.2 239.9,627.8 239.3,627.5 238.7,628.0 238.1,627.7 237.5,628.2 236.9,627.1 236.3,625.4 235.7,623.8 235.1,622.4 234.5,622.3 233.9,622.3 233.3,622.7 232.7,624.2 232.1,625.6 231.5,625.9 230.9,625.7 230.3,625.5 229.7,626.2 229.1,625.9 228.5,626.5 227.9,625.9 227.3,626.2 226.7,626.6 226.1,626.8 225.5,627.2 224.9,626.7 224.3,626.6 223.7,626.1 223.1,626.2 222.5,627.1 221.9,626.1 221.3,627.1 220.7,626.7 220.1,625.9 219.5,626.3 218.9,625.3 218.3,625.8 217.7,625.2 217.1,626.3 216.5,625.5 215.9,626.2 215.3,625.7 214.7,625.8 214.1,625.4 213.5,625.7 212.9,626.0 212.3,626.2 211.7,626.0 211.1,626.4 210.5,626.0 209.9,625.5 209.3,625.1 208.7,625.0 208.1,624.7 207.5,624.8 206.9,624.2 206.3,624.1 205.7,623.2 205.1,623.1 204.5,622.4 203.9,622.0 203.3,622.1 202.7,622.4 202.1,622.6 201.5,623.0 200.9,623.0 200.3,622.7 199.7,622.6 199.1,622.7 198.5,622.7 197.9,622.6 197.3,622.0 196.7,621.4 196.1,621.1 195.5,621.1 194.9,621.1 194.3,621.0 193.7,621.1 193.1,621.1 192.5,621.1 191.9,621.1 191.3,621.1 190.7,621.1 190.1,621.0 189.5,621.1 188.9,621.1 188.3,621.0 187.7,621.0 187.1,621.1 186.5,621.1 185.9,621.1 185.3,621.0 184.7,621.1 184.1,621.1 183.5,621.1 182.9,621.1 182.3,621.1 181.7,621.1 181.1,621.0 180.5,621.0 179.9,621.1 179.3,621.1 178.7,621.1 178.1,621.1 177.5,621.1 176.9,621.1 176.3,621.3 175.7,621.6 175.1,621.7 174.5,622.0 173.9,622.2 173.3,622.5 172.7,622.8 172.1,623.0 171.5,623.2 170.9,624.1 170.3,623.7 169.7,624.1 169.1,624.6 168.5,624.9 167.9,625.2 167.3,625.0 166.7,625.5 166.1,625.8 165.5,625.7 164.9,626.4 164.3,626.5 163.7,627.0 163.1,626.8 162.5,626.7 161.9,627.2 161.3,626.5 160.7,626.8 160.1,626.9 159.5,627.0 158.9,626.9 158.3,626.4 157.7,626.4 157.1,626.3 156.5,626.1 155.9,625.8 155.3,626.1 154.7,625.8 154.1,625.7 153.5,625.5 152.9,625.3 152.3,625.1 151.7,624.6 151.1,624.8 150.5,624.1 149.9,622.7 149.3,621.7 148.7,621.2 148.1,621.2 147.5,621.3 146.9,621.4 146.3,621.4 145.7,621.5 145.1,621.4 144.5,621.6 143.9,622.4 143.3,623.2 142.7,625.1 142.1,625.1 141.5,625.7 140.9,626.4 140.3,626.2 139.7,626.1 139.1,626.1 138.5,626.2 137.9,625.9 137.3,626.6 136.7,626.2 136.1,625.3 135.5,625.1 134.9,625.1 134.3,625.3 133.7,624.9 133.1,625.7 132.5,625.2 131.9,625.6 131.3,625.7 130.7,625.6 130.1,626.4 129.5,625.1 128.9,625.1 128.3,625.2 127.7,624.7 127.1,625.1 126.5,623.7 125.9,621.9 125.3,621.3 124.7,621.2 124.1,621.2 123.5,621.2 122.9,621.5 122.3,622.0 121.7,622.3 121.1,622.6 120.5,623.0 119.9,623.2 119.3,623.7 118.7,624.6 118.1,624.8 117.5,624.5 116.9,625.0 116.3,625.1 115.7,625.2 115.1,625.4 114.5,625.8 113.9,624.7 113.3,624.2 112.7,623.0 112.1,621.3 111.5,621.1 110.9,621.1 110.3,621.1 109.7,621.0 109.1,621.1 108.5,621.0 107.9,621.0 107.3,621.0 106.7,621.0 106.1,621.1 105.5,621.0 104.9,621.0 104.3,621.0 103.7,621.1 103.1,621.0 102.5,621.1 101.9,621.0 101.3,621.0 100.7,621.0 100.1,621.0 99.5,621.0 98.9,621.1 98.3,621.0 97.7,621.1 97.1,621.1 96.5,621.0 95.9,621.0 95.3,621.0 94.7,621.1 94.1,621.1 93.5,621.0 92.9,621.0 92.3,621.1 91.7,621.0 91.1,621.1 90.5,621.1 89.9,621.1 89.3,621.1" fill="#5c5a6a" clip-path="url(#cl)"/>
<polygon points="89.3,620.2 89.9,620.1 90.5,620.1 91.1,620.2 91.7,620.1 92.3,620.1 92.9,620.2 93.5,620.1 94.1,620.1 94.7,620.1 95.3,620.2 95.9,620.2 96.5,620.2 97.1,620.1 97.7,620.1 98.3,620.2 98.9,620.1 99.5,620.1 100.1,620.1 100.7,620.1 101.3,620.2 101.9,620.2 102.5,620.1 103.1,620.2 103.7,620.2 104.3,620.2 104.9,620.2 105.5,620.2 106.1,620.2 106.7,620.1 107.3,620.1 107.9,620.1 108.5,620.2 109.1,620.1 109.7,620.2 110.3,620.2 110.9,620.1 111.5,620.1 112.1,619.9 112.7,618.3 113.3,617.1 113.9,616.4 114.5,615.7 115.1,616.0 115.7,615.8 116.3,616.2 116.9,616.1 117.5,616.5 118.1,616.4 118.7,616.9 119.3,617.6 119.9,617.9 120.5,618.0 121.1,618.5 121.7,618.8 122.3,619.3 122.9,619.7 123.5,620.0 124.1,620.0 124.7,620.0 125.3,619.9 125.9,619.3 126.5,617.4 127.1,615.9 127.7,616.1 128.3,615.9 128.9,615.9 129.5,615.7 130.1,615.1 130.7,615.4 131.3,615.2 131.9,615.5 132.5,615.9 133.1,615.9 133.7,616.5 134.3,616.2 134.9,616.2 135.5,615.8 136.1,615.7 136.7,615.4 137.3,614.8 137.9,615.0 138.5,615.3 139.1,615.0 139.7,615.4 140.3,615.4 140.9,615.1 141.5,615.3 142.1,615.8 142.7,616.4 143.3,617.8 143.9,618.8 144.5,619.6 145.1,619.7 145.7,619.7 146.3,619.8 146.9,619.9 147.5,619.9 148.1,619.9 148.7,620.0 149.3,619.5 149.9,618.5 150.5,617.3 151.1,616.6 151.7,616.4 152.3,616.0 152.9,616.2 153.5,616.0 154.1,615.4 154.7,615.3 155.3,615.5 155.9,615.3 156.5,614.9 157.1,614.6 157.7,615.0 158.3,614.4 158.9,614.3 159.5,614.4 160.1,614.5 160.7,614.6 161.3,614.6 161.9,613.8 162.5,614.2 163.1,614.0 163.7,614.6 164.3,614.4 164.9,614.8 165.5,615.3 166.1,615.6 166.7,615.5 167.3,616.1 167.9,616.2 168.5,616.3 169.1,616.5 169.7,616.9 170.3,617.3 170.9,617.3 171.5,617.9 172.1,618.2 172.7,618.4 173.3,618.7 173.9,619.0 174.5,619.2 175.1,619.4 175.7,619.6 176.3,619.9 176.9,620.1 177.5,620.1 178.1,620.1 178.7,620.1 179.3,620.1 179.9,620.1 180.5,620.1 181.1,620.1 181.7,620.1 182.3,620.1 182.9,620.1 183.5,620.1 184.1,620.1 184.7,620.1 185.3,620.1 185.9,620.1 186.5,620.1 187.1,620.1 187.7,620.2 188.3,620.1 188.9,620.1 189.5,620.1 190.1,620.1 190.7,620.1 191.3,620.1 191.9,620.1 192.5,620.1 193.1,620.1 193.7,620.1 194.3,620.1 194.9,620.2 195.5,620.1 196.1,620.1 196.7,619.9 197.3,619.3 197.9,618.7 198.5,618.5 199.1,618.5 199.7,618.5 200.3,618.3 200.9,618.2 201.5,618.4 202.1,618.6 202.7,618.8 203.3,618.9 203.9,619.2 204.5,618.8 205.1,618.2 205.7,617.9 206.3,617.1 206.9,616.9 207.5,616.4 208.1,616.3 208.7,616.2 209.3,615.8 209.9,615.7 210.5,615.5 211.1,615.1 211.7,615.3 212.3,615.4 212.9,615.3 213.5,615.1 214.1,615.5 214.7,615.5 215.3,615.1 215.9,615.3 216.5,615.5 217.1,615.3 217.7,615.7 218.3,615.4 218.9,615.6 219.5,615.3 220.1,614.9 220.7,614.6 221.3,614.5 221.9,614.7 222.5,614.6 223.1,614.8 223.7,614.9 224.3,614.7 224.9,614.5 225.5,614.5 226.1,614.6 226.7,614.4 227.3,614.9 227.9,615.0 228.5,614.9 229.1,615.2 229.7,615.3 230.3,615.3 230.9,615.3 231.5,615.5 232.1,615.9 232.7,617.1 233.3,618.5 233.9,619.0 234.5,618.9 235.1,618.8 235.7,617.5 236.3,616.1 236.9,613.7 237.5,613.4 238.1,613.5 238.7,612.9 239.3,613.4 239.9,613.2 240.5,613.0 241.1,613.6 241.7,613.1 242.3,613.8 242.9,614.0 243.5,614.3 244.1,613.9 244.7,613.6 245.3,613.0 245.9,612.5 246.5,612.7 247.1,612.9 247.7,613.6 248.3,614.4 248.9,614.6 249.5,614.6 250.1,614.4 250.7,613.8 251.3,613.3 251.9,613.4 252.5,613.7 253.1,614.1 253.7,614.4 254.3,615.0 254.9,615.4 255.5,616.8 256.1,618.6 256.7,619.6 257.3,619.6 257.9,619.6 258.5,619.5 259.1,619.6 259.7,618.5 260.3,614.8 260.9,614.3 261.5,615.4 262.1,616.5 262.7,615.3 263.3,614.0 263.9,613.0 264.5,613.9 265.1,615.6 265.7,616.9 266.3,617.9 266.9,618.2 267.5,618.7 268.1,619.1 268.7,619.1 269.3,619.2 269.9,619.0 270.5,619.0 271.1,619.0 271.7,619.1 272.3,617.5 272.9,616.0 273.5,615.2 274.1,615.2 274.7,615.4 275.3,615.4 275.9,615.1 276.5,614.9 277.1,614.7 277.7,615.1 278.3,615.7 278.9,615.5 279.5,616.2 280.1,616.0 280.7,616.6 281.3,616.5 281.9,616.0 282.5,616.1 283.1,615.8 283.7,615.2 284.3,615.0 284.9,615.0 285.5,615.2 286.1,615.2 286.7,615.6 287.3,615.4 287.9,616.0 288.5,616.0 289.1,615.9 289.7,616.1 290.3,615.9 290.9,616.0 291.5,616.1 292.1,616.0 292.7,616.3 293.3,616.5 293.9,616.6 294.5,616.5 295.1,616.5 295.7,616.9 296.3,616.8 296.9,616.8 297.5,617.1 298.1,617.2 298.7,617.5 299.3,617.6 299.9,617.8 300.5,618.0 301.1,618.3 301.7,618.3 302.3,618.6 302.9,618.8 303.5,618.9 304.1,619.2 304.7,619.5 305.3,619.7 305.9,620.0 306.5,620.0 307.1,619.9 307.7,619.8 308.3,619.8 308.9,619.5 309.5,618.8 310.1,618.2 310.7,617.4 311.3,617.0 311.9,617.1 312.5,617.5 313.1,617.8 313.7,618.0 314.3,617.8 314.9,617.4 315.5,617.4 316.1,616.9 316.7,616.9 317.3,616.6 317.9,616.3 318.5,616.0 319.1,616.1 319.7,616.1 320.3,615.9 320.9,616.2 321.5,615.8 322.1,616.1 322.7,615.9 323.3,616.0 323.9,616.0 324.5,615.8 325.1,615.8 325.7,615.9 326.3,615.9 326.9,615.8 327.5,616.1 328.1,616.1 328.7,615.8 329.3,615.9 329.9,615.9 330.5,615.8 331.1,616.0 331.7,615.9 332.3,616.3 332.9,616.1 333.5,616.1 334.1,616.2 334.7,616.5 335.3,616.6 335.9,616.4 336.5,617.3 337.1,617.8 337.7,618.5 338.3,619.4 338.9,619.6 339.5,619.5 340.1,619.5 340.7,619.5 341.3,618.9 341.9,618.2 342.5,617.2 343.1,616.8 343.7,616.5 344.3,616.3 344.9,616.6 345.5,616.4 346.1,616.0 346.7,615.8 347.3,615.8 347.9,616.4 348.5,616.4 349.1,616.4 349.7,616.7 350.3,616.7 350.9,617.1 351.5,617.0 352.1,616.9 352.7,616.7 353.3,616.3 353.9,616.1 354.5,615.9 355.1,616.0 355.7,616.1 356.3,616.1 356.9,615.8 357.5,615.8 358.1,615.9 358.7,616.5 359.3,616.5 359.9,616.2 360.5,616.7 361.1,616.9 361.7,617.4 362.3,617.7 362.9,618.0 363.5,618.3 364.1,618.7 364.7,619.2 365.3,619.6 365.9,620.0 366.5,620.1 367.1,620.1 367.7,620.1 368.3,620.1 368.9,620.1 369.5,620.1 370.1,620.1 370.7,620.1 371.3,620.1 371.9,620.1 372.5,620.1 373.1,620.1 373.7,620.1 374.3,620.1 374.9,620.1 375.5,620.1 376.1,620.1 376.7,620.1 377.3,620.1 377.9,620.1 378.5,620.1 379.1,620.1 379.7,620.1 380.3,620.1 380.9,620.1 381.5,620.1 382.1,620.1 382.7,620.1 383.3,620.1 383.9,620.1 384.5,620.1 385.1,620.2 385.7,620.1 386.3,620.1 386.9,620.2 387.5,620.1 388.1,620.1 388.7,620.1 389.3,620.2 389.9,620.1 390.5,620.1 391.1,620.2 391.7,620.1 392.3,619.7 392.9,619.1 393.5,618.6 394.1,614.4 394.7,611.3 395.3,610.0 395.9,610.9 396.5,612.1 397.1,613.9 397.7,614.3 398.3,615.1 398.9,616.0 399.5,616.2 400.1,616.7 400.7,617.0 401.3,617.3 401.9,617.7 402.5,617.6 403.1,617.3 403.7,617.3 404.3,617.3 404.9,616.9 405.5,616.4 406.1,615.5 406.7,615.0 407.3,614.6 407.9,615.0 408.5,614.6 409.1,614.4 409.7,614.9 410.3,614.2 410.9,614.7 411.5,614.5 412.1,614.8 412.7,614.7 413.3,614.7 413.9,615.2 414.5,614.7 415.1,615.4 415.7,616.7 416.3,618.1 416.9,618.6 417.5,618.5 418.1,618.3 418.7,618.2 419.3,617.3 419.9,615.1 420.5,614.0 421.1,615.2 421.7,616.2 422.3,617.0 422.9,617.3 423.5,617.5 424.1,618.0 424.7,618.3 425.3,618.5 425.9,618.7 426.5,618.4 427.1,618.3 427.7,618.5 428.3,618.2 428.9,618.2 429.5,618.0 430.1,617.6 430.7,617.7 431.3,616.6 431.9,615.3 432.5,614.2 433.1,614.6 433.7,614.5 434.3,614.8 434.9,615.2 435.5,615.7 436.1,615.5 436.7,615.3 437.3,615.2 437.9,615.0 438.5,614.4 439.1,614.5 439.7,614.4 440.3,614.4 440.9,614.7 441.5,614.9 442.1,614.8 442.7,615.1 443.3,615.1 443.9,615.7 444.5,615.9 445.1,616.4 445.7,617.0 446.3,617.6 446.9,617.1 447.5,616.0 448.1,615.4 448.7,615.4 449.3,615.5 449.9,615.5 450.5,615.1 451.1,615.1 451.7,615.0 452.3,615.0 452.9,615.1 453.5,615.6 454.1,615.6 454.7,614.2 455.3,613.3 455.9,612.4 456.5,611.8 457.1,610.2 457.7,608.7 458.3,607.8 458.9,608.8 459.5,611.1 460.1,612.2 460.7,614.1 461.3,615.7 461.9,616.9 462.5,618.6 463.1,618.3 463.7,618.0 464.3,617.7 464.9,617.5 465.5,617.2 466.1,616.7 466.7,616.4 467.3,616.7 467.9,616.9 468.5,616.9 469.1,617.2 469.7,617.4 470.3,617.9 470.9,618.3 471.5,618.2 472.1,614.9 472.7,617.2 473.3,618.8 473.9,619.1 474.5,619.6 475.1,619.6 475.7,619.6 476.3,619.5 476.9,619.6 477.5,619.6 478.1,618.8 478.7,617.4 479.3,617.1 479.9,617.1 480.5,616.7 481.1,616.7 481.7,616.5 482.3,616.6 482.9,616.3 483.5,616.8 484.1,617.0 484.7,617.0 485.3,617.5 485.9,617.6 486.5,618.0 487.1,618.7 487.7,619.3 488.3,619.6 488.9,619.5 489.5,619.4 490.1,619.3 490.7,618.7 491.3,617.9 491.9,617.3 492.5,617.0 493.1,616.8 493.7,616.8 494.3,616.9 494.9,616.6 495.5,616.8 496.1,616.7 496.7,616.9 497.3,616.8 497.9,617.1 498.5,617.5 499.1,617.8 499.7,618.4 500.3,619.1 500.9,619.7 501.5,619.8 502.1,619.7 502.7,619.6 503.3,618.4 503.9,616.2 504.5,613.7 505.1,611.6 505.7,609.7 506.3,607.4 506.9,607.0 507.5,610.6 508.1,613.3 508.7,615.3 509.3,617.2 509.9,618.4 510.5,619.5 511.1,619.6 511.7,619.6 512.3,619.7 512.9,619.6 513.5,619.6 514.1,619.6 514.7,619.3 515.3,618.9 515.9,618.6 516.5,618.5 517.1,618.0 517.7,617.9 518.3,617.4 518.9,617.8 519.5,618.4 520.1,618.9 520.7,618.8 521.3,618.9 521.9,618.9 522.5,619.1 523.1,619.1 523.7,619.1 524.3,619.2 524.9,619.3 525.5,619.3 526.1,619.3 526.7,619.3 527.3,618.8 527.9,617.8 528.5,616.4 529.1,615.3 529.7,613.9 530.3,613.3 530.9,613.1 531.5,613.0 532.1,612.8 532.7,612.9 533.3,612.9 533.9,612.6 534.5,612.7 535.1,613.3 535.7,613.5 536.3,614.0 536.9,613.8 537.5,613.8 538.1,614.5 538.7,614.4 539.3,614.2 539.9,613.8 540.5,613.7 541.1,612.9 541.7,613.5 542.3,613.2 542.9,613.5 543.5,613.2 544.1,613.2 544.7,613.8 545.3,614.0 545.9,613.8 546.5,613.6 547.1,613.2 547.7,613.9 548.3,613.7 548.9,613.5 549.5,613.8 550.1,614.2 550.7,614.3 551.3,614.9 551.9,616.3 552.5,617.8 553.1,619.1 553.7,619.2 554.3,619.2 554.9,619.4 555.5,619.5 556.1,619.6 556.7,619.8 557.3,619.6 557.9,619.1 558.5,618.8 559.1,618.6 559.7,618.3 560.3,618.0 560.9,617.9 561.5,617.8 562.1,617.7 562.7,617.1 563.3,617.1 563.9,617.2 564.5,617.1 565.1,617.1 565.7,617.2 566.3,616.9 566.9,617.0 567.5,617.1 568.1,617.2 568.7,617.2 569.3,617.4 569.9,617.5 570.5,617.7 571.1,617.9 571.7,618.2 572.3,618.4 572.9,618.6 573.5,618.9 574.1,619.0 574.7,619.3 575.3,619.5 575.9,619.7 576.5,619.8 577.1,619.8 577.7,619.9 578.3,619.8 578.9,619.9 579.5,619.8 580.1,619.9 580.7,619.9 581.3,619.9 581.9,619.9 582.5,619.9 583.1,620.0 583.7,620.0 584.3,620.0 584.9,620.0 585.5,620.0 586.1,619.3 586.7,618.7 587.3,617.8 587.9,617.1 588.5,616.0 589.1,615.6 589.7,614.3 590.3,614.0 590.9,613.2 591.5,612.6 592.1,612.4 592.7,611.1 593.3,611.1 593.9,611.1 594.5,611.8 595.1,612.1 595.7,612.4 596.3,612.1 596.9,612.0 597.5,611.1 598.1,611.3 598.7,610.5 599.3,610.3 599.9,610.1 600.5,610.6 601.1,611.2 601.7,611.6 602.3,609.6 602.9,607.5 603.5,608.5 604.1,610.1 604.7,611.5 605.3,611.7 605.9,610.2 606.5,610.0 607.1,610.6 607.7,610.8 608.3,611.8 608.9,612.4 609.5,613.0 610.1,613.8 610.7,613.8 611.3,613.9 611.9,613.7 612.5,614.1 613.1,614.2 613.7,613.9 614.3,614.1 614.9,613.4 615.5,613.5 616.1,613.2 616.7,613.3 617.3,613.1 617.9,614.3 618.5,614.9 619.1,615.5 619.7,616.0 620.3,617.4 620.9,619.0 621.5,619.2 622.1,619.1 622.7,619.2 623.3,619.3 623.9,619.2 624.5,618.7 625.1,618.1 625.7,617.4 626.3,617.1 626.9,616.6 627.5,616.7 628.1,616.6 628.7,616.4 629.3,616.2 629.9,616.1 630.5,616.2 631.1,616.1 631.7,616.1 632.3,616.4 632.9,616.2 633.5,616.1 634.1,616.0 634.7,616.1 635.3,616.3 635.9,616.3 636.5,616.8 637.1,616.8 637.7,617.0 638.3,617.0 638.9,617.4 639.5,617.5 640.1,617.7 640.7,618.4 641.3,619.2 641.9,619.6 642.5,619.6 643.1,619.6 643.7,619.6 644.3,619.0 644.9,618.3 645.5,617.6 646.1,617.5 646.7,617.1 647.3,616.8 647.9,616.8 648.5,616.9 649.1,617.0 649.7,617.5 650.3,617.4 650.9,617.7 651.5,618.4 652.1,619.1 652.7,619.7 653.3,619.7 653.9,619.6 654.5,619.6 655.1,619.2 655.7,618.9 656.3,618.6 656.9,618.4 657.5,617.9 658.1,618.0 658.7,617.6 659.3,617.5 659.9,617.4 660.5,617.2 661.1,617.2 661.7,616.7 662.3,616.6 662.9,616.6 663.5,616.7 664.1,616.8 664.7,616.5 665.3,616.7 665.9,616.3 666.5,616.6 667.1,616.4 667.7,616.3 668.3,616.6 668.9,616.5 669.5,616.9 670.1,617.0 670.7,617.0 671.3,616.7 671.9,616.9 672.5,617.1 673.1,617.3 673.7,617.3 674.3,617.4 674.9,617.7 675.5,617.9 676.1,618.0 676.7,618.4 677.3,618.5 677.9,618.7 678.5,618.9 679.1,619.1 679.7,619.3 680.3,619.6 680.9,619.8 681.5,620.1 682.1,620.1 682.7,620.1 683.3,620.1 683.9,620.1 684.5,620.1 685.1,620.1 685.7,620.1 686.3,620.1 686.9,620.1 687.5,620.1 688.1,620.1 688.7,620.1 689.3,620.1 689.9,620.1 690.5,620.1 691.1,620.1 691.7,620.1 692.3,620.1 692.9,620.1 693.5,620.1 694.1,620.1 694.7,620.1 695.3,620.1 695.9,620.1 696.5,619.4 697.1,618.3 697.7,617.4 698.3,616.4 698.9,614.8 699.5,614.4 700.1,615.1 700.7,615.8 701.3,616.3 701.9,617.0 702.5,617.4 703.1,618.1 703.7,618.6 704.3,619.1 704.9,619.5 705.5,620.0 706.1,620.1 706.7,620.0 707.3,620.0 707.9,620.0 708.5,620.0 709.1,620.0 709.7,620.0 710.3,619.9 710.9,618.8 711.5,617.5 712.1,616.4 712.7,615.7 713.3,615.3 713.9,614.5 714.5,614.9 715.1,614.6 715.7,614.9 716.3,614.8 716.9,615.4 717.5,615.1 718.1,615.6 718.7,615.2 719.3,614.8 719.9,615.3 720.5,615.0 721.1,614.8 721.7,614.6 722.3,614.8 722.9,614.2 723.5,614.4 724.1,614.8 724.7,614.9 725.3,614.8 725.9,615.3 726.5,615.6 727.1,615.5 727.7,616.2 728.3,616.5 728.9,617.8 729.5,619.5 730.1,619.8 730.7,619.8 731.3,619.8 731.9,619.8 732.5,619.8 733.1,619.8 733.7,619.8 734.3,619.8 734.9,618.5 735.5,617.1 736.1,615.3 736.7,614.6 737.3,614.5 737.9,613.6 738.5,613.8 739.1,613.1 739.7,613.7 740.3,613.6 740.9,613.0 741.5,613.2 742.1,612.6 742.7,612.6 743.3,612.7 743.9,613.2 744.5,612.7 745.1,612.4 745.7,612.9 746.3,613.3 746.9,613.3 747.5,613.3 748.1,613.1 748.7,613.7 749.3,613.9 749.9,614.0 750.5,613.9 751.1,614.1 751.7,614.7 752.3,614.7 752.9,614.9 753.5,615.3 754.1,615.8 754.7,616.3 755.3,616.5 755.9,617.2 756.5,617.8 757.1,618.3 757.7,619.2 758.3,619.8 758.9,620.0 759.5,620.0 760.1,620.0 760.7,620.0 761.3,620.0 761.9,620.0 762.5,620.0 763.1,620.0 763.7,620.1 764.3,620.1 764.9,620.0 765.5,620.1 766.1,620.1 766.7,620.1 767.3,620.1 767.9,620.0 768.5,620.0 769.1,620.1 769.7,620.1 770.3,620.1 770.9,620.1 771.5,620.1 772.1,620.1 772.7,620.1 773.3,620.1 773.9,620.1 774.5,620.1 775.1,620.1 775.7,620.1 776.3,620.1 776.9,620.1 777.5,620.1 778.1,620.1 778.7,620.1 779.3,620.1 779.9,620.2 780.5,620.1 781.1,620.0 781.7,619.7 782.3,619.5 782.9,619.1 783.5,618.8 784.1,618.5 784.7,618.2 785.3,618.1 785.9,617.7 786.5,617.6 787.1,617.1 787.7,616.9 788.3,616.9 788.3,624.4 787.7,624.4 787.1,624.1 786.5,623.8 785.9,623.3 785.3,623.0 784.7,622.8 784.1,622.7 783.5,622.4 782.9,622.0 782.3,621.7 781.7,621.5 781.1,621.1 780.5,621.1 779.9,621.0 779.3,621.1 778.7,621.1 778.1,621.1 777.5,621.1 776.9,621.1 776.3,621.0 775.7,621.1 775.1,621.1 774.5,621.1 773.9,621.1 773.3,621.1 772.7,621.1 772.1,621.1 771.5,621.1 770.9,621.1 770.3,621.1 769.7,621.1 769.1,621.1 768.5,621.2 767.9,621.1 767.3,621.1 766.7,621.1 766.1,621.1 765.5,621.2 764.9,621.1 764.3,621.1 763.7,621.2 763.1,621.2 762.5,621.1 761.9,621.2 761.3,621.2 760.7,621.1 760.1,621.2 759.5,621.2 758.9,621.2 758.3,621.4 757.7,622.0 757.1,622.9 756.5,623.2 755.9,623.8 755.3,625.0 754.7,625.1 754.1,625.5 753.5,625.7 752.9,626.1 752.3,626.5 751.7,626.3 751.1,627.1 750.5,627.8 749.9,627.1 749.3,627.1 748.7,628.0 748.1,628.2 747.5,627.3 746.9,627.8 746.3,628.1 745.7,627.8 745.1,628.6 744.5,628.8 743.9,628.4 743.3,628.6 742.7,629.1 742.1,628.5 741.5,627.8 740.9,628.7 740.3,627.5 739.7,627.8 739.1,627.8 738.5,627.2 737.9,627.3 737.3,626.7 736.7,626.3 736.1,625.7 735.5,624.0 734.9,622.7 734.3,621.4 733.7,621.4 733.1,621.4 732.5,621.5 731.9,621.5 731.3,621.3 730.7,621.4 730.1,621.3 729.5,621.8 728.9,623.3 728.3,624.5 727.7,624.6 727.1,625.4 726.5,625.4 725.9,625.8 725.3,626.8 724.7,626.5 724.1,626.2 723.5,626.7 722.9,626.6 722.3,626.8 721.7,626.5 721.1,626.7 720.5,626.4 719.9,626.3 719.3,626.0 718.7,625.8 718.1,625.5 717.5,625.7 716.9,626.1 716.3,626.2 715.7,626.6 715.1,626.6 714.5,625.9 713.9,626.6 713.3,625.6 712.7,625.1 712.1,624.5 711.5,623.8 710.9,622.3 710.3,621.2 709.7,621.2 709.1,621.2 708.5,621.2 707.9,621.2 707.3,621.2 706.7,621.2 706.1,621.1 705.5,621.1 704.9,621.6 704.3,622.1 703.7,622.6 703.1,623.0 702.5,623.7 701.9,624.4 701.3,624.7 700.7,625.3 700.1,626.0 699.5,626.5 698.9,625.9 698.3,624.5 697.7,623.9 697.1,622.9 696.5,621.9 695.9,621.1 695.3,621.0 694.7,621.1 694.1,621.1 693.5,621.0 692.9,621.1 692.3,621.1 691.7,621.1 691.1,621.1 690.5,621.0 689.9,621.1 689.3,621.1 688.7,621.1 688.1,621.1 687.5,621.0 686.9,621.1 686.3,621.1 685.7,621.1 685.1,621.1 684.5,621.1 683.9,621.1 683.3,621.1 682.7,621.1 682.1,621.1 681.5,621.1 680.9,621.3 680.3,621.6 679.7,621.9 679.1,622.1 678.5,622.3 677.9,622.6 677.3,622.7 676.7,622.9 676.1,623.0 675.5,623.3 674.9,623.4 674.3,623.6 673.7,623.9 673.1,623.6 672.5,624.1 671.9,624.4 671.3,624.4 670.7,624.1 670.1,624.1 669.5,624.1 668.9,624.6 668.3,624.8 667.7,625.0 667.1,624.6 666.5,624.7 665.9,624.6 665.3,624.5 664.7,624.8 664.1,624.6 663.5,624.5 662.9,624.7 662.3,624.9 661.7,624.7 661.1,624.1 660.5,624.1 659.9,623.8 659.3,623.6 658.7,623.5 658.1,623.3 657.5,623.4 656.9,622.8 656.3,622.7 655.7,622.1 655.1,622.0 654.5,621.6 653.9,621.5 653.3,621.5 652.7,621.6 652.1,622.0 651.5,622.7 650.9,623.4 650.3,623.9 649.7,623.6 649.1,623.9 648.5,624.4 647.9,624.3 647.3,624.2 646.7,624.1 646.1,623.7 645.5,623.6 644.9,622.9 644.3,622.2 643.7,621.7 643.1,621.7 642.5,621.5 641.9,621.6 641.3,622.1 640.7,622.7 640.1,623.6 639.5,623.8 638.9,623.9 638.3,624.4 637.7,624.4 637.1,624.2 636.5,624.5 635.9,624.9 635.3,625.0 634.7,625.0 634.1,625.0 633.5,625.3 632.9,625.0 632.3,624.7 631.7,624.9 631.1,625.0 630.5,624.8 629.9,625.2 629.3,624.7 628.7,624.5 628.1,624.3 627.5,624.2 626.9,624.7 626.3,623.9 625.7,623.8 625.1,623.2 624.5,622.5 623.9,621.9 623.3,622.0 622.7,622.1 622.1,622.0 621.5,621.9 620.9,622.2 620.3,623.9 619.7,625.1 619.1,625.9 618.5,626.1 617.9,627.1 617.3,627.9 616.7,627.7 616.1,628.3 615.5,628.0 614.9,628.1 614.3,627.1 613.7,627.2 613.1,627.2 612.5,627.2 611.9,627.9 611.3,627.7 610.7,627.0 610.1,627.3 609.5,628.4 608.9,628.4 608.3,628.9 607.7,629.7 607.1,630.8 606.5,631.9 605.9,631.8 605.3,629.0 604.7,629.9 604.1,631.0 603.5,633.0 602.9,633.5 602.3,632.4 601.7,630.3 601.1,629.3 600.5,630.9 599.9,630.5 599.3,630.1 598.7,630.4 598.1,630.2 597.5,630.8 596.9,628.7 596.3,628.8 595.7,628.2 595.1,629.2 594.5,629.4 593.9,629.9 593.3,629.8 592.7,630.5 592.1,629.2 591.5,628.3 590.9,627.9 590.3,627.3 589.7,627.2 589.1,626.0 588.5,625.1 587.9,624.2 587.3,623.5 586.7,622.6 586.1,621.8 585.5,621.2 584.9,621.2 584.3,621.3 583.7,621.2 583.1,621.2 582.5,621.2 581.9,621.2 581.3,621.2 580.7,621.3 580.1,621.3 579.5,621.4 578.9,621.3 578.3,621.3 577.7,621.3 577.1,621.4 576.5,621.3 575.9,621.4 575.3,621.6 574.7,622.0 574.1,622.2 573.5,622.2 572.9,622.5 572.3,622.8 571.7,623.2 571.1,623.2 570.5,623.7 569.9,623.7 569.3,623.7 568.7,624.1 568.1,623.9 567.5,623.8 566.9,624.3 566.3,624.4 565.7,624.1 565.1,624.0 564.5,624.3 563.9,624.2 563.3,624.4 562.7,624.0 562.1,623.7 561.5,623.5 560.9,623.1 560.3,623.0 559.7,622.7 559.1,622.5 558.5,622.3 557.9,622.0 557.3,621.7 556.7,621.4 556.1,621.6 555.5,621.6 554.9,621.7 554.3,622.1 553.7,621.9 553.1,622.1 552.5,623.5 551.9,625.1 551.3,626.5 550.7,626.8 550.1,627.3 549.5,627.7 548.9,628.0 548.3,628.1 547.7,626.9 547.1,628.5 546.5,627.5 545.9,627.6 545.3,626.9 544.7,627.8 544.1,627.5 543.5,628.1 542.9,627.4 542.3,627.8 541.7,627.6 541.1,628.5 540.5,627.8 539.9,627.3 539.3,627.2 538.7,626.6 538.1,626.5 537.5,627.8 536.9,627.2 536.3,626.8 535.7,627.5 535.1,628.2 534.5,628.1 533.9,628.9 533.3,628.3 532.7,628.5 532.1,628.0 531.5,627.8 530.9,627.6 530.3,627.7 529.7,627.2 529.1,625.5 528.5,624.8 527.9,623.4 527.3,622.4 526.7,621.9 526.1,622.0 525.5,621.8 524.9,622.0 524.3,622.0 523.7,622.2 523.1,622.0 522.5,622.2 521.9,622.2 521.3,622.4 520.7,622.3 520.1,622.3 519.5,622.8 518.9,623.3 518.3,623.7 517.7,623.4 517.1,623.4 516.5,622.7 515.9,622.5 515.3,622.3 514.7,622.0 514.1,621.5 513.5,621.7 512.9,621.6 512.3,621.6 511.7,621.6 511.1,621.6 510.5,621.7 509.9,622.9 509.3,624.1 508.7,625.9 508.1,628.0 507.5,630.0 506.9,634.9 506.3,634.2 505.7,631.4 505.1,629.9 504.5,627.4 503.9,624.9 503.3,622.7 502.7,621.6 502.1,621.5 501.5,621.4 500.9,621.4 500.3,622.2 499.7,622.8 499.1,623.5 498.5,623.7 497.9,624.4 497.3,624.1 496.7,624.3 496.1,624.8 495.5,624.6 494.9,624.5 494.3,624.5 493.7,624.7 493.1,624.3 492.5,624.5 491.9,623.7 491.3,623.5 490.7,622.5 490.1,621.8 489.5,621.8 488.9,621.7 488.3,621.7 487.7,621.9 487.1,622.6 486.5,623.2 485.9,623.8 485.3,623.5 484.7,624.4 484.1,624.4 483.5,624.2 482.9,625.1 482.3,624.6 481.7,624.7 481.1,624.7 480.5,624.3 479.9,624.0 479.3,624.1 478.7,623.6 478.1,622.5 477.5,621.6 476.9,621.6 476.3,621.6 475.7,621.7 475.1,621.7 474.5,621.6 473.9,622.1 473.3,622.6 472.7,624.2 472.1,626.0 471.5,623.0 470.9,622.8 470.3,623.1 469.7,623.7 469.1,624.2 468.5,624.5 467.9,624.0 467.3,624.3 466.7,624.7 466.1,624.7 465.5,624.1 464.9,623.9 464.3,623.3 463.7,623.4 463.1,622.8 462.5,622.7 461.9,624.5 461.3,625.7 460.7,626.7 460.1,629.3 459.5,630.0 458.9,631.5 458.3,633.0 457.7,632.1 457.1,631.2 456.5,629.1 455.9,628.9 455.3,628.1 454.7,626.7 454.1,625.3 453.5,625.7 452.9,626.1 452.3,625.9 451.7,625.9 451.1,626.5 450.5,626.2 449.9,625.6 449.3,625.5 448.7,626.2 448.1,625.9 447.5,625.4 446.9,624.0 446.3,623.5 445.7,624.2 445.1,624.5 444.5,625.4 443.9,625.4 443.3,626.3 442.7,626.0 442.1,626.3 441.5,626.3 440.9,627.0 440.3,626.7 439.7,627.0 439.1,626.4 438.5,626.9 437.9,626.0 437.3,626.3 436.7,625.7 436.1,626.0 435.5,625.7 434.9,626.0 434.3,626.8 433.7,626.6 433.1,626.8 432.5,627.1 431.9,625.9 431.3,624.3 430.7,623.4 430.1,623.5 429.5,623.2 428.9,623.2 428.3,622.9 427.7,622.7 427.1,622.9 426.5,622.7 425.9,622.5 425.3,622.6 424.7,623.1 424.1,623.1 423.5,623.7 422.9,623.8 422.3,624.4 421.7,625.3 421.1,626.0 420.5,627.3 419.9,625.7 419.3,624.1 418.7,622.8 418.1,622.8 417.5,622.7 416.9,622.7 416.3,623.2 415.7,624.4 415.1,626.1 414.5,626.9 413.9,625.6 413.3,626.6 412.7,626.5 412.1,626.2 411.5,626.7 410.9,626.4 410.3,627.2 409.7,626.4 409.1,627.3 408.5,627.1 407.9,626.6 407.3,626.5 406.7,626.5 406.1,625.8 405.5,624.9 404.9,624.6 404.3,623.7 403.7,623.8 403.1,623.9 402.5,623.7 401.9,623.4 401.3,624.2 400.7,624.0 400.1,624.4 399.5,624.7 398.9,625.2 398.3,626.3 397.7,626.5 397.1,626.9 396.5,629.3 395.9,630.4 395.3,631.6 394.7,629.6 394.1,627.1 393.5,622.6 392.9,622.1 392.3,621.5 391.7,621.1 391.1,621.0 390.5,621.1 389.9,621.1 389.3,621.1 388.7,621.0 388.1,621.1 387.5,621.1 386.9,621.0 386.3,621.0 385.7,621.1 385.1,621.0 384.5,621.1 383.9,621.0 383.3,621.1 382.7,621.1 382.1,621.0 381.5,621.1 380.9,621.1 380.3,621.1 379.7,621.1 379.1,621.1 378.5,621.1 377.9,621.1 377.3,621.1 376.7,621.1 376.1,621.1 375.5,621.1 374.9,621.1 374.3,621.1 373.7,621.1 373.1,621.1 372.5,621.1 371.9,621.1 371.3,621.1 370.7,621.1 370.1,621.1 369.5,621.1 368.9,621.0 368.3,621.1 367.7,621.1 367.1,621.1 366.5,621.1 365.9,621.2 365.3,621.7 364.7,621.9 364.1,622.4 363.5,622.8 362.9,623.4 362.3,623.6 361.7,624.0 361.1,624.0 360.5,624.5 359.9,624.7 359.3,624.5 358.7,624.5 358.1,625.6 357.5,625.2 356.9,625.4 356.3,625.2 355.7,625.4 355.1,625.5 354.5,625.3 353.9,625.1 353.3,625.2 352.7,624.4 352.1,624.2 351.5,624.3 350.9,624.0 350.3,624.4 349.7,624.5 349.1,624.8 348.5,624.7 347.9,624.7 347.3,625.3 346.7,625.0 346.1,625.4 345.5,624.5 344.9,624.7 344.3,624.9 343.7,624.6 343.1,624.3 342.5,623.8 341.9,623.0 341.3,622.2 340.7,621.7 340.1,621.6 339.5,621.8 338.9,621.6 338.3,621.7 337.7,622.6 337.1,623.7 336.5,623.6 335.9,624.9 335.3,624.9 334.7,624.6 334.1,625.1 333.5,625.0 332.9,625.0 332.3,625.0 331.7,625.4 331.1,625.1 330.5,625.4 329.9,625.3 329.3,625.5 328.7,625.0 328.1,624.8 327.5,624.9 326.9,625.2 326.3,625.5 325.7,625.2 325.1,625.6 324.5,625.3 323.9,625.0 323.3,625.3 322.7,625.0 322.1,625.4 321.5,625.6 320.9,624.9 320.3,625.1 319.7,625.3 319.1,625.3 318.5,625.3 317.9,624.6 317.3,624.8 316.7,624.0 316.1,624.4 315.5,623.8 314.9,624.0 314.3,623.4 313.7,623.0 313.1,623.6 312.5,623.8 311.9,624.1 311.3,623.9 310.7,623.9 310.1,623.0 309.5,622.5 308.9,621.8 308.3,621.5 307.7,621.3 307.1,621.3 306.5,621.2 305.9,621.2 305.3,621.5 304.7,621.7 304.1,622.0 303.5,622.2 302.9,622.4 302.3,622.7 301.7,622.8 301.1,622.7 300.5,623.4 299.9,623.5 299.3,623.6 298.7,623.5 298.1,623.8 297.5,624.0 296.9,624.7 296.3,624.5 295.7,624.5 295.1,624.5 294.5,624.7 293.9,624.6 293.3,624.9 292.7,624.7 292.1,625.4 291.5,625.0 290.9,624.8 290.3,625.2 289.7,625.0 289.1,625.4 288.5,625.5 287.9,625.2 287.3,625.9 286.7,625.5 286.1,626.2 285.5,625.6 284.9,626.4 284.3,625.9 283.7,626.0 283.1,625.2 282.5,625.0 281.9,625.0 281.3,624.6 280.7,624.6 280.1,625.2 279.5,625.0 278.9,625.8 278.3,625.8 277.7,626.0 277.1,626.6 276.5,626.3 275.9,626.6 275.3,625.6 274.7,626.0 274.1,625.8 273.5,625.7 272.9,625.4 272.3,623.7 271.7,622.0 271.1,622.1 270.5,622.3 269.9,622.1 269.3,622.1 268.7,622.1 268.1,622.2 267.5,622.6 266.9,623.2 266.3,623.5 265.7,624.3 265.1,625.6 264.5,627.0 263.9,628.5 263.3,626.7 262.7,625.7 262.1,624.9 261.5,625.5 260.9,627.1 260.3,626.4 259.7,622.7 259.1,621.6 258.5,621.6 257.9,621.6 257.3,621.7 256.7,621.7 256.1,622.5 255.5,624.6 254.9,625.5 254.3,625.9 253.7,626.9 253.1,627.2 252.5,627.1 251.9,628.1 251.3,628.0 250.7,627.9 250.1,627.2 249.5,626.8 248.9,626.5 248.3,627.3 247.7,627.9 247.1,628.0 246.5,629.0 245.9,629.0 245.3,627.9 244.7,627.3 244.1,626.8 243.5,626.9 242.9,626.9 242.3,627.2 241.7,627.8 241.1,627.2 240.5,628.2 239.9,627.8 239.3,627.5 238.7,628.0 238.1,627.7 237.5,628.2 236.9,627.1 236.3,625.4 235.7,623.8 235.1,622.4 234.5,622.3 233.9,622.3 233.3,622.7 232.7,624.2 232.1,625.6 231.5,625.9 230.9,625.7 230.3,625.5 229.7,626.2 229.1,625.9 228.5,626.5 227.9,625.9 227.3,626.2 226.7,626.6 226.1,626.8 225.5,627.2 224.9,626.7 224.3,626.6 223.7,626.1 223.1,626.2 222.5,627.1 221.9,626.1 221.3,627.1 220.7,626.7 220.1,625.9 219.5,626.3 218.9,625.3 218.3,625.8 217.7,625.2 217.1,626.3 216.5,625.5 215.9,626.2 215.3,625.7 214.7,625.8 214.1,625.4 213.5,625.7 212.9,626.0 212.3,626.2 211.7,626.0 211.1,626.4 210.5,626.0 209.9,625.5 209.3,625.1 208.7,625.0 208.1,624.7 207.5,624.8 206.9,624.2 206.3,624.1 205.7,623.2 205.1,623.1 204.5,622.4 203.9,622.0 203.3,622.1 202.7,622.4 202.1,622.6 201.5,623.0 200.9,623.0 200.3,622.7 199.7,622.6 199.1,622.7 198.5,622.7 197.9,622.6 197.3,622.0 196.7,621.4 196.1,621.1 195.5,621.1 194.9,621.1 194.3,621.0 193.7,621.1 193.1,621.1 192.5,621.1 191.9,621.1 191.3,621.1 190.7,621.1 190.1,621.0 189.5,621.1 188.9,621.1 188.3,621.0 187.7,621.0 187.1,621.1 186.5,621.1 185.9,621.1 185.3,621.0 184.7,621.1 184.1,621.1 183.5,621.1 182.9,621.1 182.3,621.1 181.7,621.1 181.1,621.0 180.5,621.0 179.9,621.1 179.3,621.1 178.7,621.1 178.1,621.1 177.5,621.1 176.9,621.1 176.3,621.3 175.7,621.6 175.1,621.7 174.5,622.0 173.9,622.2 173.3,622.5 172.7,622.8 172.1,623.0 171.5,623.2 170.9,624.1 170.3,623.7 169.7,624.1 169.1,624.6 168.5,624.9 167.9,625.2 167.3,625.0 166.7,625.5 166.1,625.8 165.5,625.7 164.9,626.4 164.3,626.5 163.7,627.0 163.1,626.8 162.5,626.7 161.9,627.2 161.3,626.5 160.7,626.8 160.1,626.9 159.5,627.0 158.9,626.9 158.3,626.4 157.7,626.4 157.1,626.3 156.5,626.1 155.9,625.8 155.3,626.1 154.7,625.8 154.1,625.7 153.5,625.5 152.9,625.3 152.3,625.1 151.7,624.6 151.1,624.8 150.5,624.1 149.9,622.7 149.3,621.7 148.7,621.2 148.1,621.2 147.5,621.3 146.9,621.4 146.3,621.4 145.7,621.5 145.1,621.4 144.5,621.6 143.9,622.4 143.3,623.2 142.7,625.1 142.1,625.1 141.5,625.7 140.9,626.4 140.3,626.2 139.7,626.1 139.1,626.1 138.5,626.2 137.9,625.9 137.3,626.6 136.7,626.2 136.1,625.3 135.5,625.1 134.9,625.1 134.3,625.3 133.7,624.9 133.1,625.7 132.5,625.2 131.9,625.6 131.3,625.7 130.7,625.6 130.1,626.4 129.5,625.1 128.9,625.1 128.3,625.2 127.7,624.7 127.1,625.1 126.5,623.7 125.9,621.9 125.3,621.3 124.7,621.2 124.1,621.2 123.5,621.2 122.9,621.5 122.3,622.0 121.7,622.3 121.1,622.6 120.5,623.0 119.9,623.2 119.3,623.7 118.7,624.6 118.1,624.8 117.5,624.5 116.9,625.0 116.3,625.1 115.7,625.2 115.1,625.4 114.5,625.8 113.9,624.7 113.3,624.2 112.7,623.0 112.1,621.3 111.5,621.1 110.9,621.1 110.3,621.1 109.7,621.0 109.1,621.1 108.5,621.0 107.9,621.0 107.3,621.0 106.7,621.0 106.1,621.1 105.5,621.0 104.9,621.0 104.3,621.0 103.7,621.1 103.1,621.0 102.5,621.1 101.9,621.0 101.3,621.0 100.7,621.0 100.1,621.0 99.5,621.0 98.9,621.1 98.3,621.0 97.7,621.1 97.1,621.1 96.5,621.0 95.9,621.0 95.3,621.0 94.7,621.1 94.1,621.1 93.5,621.0 92.9,621.0 92.3,621.1 91.7,621.0 91.1,621.1 90.5,621.1 89.9,621.1 89.3,621.1" fill="#5c5a6a" clip-path="url(#cr)"/>
<polygon points="89.3,620.2 89.9,620.1 90.5,620.1 91.1,620.2 91.7,620.1 92.3,620.1 92.9,620.2 93.5,620.1 94.1,620.1 94.7,620.1 95.3,620.2 95.9,620.2 96.5,620.2 97.1,620.1 97.7,620.1 98.3,620.2 98.9,620.1 99.5,620.1 100.1,620.1 100.7,620.1 101.3,620.2 101.9,620.2 102.5,620.1 103.1,620.2 103.7,620.2 104.3,620.2 104.9,620.2 105.5,620.2 106.1,620.2 106.7,620.1 107.3,620.1 107.9,620.1 108.5,620.2 109.1,620.1 109.7,620.2 110.3,620.2 110.9,620.1 111.5,620.1 112.1,619.9 112.7,618.3 113.3,617.1 113.9,616.4 114.5,615.7 115.1,616.0 115.7,615.8 116.3,616.2 116.9,616.1 117.5,616.5 118.1,616.4 118.7,616.9 119.3,617.6 119.9,617.9 120.5,618.0 121.1,618.5 121.7,618.8 122.3,619.3 122.9,619.7 123.5,620.0 124.1,620.0 124.7,620.0 125.3,619.9 125.9,619.3 126.5,617.4 127.1,615.9 127.7,616.1 128.3,615.9 128.9,615.9 129.5,615.7 130.1,615.1 130.7,615.4 131.3,615.2 131.9,615.5 132.5,615.9 133.1,615.9 133.7,616.5 134.3,616.2 134.9,616.2 135.5,615.8 136.1,615.7 136.7,615.4 137.3,614.8 137.9,615.0 138.5,615.3 139.1,615.0 139.7,615.4 140.3,615.4 140.9,615.1 141.5,615.3 142.1,615.8 142.7,616.4 143.3,617.8 143.9,618.8 144.5,619.6 145.1,619.7 145.7,619.7 146.3,619.8 146.9,619.9 147.5,619.9 148.1,619.9 148.7,620.0 149.3,619.5 149.9,618.5 150.5,617.3 151.1,616.6 151.7,616.4 152.3,616.0 152.9,616.2 153.5,616.0 154.1,615.4 154.7,615.3 155.3,615.5 155.9,615.3 156.5,614.9 157.1,614.6 157.7,615.0 158.3,614.4 158.9,614.3 159.5,614.4 160.1,614.5 160.7,614.6 161.3,614.6 161.9,613.8 162.5,614.2 163.1,614.0 163.7,614.6 164.3,614.4 164.9,614.8 165.5,615.3 166.1,615.6 166.7,615.5 167.3,616.1 167.9,616.2 168.5,616.3 169.1,616.5 169.7,616.9 170.3,617.3 170.9,617.3 171.5,617.9 172.1,618.2 172.7,618.4 173.3,618.7 173.9,619.0 174.5,619.2 175.1,619.4 175.7,619.6 176.3,619.9 176.9,620.1 177.5,620.1 178.1,620.1 178.7,620.1 179.3,620.1 179.9,620.1 180.5,620.1 181.1,620.1 181.7,620.1 182.3,620.1 182.9,620.1 183.5,620.1 184.1,620.1 184.7,620.1 185.3,620.1 185.9,620.1 186.5,620.1 187.1,620.1 187.7,620.2 188.3,620.1 188.9,620.1 189.5,620.1 190.1,620.1 190.7,620.1 191.3,620.1 191.9,620.1 192.5,620.1 193.1,620.1 193.7,620.1 194.3,620.1 194.9,620.2 195.5,620.1 196.1,620.1 196.7,619.9 197.3,619.3 197.9,618.7 198.5,618.5 199.1,618.5 199.7,618.5 200.3,618.3 200.9,618.2 201.5,618.4 202.1,618.6 202.7,618.8 203.3,618.9 203.9,619.2 204.5,618.8 205.1,618.2 205.7,617.9 206.3,617.1 206.9,616.9 207.5,616.4 208.1,616.3 208.7,616.2 209.3,615.8 209.9,615.7 210.5,615.5 211.1,615.1 211.7,615.3 212.3,615.4 212.9,615.3 213.5,615.1 214.1,615.5 214.7,615.5 215.3,615.1 215.9,615.3 216.5,615.5 217.1,615.3 217.7,615.7 218.3,615.4 218.9,615.6 219.5,615.3 220.1,614.9 220.7,614.6 221.3,614.5 221.9,614.7 222.5,614.6 223.1,614.8 223.7,614.9 224.3,614.7 224.9,614.5 225.5,614.5 226.1,614.6 226.7,614.4 227.3,614.9 227.9,615.0 228.5,614.9 229.1,615.2 229.7,615.3 230.3,615.3 230.9,615.3 231.5,615.5 232.1,615.9 232.7,617.1 233.3,618.5 233.9,619.0 234.5,618.9 235.1,618.8 235.7,617.5 236.3,616.1 236.9,613.7 237.5,613.4 238.1,613.5 238.7,612.9 239.3,613.4 239.9,613.2 240.5,613.0 241.1,613.6 241.7,613.1 242.3,613.8 242.9,614.0 243.5,614.3 244.1,613.9 244.7,613.6 245.3,613.0 245.9,612.5 246.5,612.7 247.1,612.9 247.7,613.6 248.3,614.4 248.9,614.6 249.5,614.6 250.1,614.4 250.7,613.8 251.3,613.3 251.9,613.4 252.5,613.7 253.1,614.1 253.7,614.4 254.3,615.0 254.9,615.4 255.5,616.8 256.1,618.6 256.7,619.6 257.3,619.6 257.9,619.6 258.5,619.5 259.1,619.6 259.7,618.5 260.3,614.8 260.9,614.3 261.5,615.4 262.1,616.5 262.7,615.3 263.3,614.0 263.9,613.0 264.5,613.9 265.1,615.6 265.7,616.9 266.3,617.9 266.9,618.2 267.5,618.7 268.1,619.1 268.7,619.1 269.3,619.2 269.9,619.0 270.5,619.0 271.1,619.0 271.7,619.1 272.3,617.5 272.9,616.0 273.5,615.2 274.1,615.2 274.7,615.4 275.3,615.4 275.9,615.1 276.5,614.9 277.1,614.7 277.7,615.1 278.3,615.7 278.9,615.5 279.5,616.2 280.1,616.0 280.7,616.6 281.3,616.5 281.9,616.0 282.5,616.1 283.1,615.8 283.7,615.2 284.3,615.0 284.9,615.0 285.5,615.2 286.1,615.2 286.7,615.6 287.3,615.4 287.9,616.0 288.5,616.0 289.1,615.9 289.7,616.1 290.3,615.9 290.9,616.0 291.5,616.1 292.1,616.0 292.7,616.3 293.3,616.5 293.9,616.6 294.5,616.5 295.1,616.5 295.7,616.9 296.3,616.8 296.9,616.8 297.5,617.1 298.1,617.2 298.7,617.5 299.3,617.6 299.9,617.8 300.5,618.0 301.1,618.3 301.7,618.3 302.3,618.6 302.9,618.8 303.5,618.9 304.1,619.2 304.7,619.5 305.3,619.7 305.9,620.0 306.5,620.0 307.1,619.9 307.7,619.8 308.3,619.8 308.9,619.5 309.5,618.8 310.1,618.2 310.7,617.4 311.3,617.0 311.9,617.1 312.5,617.5 313.1,617.8 313.7,618.0 314.3,617.8 314.9,617.4 315.5,617.4 316.1,616.9 316.7,616.9 317.3,616.6 317.9,616.3 318.5,616.0 319.1,616.1 319.7,616.1 320.3,615.9 320.9,616.2 321.5,615.8 322.1,616.1 322.7,615.9 323.3,616.0 323.9,616.0 324.5,615.8 325.1,615.8 325.7,615.9 326.3,615.9 326.9,615.8 327.5,616.1 328.1,616.1 328.7,615.8 329.3,615.9 329.9,615.9 330.5,615.8 331.1,616.0 331.7,615.9 332.3,616.3 332.9,616.1 333.5,616.1 334.1,616.2 334.7,616.5 335.3,616.6 335.9,616.4 336.5,617.3 337.1,617.8 337.7,618.5 338.3,619.4 338.9,619.6 339.5,619.5 340.1,619.5 340.7,619.5 341.3,618.9 341.9,618.2 342.5,617.2 343.1,616.8 343.7,616.5 344.3,616.3 344.9,616.6 345.5,616.4 346.1,616.0 346.7,615.8 347.3,615.8 347.9,616.4 348.5,616.4 349.1,616.4 349.7,616.7 350.3,616.7 350.9,617.1 351.5,617.0 352.1,616.9 352.7,616.7 353.3,616.3 353.9,616.1 354.5,615.9 355.1,616.0 355.7,616.1 356.3,616.1 356.9,615.8 357.5,615.8 358.1,615.9 358.7,616.5 359.3,616.5 359.9,616.2 360.5,616.7 361.1,616.9 361.7,617.4 362.3,617.7 362.9,618.0 363.5,618.3 364.1,618.7 364.7,619.2 365.3,619.6 365.9,620.0 366.5,620.1 367.1,620.1 367.7,620.1 368.3,620.1 368.9,620.1 369.5,620.1 370.1,620.1 370.7,620.1 371.3,620.1 371.9,620.1 372.5,620.1 373.1,620.1 373.7,620.1 374.3,620.1 374.9,620.1 375.5,620.1 376.1,620.1 376.7,620.1 377.3,620.1 377.9,620.1 378.5,620.1 379.1,620.1 379.7,620.1 380.3,620.1 380.9,620.1 381.5,620.1 382.1,620.1 382.7,620.1 383.3,620.1 383.9,620.1 384.5,620.1 385.1,620.2 385.7,620.1 386.3,620.1 386.9,620.2 387.5,620.1 388.1,620.1 388.7,620.1 389.3,620.2 389.9,620.1 390.5,620.1 391.1,620.2 391.7,620.1 392.3,619.7 392.9,619.1 393.5,618.6 394.1,614.4 394.7,611.3 395.3,610.0 395.9,610.9 396.5,612.1 397.1,613.9 397.7,614.3 398.3,615.1 398.9,616.0 399.5,616.2 400.1,616.7 400.7,617.0 401.3,617.3 401.9,617.7 402.5,617.6 403.1,617.3 403.7,617.3 404.3,617.3 404.9,616.9 405.5,616.4 406.1,615.5 406.7,615.0 407.3,614.6 407.9,615.0 408.5,614.6 409.1,614.4 409.7,614.9 410.3,614.2 410.9,614.7 411.5,614.5 412.1,614.8 412.7,614.7 413.3,614.7 413.9,615.2 414.5,614.7 415.1,615.4 415.7,616.7 416.3,618.1 416.9,618.6 417.5,618.5 418.1,618.3 418.7,618.2 419.3,617.3 419.9,615.1 420.5,614.0 421.1,615.2 421.7,616.2 422.3,617.0 422.9,617.3 423.5,617.5 424.1,618.0 424.7,618.3 425.3,618.5 425.9,618.7 426.5,618.4 427.1,618.3 427.7,618.5 428.3,618.2 428.9,618.2 429.5,618.0 430.1,617.6 430.7,617.7 431.3,616.6 431.9,615.3 432.5,614.2 433.1,614.6 433.7,614.5 434.3,614.8 434.9,615.2 435.5,615.7 436.1,615.5 436.7,615.3 437.3,615.2 437.9,615.0 438.5,614.4 439.1,614.5 439.7,614.4 440.3,614.4 440.9,614.7 441.5,614.9 442.1,614.8 442.7,615.1 443.3,615.1 443.9,615.7 444.5,615.9 445.1,616.4 445.7,617.0 446.3,617.6 446.9,617.1 447.5,616.0 448.1,615.4 448.7,615.4 449.3,615.5 449.9,615.5 450.5,615.1 451.1,615.1 451.7,615.0 452.3,615.0 452.9,615.1 453.5,615.6 454.1,615.6 454.7,614.2 455.3,613.3 455.9,612.4 456.5,611.8 457.1,610.2 457.7,608.7 458.3,607.8 458.9,608.8 459.5,611.1 460.1,612.2 460.7,614.1 461.3,615.7 461.9,616.9 462.5,618.6 463.1,618.3 463.7,618.0 464.3,617.7 464.9,617.5 465.5,617.2 466.1,616.7 466.7,616.4 467.3,616.7 467.9,616.9 468.5,616.9 469.1,617.2 469.7,617.4 470.3,617.9 470.9,618.3 471.5,618.2 472.1,614.9 472.7,617.2 473.3,618.8 473.9,619.1 474.5,619.6 475.1,619.6 475.7,619.6 476.3,619.5 476.9,619.6 477.5,619.6 478.1,618.8 478.7,617.4 479.3,617.1 479.9,617.1 480.5,616.7 481.1,616.7 481.7,616.5 482.3,616.6 482.9,616.3 483.5,616.8 484.1,617.0 484.7,617.0 485.3,617.5 485.9,617.6 486.5,618.0 487.1,618.7 487.7,619.3 488.3,619.6 488.9,619.5 489.5,619.4 490.1,619.3 490.7,618.7 491.3,617.9 491.9,617.3 492.5,617.0 493.1,616.8 493.7,616.8 494.3,616.9 494.9,616.6 495.5,616.8 496.1,616.7 496.7,616.9 497.3,616.8 497.9,617.1 498.5,617.5 499.1,617.8 499.7,618.4 500.3,619.1 500.9,619.7 501.5,619.8 502.1,619.7 502.7,619.6 503.3,618.4 503.9,616.2 504.5,613.7 505.1,611.6 505.7,609.7 506.3,607.4 506.9,607.0 507.5,610.6 508.1,613.3 508.7,615.3 509.3,617.2 509.9,618.4 510.5,619.5 511.1,619.6 511.7,619.6 512.3,619.7 512.9,619.6 513.5,619.6 514.1,619.6 514.7,619.3 515.3,618.9 515.9,618.6 516.5,618.5 517.1,618.0 517.7,617.9 518.3,617.4 518.9,617.8 519.5,618.4 520.1,618.9 520.7,618.8 521.3,618.9 521.9,618.9 522.5,619.1 523.1,619.1 523.7,619.1 524.3,619.2 524.9,619.3 525.5,619.3 526.1,619.3 526.7,619.3 527.3,618.8 527.9,617.8 528.5,616.4 529.1,615.3 529.7,613.9 530.3,613.3 530.9,613.1 531.5,613.0 532.1,612.8 532.7,612.9 533.3,612.9 533.9,612.6 534.5,612.7 535.1,613.3 535.7,613.5 536.3,614.0 536.9,613.8 537.5,613.8 538.1,614.5 538.7,614.4 539.3,614.2 539.9,613.8 540.5,613.7 541.1,612.9 541.7,613.5 542.3,613.2 542.9,613.5 543.5,613.2 544.1,613.2 544.7,613.8 545.3,614.0 545.9,613.8 546.5,613.6 547.1,613.2 547.7,613.9 548.3,613.7 548.9,613.5 549.5,613.8 550.1,614.2 550.7,614.3 551.3,614.9 551.9,616.3 552.5,617.8 553.1,619.1 553.7,619.2 554.3,619.2 554.9,619.4 555.5,619.5 556.1,619.6 556.7,619.8 557.3,619.6 557.9,619.1 558.5,618.8 559.1,618.6 559.7,618.3 560.3,618.0 560.9,617.9 561.5,617.8 562.1,617.7 562.7,617.1 563.3,617.1 563.9,617.2 564.5,617.1 565.1,617.1 565.7,617.2 566.3,616.9 566.9,617.0 567.5,617.1 568.1,617.2 568.7,617.2 569.3,617.4 569.9,617.5 570.5,617.7 571.1,617.9 571.7,618.2 572.3,618.4 572.9,618.6 573.5,618.9 574.1,619.0 574.7,619.3 575.3,619.5 575.9,619.7 576.5,619.8 577.1,619.8 577.7,619.9 578.3,619.8 578.9,619.9 579.5,619.8 580.1,619.9 580.7,619.9 581.3,619.9 581.9,619.9 582.5,619.9 583.1,620.0 583.7,620.0 584.3,620.0 584.9,620.0 585.5,620.0 586.1,619.3 586.7,618.7 587.3,617.8 587.9,617.1 588.5,616.0 589.1,615.6 589.7,614.3 590.3,614.0 590.9,613.2 591.5,612.6 592.1,612.4 592.7,611.1 593.3,611.1 593.9,611.1 594.5,611.8 595.1,612.1 595.7,612.4 596.3,612.1 596.9,612.0 597.5,611.1 598.1,611.3 598.7,610.5 599.3,610.3 599.9,610.1 600.5,610.6 601.1,611.2 601.7,611.6 602.3,609.6 602.9,607.5 603.5,608.5 604.1,610.1 604.7,611.5 605.3,611.7 605.9,610.2 606.5,610.0 607.1,610.6 607.7,610.8 608.3,611.8 608.9,612.4 609.5,613.0 610.1,613.8 610.7,613.8 611.3,613.9 611.9,613.7 612.5,614.1 613.1,614.2 613.7,613.9 614.3,614.1 614.9,613.4 615.5,613.5 616.1,613.2 616.7,613.3 617.3,613.1 617.9,614.3 618.5,614.9 619.1,615.5 619.7,616.0 620.3,617.4 620.9,619.0 621.5,619.2 622.1,619.1 622.7,619.2 623.3,619.3 623.9,619.2 624.5,618.7 625.1,618.1 625.7,617.4 626.3,617.1 626.9,616.6 627.5,616.7 628.1,616.6 628.7,616.4 629.3,616.2 629.9,616.1 630.5,616.2 631.1,616.1 631.7,616.1 632.3,616.4 632.9,616.2 633.5,616.1 634.1,616.0 634.7,616.1 635.3,616.3 635.9,616.3 636.5,616.8 637.1,616.8 637.7,617.0 638.3,617.0 638.9,617.4 639.5,617.5 640.1,617.7 640.7,618.4 641.3,619.2 641.9,619.6 642.5,619.6 643.1,619.6 643.7,619.6 644.3,619.0 644.9,618.3 645.5,617.6 646.1,617.5 646.7,617.1 647.3,616.8 647.9,616.8 648.5,616.9 649.1,617.0 649.7,617.5 650.3,617.4 650.9,617.7 651.5,618.4 652.1,619.1 652.7,619.7 653.3,619.7 653.9,619.6 654.5,619.6 655.1,619.2 655.7,618.9 656.3,618.6 656.9,618.4 657.5,617.9 658.1,618.0 658.7,617.6 659.3,617.5 659.9,617.4 660.5,617.2 661.1,617.2 661.7,616.7 662.3,616.6 662.9,616.6 663.5,616.7 664.1,616.8 664.7,616.5 665.3,616.7 665.9,616.3 666.5,616.6 667.1,616.4 667.7,616.3 668.3,616.6 668.9,616.5 669.5,616.9 670.1,617.0 670.7,617.0 671.3,616.7 671.9,616.9 672.5,617.1 673.1,617.3 673.7,617.3 674.3,617.4 674.9,617.7 675.5,617.9 676.1,618.0 676.7,618.4 677.3,618.5 677.9,618.7 678.5,618.9 679.1,619.1 679.7,619.3 680.3,619.6 680.9,619.8 681.5,620.1 682.1,620.1 682.7,620.1 683.3,620.1 683.9,620.1 684.5,620.1 685.1,620.1 685.7,620.1 686.3,620.1 686.9,620.1 687.5,620.1 688.1,620.1 688.7,620.1 689.3,620.1 689.9,620.1 690.5,620.1 691.1,620.1 691.7,620.1 692.3,620.1 692.9,620.1 693.5,620.1 694.1,620.1 694.7,620.1 695.3,620.1 695.9,620.1 696.5,619.4 697.1,618.3 697.7,617.4 698.3,616.4 698.9,614.8 699.5,614.4 700.1,615.1 700.7,615.8 701.3,616.3 701.9,617.0 702.5,617.4 703.1,618.1 703.7,618.6 704.3,619.1 704.9,619.5 705.5,620.0 706.1,620.1 706.7,620.0 707.3,620.0 707.9,620.0 708.5,620.0 709.1,620.0 709.7,620.0 710.3,619.9 710.9,618.8 711.5,617.5 712.1,616.4 712.7,615.7 713.3,615.3 713.9,614.5 714.5,614.9 715.1,614.6 715.7,614.9 716.3,614.8 716.9,615.4 717.5,615.1 718.1,615.6 718.7,615.2 719.3,614.8 719.9,615.3 720.5,615.0 721.1,614.8 721.7,614.6 722.3,614.8 722.9,614.2 723.5,614.4 724.1,614.8 724.7,614.9 725.3,614.8 725.9,615.3 726.5,615.6 727.1,615.5 727.7,616.2 728.3,616.5 728.9,617.8 729.5,619.5 730.1,619.8 730.7,619.8 731.3,619.8 731.9,619.8 732.5,619.8 733.1,619.8 733.7,619.8 734.3,619.8 734.9,618.5 735.5,617.1 736.1,615.3 736.7,614.6 737.3,614.5 737.9,613.6 738.5,613.8 739.1,613.1 739.7,613.7 740.3,613.6 740.9,613.0 741.5,613.2 742.1,612.6 742.7,612.6 743.3,612.7 743.9,613.2 744.5,612.7 745.1,612.4 745.7,612.9 746.3,613.3 746.9,613.3 747.5,613.3 748.1,613.1 748.7,613.7 749.3,613.9 749.9,614.0 750.5,613.9 751.1,614.1 751.7,614.7 752.3,614.7 752.9,614.9 753.5,615.3 754.1,615.8 754.7,616.3 755.3,616.5 755.9,617.2 756.5,617.8 757.1,618.3 757.7,619.2 758.3,619.8 758.9,620.0 759.5,620.0 760.1,620.0 760.7,620.0 761.3,620.0 761.9,620.0 762.5,620.0 763.1,620.0 763.7,620.1 764.3,620.1 764.9,620.0 765.5,620.1 766.1,620.1 766.7,620.1 767.3,620.1 767.9,620.0 768.5,620.0 769.1,620.1 769.7,620.1 770.3,620.1 770.9,620.1 771.5,620.1 772.1,620.1 772.7,620.1 773.3,620.1 773.9,620.1 774.5,620.1 775.1,620.1 775.7,620.1 776.3,620.1 776.9,620.1 777.5,620.1 778.1,620.1 778.7,620.1 779.3,620.1 779.9,620.2 780.5,620.1 781.1,620.0 781.7,619.7 782.3,619.5 782.9,619.1 783.5,618.8 784.1,618.5 784.7,618.2 785.3,618.1 785.9,617.7 786.5,617.6 787.1,617.1 787.7,616.9 788.3,616.9 788.3,624.4 787.7,624.4 787.1,624.1 786.5,623.8 785.9,623.3 785.3,623.0 784.7,622.8 784.1,622.7 783.5,622.4 782.9,622.0 782.3,621.7 781.7,621.5 781.1,621.1 780.5,621.1 779.9,621.0 779.3,621.1 778.7,621.1 778.1,621.1 777.5,621.1 776.9,621.1 776.3,621.0 775.7,621.1 775.1,621.1 774.5,621.1 773.9,621.1 773.3,621.1 772.7,621.1 772.1,621.1 771.5,621.1 770.9,621.1 770.3,621.1 769.7,621.1 769.1,621.1 768.5,621.2 767.9,621.1 767.3,621.1 766.7,621.1 766.1,621.1 765.5,621.2 764.9,621.1 764.3,621.1 763.7,621.2 763.1,621.2 762.5,621.1 761.9,621.2 761.3,621.2 760.7,621.1 760.1,621.2 759.5,621.2 758.9,621.2 758.3,621.4 757.7,622.0 757.1,622.9 756.5,623.2 755.9,623.8 755.3,625.0 754.7,625.1 754.1,625.5 753.5,625.7 752.9,626.1 752.3,626.5 751.7,626.3 751.1,627.1 750.5,627.8 749.9,627.1 749.3,627.1 748.7,628.0 748.1,628.2 747.5,627.3 746.9,627.8 746.3,628.1 745.7,627.8 745.1,628.6 744.5,628.8 743.9,628.4 743.3,628.6 742.7,629.1 742.1,628.5 741.5,627.8 740.9,628.7 740.3,627.5 739.7,627.8 739.1,627.8 738.5,627.2 737.9,627.3 737.3,626.7 736.7,626.3 736.1,625.7 735.5,624.0 734.9,622.7 734.3,621.4 733.7,621.4 733.1,621.4 732.5,621.5 731.9,621.5 731.3,621.3 730.7,621.4 730.1,621.3 729.5,621.8 728.9,623.3 728.3,624.5 727.7,624.6 727.1,625.4 726.5,625.4 725.9,625.8 725.3,626.8 724.7,626.5 724.1,626.2 723.5,626.7 722.9,626.6 722.3,626.8 721.7,626.5 721.1,626.7 720.5,626.4 719.9,626.3 719.3,626.0 718.7,625.8 718.1,625.5 717.5,625.7 716.9,626.1 716.3,626.2 715.7,626.6 715.1,626.6 714.5,625.9 713.9,626.6 713.3,625.6 712.7,625.1 712.1,624.5 711.5,623.8 710.9,622.3 710.3,621.2 709.7,621.2 709.1,621.2 708.5,621.2 707.9,621.2 707.3,621.2 706.7,621.2 706.1,621.1 705.5,621.1 704.9,621.6 704.3,622.1 703.7,622.6 703.1,623.0 702.5,623.7 701.9,624.4 701.3,624.7 700.7,625.3 700.1,626.0 699.5,626.5 698.9,625.9 698.3,624.5 697.7,623.9 697.1,622.9 696.5,621.9 695.9,621.1 695.3,621.0 694.7,621.1 694.1,621.1 693.5,621.0 692.9,621.1 692.3,621.1 691.7,621.1 691.1,621.1 690.5,621.0 689.9,621.1 689.3,621.1 688.7,621.1 688.1,621.1 687.5,621.0 686.9,621.1 686.3,621.1 685.7,621.1 685.1,621.1 684.5,621.1 683.9,621.1 683.3,621.1 682.7,621.1 682.1,621.1 681.5,621.1 680.9,621.3 680.3,621.6 679.7,621.9 679.1,622.1 678.5,622.3 677.9,622.6 677.3,622.7 676.7,622.9 676.1,623.0 675.5,623.3 674.9,623.4 674.3,623.6 673.7,623.9 673.1,623.6 672.5,624.1 671.9,624.4 671.3,624.4 670.7,624.1 670.1,624.1 669.5,624.1 668.9,624.6 668.3,624.8 667.7,625.0 667.1,624.6 666.5,624.7 665.9,624.6 665.3,624.5 664.7,624.8 664.1,624.6 663.5,624.5 662.9,624.7 662.3,624.9 661.7,624.7 661.1,624.1 660.5,624.1 659.9,623.8 659.3,623.6 658.7,623.5 658.1,623.3 657.5,623.4 656.9,622.8 656.3,622.7 655.7,622.1 655.1,622.0 654.5,621.6 653.9,621.5 653.3,621.5 652.7,621.6 652.1,622.0 651.5,622.7 650.9,623.4 650.3,623.9 649.7,623.6 649.1,623.9 648.5,624.4 647.9,624.3 647.3,624.2 646.7,624.1 646.1,623.7 645.5,623.6 644.9,622.9 644.3,622.2 643.7,621.7 643.1,621.7 642.5,621.5 641.9,621.6 641.3,622.1 640.7,622.7 640.1,623.6 639.5,623.8 638.9,623.9 638.3,624.4 637.7,624.4 637.1,624.2 636.5,624.5 635.9,624.9 635.3,625.0 634.7,625.0 634.1,625.0 633.5,625.3 632.9,625.0 632.3,624.7 631.7,624.9 631.1,625.0 630.5,624.8 629.9,625.2 629.3,624.7 628.7,624.5 628.1,624.3 627.5,624.2 626.9,624.7 626.3,623.9 625.7,623.8 625.1,623.2 624.5,622.5 623.9,621.9 623.3,622.0 622.7,622.1 622.1,622.0 621.5,621.9 620.9,622.2 620.3,623.9 619.7,625.1 619.1,625.9 618.5,626.1 617.9,627.1 617.3,627.9 616.7,627.7 616.1,628.3 615.5,628.0 614.9,628.1 614.3,627.1 613.7,627.2 613.1,627.2 612.5,627.2 611.9,627.9 611.3,627.7 610.7,627.0 610.1,627.3 609.5,628.4 608.9,628.4 608.3,628.9 607.7,629.7 607.1,630.8 606.5,631.9 605.9,631.8 605.3,629.0 604.7,629.9 604.1,631.0 603.5,633.0 602.9,633.5 602.3,632.4 601.7,630.3 601.1,629.3 600.5,630.9 599.9,630.5 599.3,630.1 598.7,630.4 598.1,630.2 597.5,630.8 596.9,628.7 596.3,628.8 595.7,628.2 595.1,629.2 594.5,629.4 593.9,629.9 593.3,629.8 592.7,630.5 592.1,629.2 591.5,628.3 590.9,627.9 590.3,627.3 589.7,627.2 589.1,626.0 588.5,625.1 587.9,624.2 587.3,623.5 586.7,622.6 586.1,621.8 585.5,621.2 584.9,621.2 584.3,621.3 583.7,621.2 583.1,621.2 582.5,621.2 581.9,621.2 581.3,621.2 580.7,621.3 580.1,621.3 579.5,621.4 578.9,621.3 578.3,621.3 577.7,621.3 577.1,621.4 576.5,621.3 575.9,621.4 575.3,621.6 574.7,622.0 574.1,622.2 573.5,622.2 572.9,622.5 572.3,622.8 571.7,623.2 571.1,623.2 570.5,623.7 569.9,623.7 569.3,623.7 568.7,624.1 568.1,623.9 567.5,623.8 566.9,624.3 566.3,624.4 565.7,624.1 565.1,624.0 564.5,624.3 563.9,624.2 563.3,624.4 562.7,624.0 562.1,623.7 561.5,623.5 560.9,623.1 560.3,623.0 559.7,622.7 559.1,622.5 558.5,622.3 557.9,622.0 557.3,621.7 556.7,621.4 556.1,621.6 555.5,621.6 554.9,621.7 554.3,622.1 553.7,621.9 553.1,622.1 552.5,623.5 551.9,625.1 551.3,626.5 550.7,626.8 550.1,627.3 549.5,627.7 548.9,628.0 548.3,628.1 547.7,626.9 547.1,628.5 546.5,627.5 545.9,627.6 545.3,626.9 544.7,627.8 544.1,627.5 543.5,628.1 542.9,627.4 542.3,627.8 541.7,627.6 541.1,628.5 540.5,627.8 539.9,627.3 539.3,627.2 538.7,626.6 538.1,626.5 537.5,627.8 536.9,627.2 536.3,626.8 535.7,627.5 535.1,628.2 534.5,628.1 533.9,628.9 533.3,628.3 532.7,628.5 532.1,628.0 531.5,627.8 530.9,627.6 530.3,627.7 529.7,627.2 529.1,625.5 528.5,624.8 527.9,623.4 527.3,622.4 526.7,621.9 526.1,622.0 525.5,621.8 524.9,622.0 524.3,622.0 523.7,622.2 523.1,622.0 522.5,622.2 521.9,622.2 521.3,622.4 520.7,622.3 520.1,622.3 519.5,622.8 518.9,623.3 518.3,623.7 517.7,623.4 517.1,623.4 516.5,622.7 515.9,622.5 515.3,622.3 514.7,622.0 514.1,621.5 513.5,621.7 512.9,621.6 512.3,621.6 511.7,621.6 511.1,621.6 510.5,621.7 509.9,622.9 509.3,624.1 508.7,625.9 508.1,628.0 507.5,630.0 506.9,634.9 506.3,634.2 505.7,631.4 505.1,629.9 504.5,627.4 503.9,624.9 503.3,622.7 502.7,621.6 502.1,621.5 501.5,621.4 500.9,621.4 500.3,622.2 499.7,622.8 499.1,623.5 498.5,623.7 497.9,624.4 497.3,624.1 496.7,624.3 496.1,624.8 495.5,624.6 494.9,624.5 494.3,624.5 493.7,624.7 493.1,624.3 492.5,624.5 491.9,623.7 491.3,623.5 490.7,622.5 490.1,621.8 489.5,621.8 488.9,621.7 488.3,621.7 487.7,621.9 487.1,622.6 486.5,623.2 485.9,623.8 485.3,623.5 484.7,624.4 484.1,624.4 483.5,624.2 482.9,625.1 482.3,624.6 481.7,624.7 481.1,624.7 480.5,624.3 479.9,624.0 479.3,624.1 478.7,623.6 478.1,622.5 477.5,621.6 476.9,621.6 476.3,621.6 475.7,621.7 475.1,621.7 474.5,621.6 473.9,622.1 473.3,622.6 472.7,624.2 472.1,626.0 471.5,623.0 470.9,622.8 470.3,623.1 469.7,623.7 469.1,624.2 468.5,624.5 467.9,624.0 467.3,624.3 466.7,624.7 466.1,624.7 465.5,624.1 464.9,623.9 464.3,623.3 463.7,623.4 463.1,622.8 462.5,622.7 461.9,624.5 461.3,625.7 460.7,626.7 460.1,629.3 459.5,630.0 458.9,631.5 458.3,633.0 457.7,632.1 457.1,631.2 456.5,629.1 455.9,628.9 455.3,628.1 454.7,626.7 454.1,625.3 453.5,625.7 452.9,626.1 452.3,625.9 451.7,625.9 451.1,626.5 450.5,626.2 449.9,625.6 449.3,625.5 448.7,626.2 448.1,625.9 447.5,625.4 446.9,624.0 446.3,623.5 445.7,624.2 445.1,624.5 444.5,625.4 443.9,625.4 443.3,626.3 442.7,626.0 442.1,626.3 441.5,626.3 440.9,627.0 440.3,626.7 439.7,627.0 439.1,626.4 438.5,626.9 437.9,626.0 437.3,626.3 436.7,625.7 436.1,626.0 435.5,625.7 434.9,626.0 434.3,626.8 433.7,626.6 433.1,626.8 432.5,627.1 431.9,625.9 431.3,624.3 430.7,623.4 430.1,623.5 429.5,623.2 428.9,623.2 428.3,622.9 427.7,622.7 427.1,622.9 426.5,622.7 425.9,622.5 425.3,622.6 424.7,623.1 424.1,623.1 423.5,623.7 422.9,623.8 422.3,624.4 421.7,625.3 421.1,626.0 420.5,627.3 419.9,625.7 419.3,624.1 418.7,622.8 418.1,622.8 417.5,622.7 416.9,622.7 416.3,623.2 415.7,624.4 415.1,626.1 414.5,626.9 413.9,625.6 413.3,626.6 412.7,626.5 412.1,626.2 411.5,626.7 410.9,626.4 410.3,627.2 409.7,626.4 409.1,627.3 408.5,627.1 407.9,626.6 407.3,626.5 406.7,626.5 406.1,625.8 405.5,624.9 404.9,624.6 404.3,623.7 403.7,623.8 403.1,623.9 402.5,623.7 401.9,623.4 401.3,624.2 400.7,624.0 400.1,624.4 399.5,624.7 398.9,625.2 398.3,626.3 397.7,626.5 397.1,626.9 396.5,629.3 395.9,630.4 395.3,631.6 394.7,629.6 394.1,627.1 393.5,622.6 392.9,622.1 392.3,621.5 391.7,621.1 391.1,621.0 390.5,621.1 389.9,621.1 389.3,621.1 388.7,621.0 388.1,621.1 387.5,621.1 386.9,621.0 386.3,621.0 385.7,621.1 385.1,621.0 384.5,621.1 383.9,621.0 383.3,621.1 382.7,621.1 382.1,621.0 381.5,621.1 380.9,621.1 380.3,621.1 379.7,621.1 379.1,621.1 378.5,621.1 377.9,621.1 377.3,621.1 376.7,621.1 376.1,621.1 375.5,621.1 374.9,621.1 374.3,621.1 373.7,621.1 373.1,621.1 372.5,621.1 371.9,621.1 371.3,621.1 370.7,621.1 370.1,621.1 369.5,621.1 368.9,621.0 368.3,621.1 367.7,621.1 367.1,621.1 366.5,621.1 365.9,621.2 365.3,621.7 364.7,621.9 364.1,622.4 363.5,622.8 362.9,623.4 362.3,623.6 361.7,624.0 361.1,624.0 360.5,624.5 359.9,624.7 359.3,624.5 358.7,624.5 358.1,625.6 357.5,625.2 356.9,625.4 356.3,625.2 355.7,625.4 355.1,625.5 354.5,625.3 353.9,625.1 353.3,625.2 352.7,624.4 352.1,624.2 351.5,624.3 350.9,624.0 350.3,624.4 349.7,624.5 349.1,624.8 348.5,624.7 347.9,624.7 347.3,625.3 346.7,625.0 346.1,625.4 345.5,624.5 344.9,624.7 344.3,624.9 343.7,624.6 343.1,624.3 342.5,623.8 341.9,623.0 341.3,622.2 340.7,621.7 340.1,621.6 339.5,621.8 338.9,621.6 338.3,621.7 337.7,622.6 337.1,623.7 336.5,623.6 335.9,624.9 335.3,624.9 334.7,624.6 334.1,625.1 333.5,625.0 332.9,625.0 332.3,625.0 331.7,625.4 331.1,625.1 330.5,625.4 329.9,625.3 329.3,625.5 328.7,625.0 328.1,624.8 327.5,624.9 326.9,625.2 326.3,625.5 325.7,625.2 325.1,625.6 324.5,625.3 323.9,625.0 323.3,625.3 322.7,625.0 322.1,625.4 321.5,625.6 320.9,624.9 320.3,625.1 319.7,625.3 319.1,625.3 318.5,625.3 317.9,624.6 317.3,624.8 316.7,624.0 316.1,624.4 315.5,623.8 314.9,624.0 314.3,623.4 313.7,623.0 313.1,623.6 312.5,623.8 311.9,624.1 311.3,623.9 310.7,623.9 310.1,623.0 309.5,622.5 308.9,621.8 308.3,621.5 307.7,621.3 307.1,621.3 306.5,621.2 305.9,621.2 305.3,621.5 304.7,621.7 304.1,622.0 303.5,622.2 302.9,622.4 302.3,622.7 301.7,622.8 301.1,622.7 300.5,623.4 299.9,623.5 299.3,623.6 298.7,623.5 298.1,623.8 297.5,624.0 296.9,624.7 296.3,624.5 295.7,624.5 295.1,624.5 294.5,624.7 293.9,624.6 293.3,624.9 292.7,624.7 292.1,625.4 291.5,625.0 290.9,624.8 290.3,625.2 289.7,625.0 289.1,625.4 288.5,625.5 287.9,625.2 287.3,625.9 286.7,625.5 286.1,626.2 285.5,625.6 284.9,626.4 284.3,625.9 283.7,626.0 283.1,625.2 282.5,625.0 281.9,625.0 281.3,624.6 280.7,624.6 280.1,625.2 279.5,625.0 278.9,625.8 278.3,625.8 277.7,626.0 277.1,626.6 276.5,626.3 275.9,626.6 275.3,625.6 274.7,626.0 274.1,625.8 273.5,625.7 272.9,625.4 272.3,623.7 271.7,622.0 271.1,622.1 270.5,622.3 269.9,622.1 269.3,622.1 268.7,622.1 268.1,622.2 267.5,622.6 266.9,623.2 266.3,623.5 265.7,624.3 265.1,625.6 264.5,627.0 263.9,628.5 263.3,626.7 262.7,625.7 262.1,624.9 261.5,625.5 260.9,627.1 260.3,626.4 259.7,622.7 259.1,621.6 258.5,621.6 257.9,621.6 257.3,621.7 256.7,621.7 256.1,622.5 255.5,624.6 254.9,625.5 254.3,625.9 253.7,626.9 253.1,627.2 252.5,627.1 251.9,628.1 251.3,628.0 250.7,627.9 250.1,627.2 249.5,626.8 248.9,626.5 248.3,627.3 247.7,627.9 247.1,628.0 246.5,629.0 245.9,629.0 245.3,627.9 244.7,627.3 244.1,626.8 243.5,626.9 242.9,626.9 242.3,627.2 241.7,627.8 241.1,627.2 240.5,628.2 239.9,627.8 239.3,627.5 238.7,628.0 238.1,627.7 237.5,628.2 236.9,627.1 236.3,625.4 235.7,623.8 235.1,622.4 234.5,622.3 233.9,622.3 233.3,622.7 232.7,624.2 232.1,625.6 231.5,625.9 230.9,625.7 230.3,625.5 229.7,626.2 229.1,625.9 228.5,626.5 227.9,625.9 227.3,626.2 226.7,626.6 226.1,626.8 225.5,627.2 224.9,626.7 224.3,626.6 223.7,626.1 223.1,626.2 222.5,627.1 221.9,626.1 221.3,627.1 220.7,626.7 220.1,625.9 219.5,626.3 218.9,625.3 218.3,625.8 217.7,625.2 217.1,626.3 216.5,625.5 215.9,626.2 215.3,625.7 214.7,625.8 214.1,625.4 213.5,625.7 212.9,626.0 212.3,626.2 211.7,626.0 211.1,626.4 210.5,626.0 209.9,625.5 209.3,625.1 208.7,625.0 208.1,624.7 207.5,624.8 206.9,624.2 206.3,624.1 205.7,623.2 205.1,623.1 204.5,622.4 203.9,622.0 203.3,622.1 202.7,622.4 202.1,622.6 201.5,623.0 200.9,623.0 200.3,622.7 199.7,622.6 199.1,622.7 198.5,622.7 197.9,622.6 197.3,622.0 196.7,621.4 196.1,621.1 195.5,621.1 194.9,621.1 194.3,621.0 193.7,621.1 193.1,621.1 192.5,621.1 191.9,621.1 191.3,621.1 190.7,621.1 190.1,621.0 189.5,621.1 188.9,621.1 188.3,621.0 187.7,621.0 187.1,621.1 186.5,621.1 185.9,621.1 185.3,621.0 184.7,621.1 184.1,621.1 183.5,621.1 182.9,621.1 182.3,621.1 181.7,621.1 181.1,621.0 180.5,621.0 179.9,621.1 179.3,621.1 178.7,621.1 178.1,621.1 177.5,621.1 176.9,621.1 176.3,621.3 175.7,621.6 175.1,621.7 174.5,622.0 173.9,622.2 173.3,622.5 172.7,622.8 172.1,623.0 171.5,623.2 170.9,624.1 170.3,623.7 169.7,624.1 169.1,624.6 168.5,624.9 167.9,625.2 167.3,625.0 166.7,625.5 166.1,625.8 165.5,625.7 164.9,626.4 164.3,626.5 163.7,627.0 163.1,626.8 162.5,626.7 161.9,627.2 161.3,626.5 160.7,626.8 160.1,626.9 159.5,627.0 158.9,626.9 158.3,626.4 157.7,626.4 157.1,626.3 156.5,626.1 155.9,625.8 155.3,626.1 154.7,625.8 154.1,625.7 153.5,625.5 152.9,625.3 152.3,625.1 151.7,624.6 151.1,624.8 150.5,624.1 149.9,622.7 149.3,621.7 148.7,621.2 148.1,621.2 147.5,621.3 146.9,621.4 146.3,621.4 145.7,621.5 145.1,621.4 144.5,621.6 143.9,622.4 143.3,623.2 142.7,625.1 142.1,625.1 141.5,625.7 140.9,626.4 140.3,626.2 139.7,626.1 139.1,626.1 138.5,626.2 137.9,625.9 137.3,626.6 136.7,626.2 136.1,625.3 135.5,625.1 134.9,625.1 134.3,625.3 133.7,624.9 133.1,625.7 132.5,625.2 131.9,625.6 131.3,625.7 130.7,625.6 130.1,626.4 129.5,625.1 128.9,625.1 128.3,625.2 127.7,624.7 127.1,625.1 126.5,623.7 125.9,621.9 125.3,621.3 124.7,621.2 124.1,621.2 123.5,621.2 122.9,621.5 122.3,622.0 121.7,622.3 121.1,622.6 120.5,623.0 119.9,623.2 119.3,623.7 118.7,624.6 118.1,624.8 117.5,624.5 116.9,625.0 116.3,625.1 115.7,625.2 115.1,625.4 114.5,625.8 113.9,624.7 113.3,624.2 112.7,623.0 112.1,621.3 111.5,621.1 110.9,621.1 110.3,621.1 109.7,621.0 109.1,621.1 108.5,621.0 107.9,621.0 107.3,621.0 106.7,621.0 106.1,621.1 105.5,621.0 104.9,621.0 104.3,621.0 103.7,621.1 103.1,621.0 102.5,621.1 101.9,621.0 101.3,621.0 100.7,621.0 100.1,621.0 99.5,621.0 98.9,621.1 98.3,621.0 97.7,621.1 97.1,621.1 96.5,621.0 95.9,621.0 95.3,621.0 94.7,621.1 94.1,621.1 93.5,621.0 92.9,621.0 92.3,621.1 91.7,621.0 91.1,621.1 90.5,621.1 89.9,621.1 89.3,621.1" fill="#6c668f" clip-path="url(#cin)"/>
<rect x="108.6" y="613" width="3.6" height="16" rx="1.8" fill="#d9d1ff" stroke="#7b61ff" stroke-width="1.3"/>
<rect x="472.2" y="613" width="3.6" height="16" rx="1.8" fill="#d9d1ff" stroke="#7b61ff" stroke-width="1.3"/>
<path d="M50.6 605.4 H60 M53.4 605.2 V604.2 Q53.4 603.4 54.2 603.4 H56.4 Q57.2 603.4 57.2 604.2 V605.2 M51.6 605.6 V612.4 Q51.6 613.8 53 613.8 H57.6 Q59 613.8 59 612.4 V605.6 M54.1 607.6 V611.4 M56.5 607.6 V611.4" stroke="#9f9dab" stroke-width="1.4" stroke-linecap="round" stroke-linejoin="round" fill="none"/>
<path d="M50 632.3 H60.6 M51.4 627 L55.3 630.9 L59.2 627 M51.4 637.6 L55.3 633.7 L59.2 637.6" stroke="#9f9dab" stroke-width="1.4" stroke-linecap="round" stroke-linejoin="round" fill="none"/>
</svg><div class="panel" style="left:796.3px;top:70px;width:167.6px;height:573.8px;border-radius:6px"></div>
<div class="ln" style="left:796.3px;top:94.3px;width:167.6px;height:1px;background:#242238"></div>
<div style="position:absolute;left:796.3px;top:70px;width:56.3px;height:24.8px;background:#7b61ff;border-radius:4px 0 0 0"></div>
<div class="t" style="left:810.6px;top:77.9px;font-size:10.8px;color:#fff">Pitch</div>
<div class="t g" style="left:866px;top:77.9px;font-size:10.8px">Level</div>
<div class="t g" style="left:919px;top:77.9px;font-size:10.8px">Attack</div>
<div class="t" style="left:809.6px;top:110.5px;font-size:11px;letter-spacing:-0.10px;color:#fff">TRACKS</div>
<div style="position:absolute;left:939.3px;top:114.8px;width:9.4px;height:2px;background:#a09eac;border-radius:1px"></div>
<div style="position:absolute;left:809.2px;top:132.0px;width:141.8px;height:24.7px;border:2px solid #725ff0;border-radius:4.5px;background:#2e2b42"></div>
<div class="t" style="left:817.8px;top:138.4px">Lead vocal</div>
<div style="position:absolute;left:809.2px;top:161.0px;width:141.8px;height:24px;border:1.3px solid #39364e;border-radius:4.5px"></div>
<div class="t" style="left:817.8px;top:167.4px">Lead vocal - 1</div>
<div style="position:absolute;left:809.2px;top:189.4px;width:141.8px;height:24px;border:1.3px solid #39364e;border-radius:4.5px"></div>
<div class="t" style="left:817.8px;top:195.8px">Lead vocal - 2</div>
<div class="ln" style="left:809.4px;top:225.6px;width:141.3px;height:1.4px;background:#322f47"></div>
<div class="t" style="left:809.6px;top:241.4px;font-size:11px;letter-spacing:-0.08px;color:#fff">SCALE</div>
<div style="position:absolute;left:939.3px;top:245.5px;width:9.4px;height:2px;background:#a09eac;border-radius:1px"></div>
<div class="box" style="left:809.4px;top:263.2px;width:141.3px;height:20.6px"></div>
<div class="t" style="left:816.2px;top:268.3px;letter-spacing:-0.08px">F Harmonic Minor</div>
<div class="t" style="left:809.4px;top:295.3px">Snap to scale notes</div>
<div class="box" style="left:930.4px;top:295.5px;width:20.4px;height:9.6px;border-radius:5px"></div>
<div class="ln" style="left:809.4px;top:319.3px;width:141.3px;height:1.4px;background:#322f47"></div>
<div class="t" style="left:809.6px;top:335.0px;font-size:11px;letter-spacing:0.15px;color:#fff">FORMANT SHIFT</div>
<div class="box" style="left:930px;top:335px;width:20.8px;height:10.4px;border-radius:5.2px;background:#7b61ff"></div>
<div class="box" style="left:809.4px;top:357px;width:141.3px;height:22px"></div>
<div class="t" style="left:816px;top:363.2px;font-size:11.8px;color:#fff">0</div>
<div class="t g" style="left:934.4px;top:364.6px;font-size:8.2px;letter-spacing:0.2px">CT</div>
<div class="ln" style="left:809.4px;top:391.1px;width:141.3px;height:1.4px;background:#322f47"></div>
<div class="t" style="left:809.6px;top:407.1px;font-size:11px;letter-spacing:0.05px;color:#fff">NOTE SETTINGS</div>
<div style="position:absolute;left:939.3px;top:411.5px;width:9.4px;height:2px;background:#a09eac;border-radius:1px"></div>
<div class="t g" style="left:809.4px;top:430.6px">Drift</div>
<div class="t g" style="left:883.6px;top:430.6px">Level</div>
<div class="box" style="left:809.4px;top:446.2px;width:67.3px;height:21.8px"></div>
<div class="box" style="left:883.3px;top:446.2px;width:67.5px;height:21.8px"></div>
<div class="t" style="left:815.6px;top:452.2px;font-size:11.8px;color:#fff">0.00</div>
<div class="t" style="left:889.8px;top:452.2px;font-size:11.8px;color:#fff">0.00</div>
<div class="t g" style="left:863.6px;top:452.2px;font-size:10.5px">%</div>
<div class="t g" style="left:933.6px;top:453.4px;font-size:8.2px">dB</div>
<div class="t g" style="left:809.4px;top:476.4px">Formant Shift</div>
<div class="t g" style="left:884.2px;top:476.4px">Correction</div>
<div class="box" style="left:809.4px;top:491.2px;width:67.6px;height:21.8px"></div>
<div class="box" style="left:884px;top:491.2px;width:67.6px;height:21.8px"></div>
<div class="t" style="left:816px;top:497.2px;font-size:11.8px;color:#fff">0</div>
<div class="t" style="left:890.6px;top:497.2px;font-size:11.8px;color:#fff">0</div>
<div class="t g" style="left:860.6px;top:498.8px;font-size:8.2px;letter-spacing:0.2px">CT</div>
<div class="t g" style="left:935.2px;top:498.8px;font-size:8.2px;letter-spacing:0.2px">CT</div>
<div class="ln" style="left:809.4px;top:525.6px;width:141.3px;height:1.4px;background:#322f47"></div>
<div class="box" style="left:809.3px;top:610.2px;width:20.4px;height:20.3px"></div>
<svg width="1000" height="681" viewBox="0 0 1000 681">
<circle cx="918.5" cy="144.2" r="3.8" fill="#9593a1"/>
<path d="M932 139.1 H939.5 M933.8 139.1 V145.0 M937.5 139.1 V145.0 M931.8 145.6 H939.6 M935.65 145.6 V149.4" stroke="#a3a1ae" stroke-width="1.5" stroke-linecap="butt" fill="none"/>
<circle cx="918.5" cy="173.2" r="3.8" fill="#9593a1"/>
<path d="M932 168.1 H939.5 M933.8 168.1 V174.0 M937.5 168.1 V174.0 M931.8 174.6 H939.6 M935.65 174.6 V178.4" stroke="#a3a1ae" stroke-width="1.5" stroke-linecap="butt" fill="none"/>
<circle cx="918.5" cy="201.6" r="3.8" fill="#9593a1"/>
<path d="M932 196.5 H939.5 M933.8 196.5 V202.4 M937.5 196.5 V202.4 M931.8 203.0 H939.6 M935.65 203.0 V206.8" stroke="#a3a1ae" stroke-width="1.5" stroke-linecap="butt" fill="none"/>
<path d="M932.2 271 L937.2 275.8 L942.2 271" stroke="#a3a1b0" stroke-width="1.2" stroke-linecap="round" stroke-linejoin="round" fill="none"/>
<circle cx="935.3" cy="300.3" r="3.9" fill="#fff"/>
<circle cx="945.5" cy="340.2" r="3.9" fill="#fff"/>
<path d="M817.2 615.6 L822 620.4 L817.2 625.2" stroke="#fff" stroke-width="1.3" stroke-linecap="round" stroke-linejoin="round" fill="none"/>
</svg>
</div>
</body></html>
